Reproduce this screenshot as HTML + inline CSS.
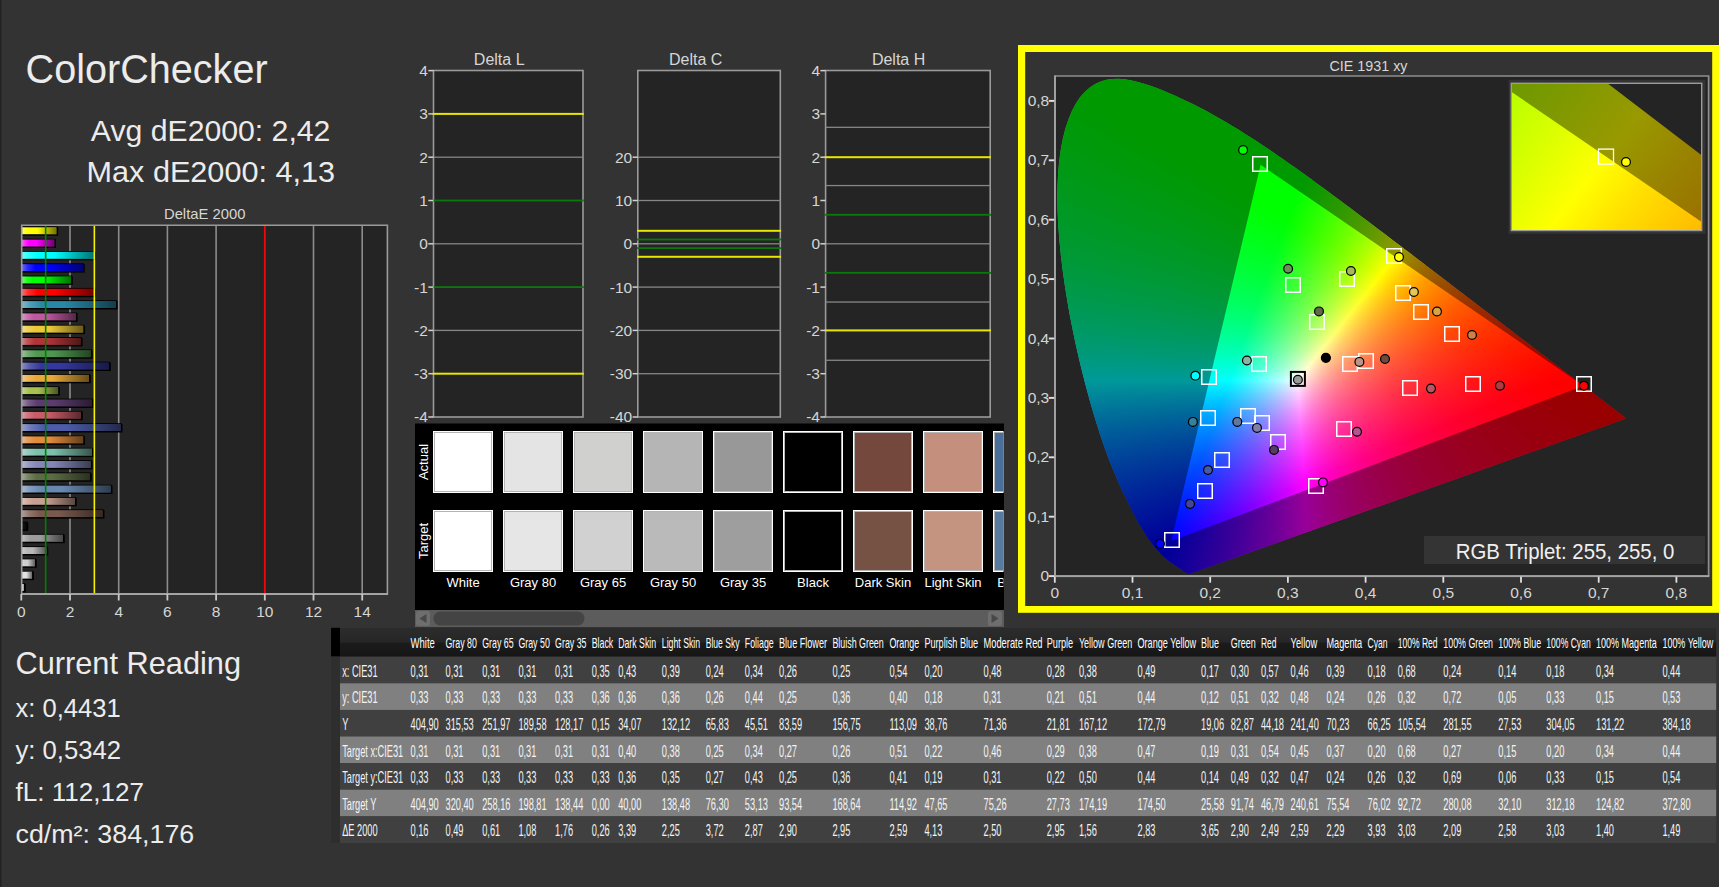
<!DOCTYPE html><html lang="en"><head><meta charset="utf-8"><title>ColorChecker</title>
<style>html,body{margin:0;padding:0;background:#333333;overflow:hidden}body{width:1719px;height:887px;position:relative;font-family:"Liberation Sans",sans-serif}
svg{position:absolute;left:0;top:0;display:block;font-family:"Liberation Sans",sans-serif}
svg text{white-space:pre}</style></head><body>
<svg id="page" width="1719" height="887" viewBox="0 0 1719 887">
<rect width="1719" height="887" fill="#333333"/><rect width="1.5" height="887" fill="#222"/>
<g id="headings">
<text x="25.6" y="83" font-size="40.5" fill="#ececec" textLength="242" lengthAdjust="spacingAndGlyphs">ColorChecker</text>
<text x="90.8" y="141.2" font-size="29" fill="#ececec" textLength="239.6" lengthAdjust="spacingAndGlyphs">Avg dE2000: 2,42</text>
<text x="86.6" y="182.4" font-size="29" fill="#ececec" textLength="248.4" lengthAdjust="spacingAndGlyphs">Max dE2000: 4,13</text>
<text x="15.5" y="674" font-size="30.5" fill="#ececec" textLength="225.5" lengthAdjust="spacingAndGlyphs">Current Reading</text>
<text x="15.5" y="717.1" font-size="26" fill="#ececec" textLength="105.2" lengthAdjust="spacingAndGlyphs">x: 0,4431</text>
<text x="15.5" y="758.6" font-size="26" fill="#ececec" textLength="105.6" lengthAdjust="spacingAndGlyphs">y: 0,5342</text>
<text x="15.5" y="800.6" font-size="26" fill="#ececec" textLength="128.5" lengthAdjust="spacingAndGlyphs">fL: 112,127</text>
<text x="15.5" y="842.7" font-size="26" fill="#ececec" textLength="178.7" lengthAdjust="spacingAndGlyphs">cd/m²: 384,176</text>
</g>
<g id="deltaE">
<text x="204.7" y="218.5" font-size="15" fill="#d6d6d6" text-anchor="middle" textLength="81.5" lengthAdjust="spacingAndGlyphs">DeltaE 2000</text>
<rect x="21" y="225" width="367" height="369" fill="#242424"/>
<rect x="69.2" y="225" width="1.6" height="369" fill="#8c8c8c"/>
<rect x="117.9" y="225" width="1.6" height="369" fill="#8c8c8c"/>
<rect x="166.6" y="225" width="1.6" height="369" fill="#8c8c8c"/>
<rect x="215.3" y="225" width="1.6" height="369" fill="#8c8c8c"/>
<rect x="312.7" y="225" width="1.6" height="369" fill="#8c8c8c"/>
<rect x="361.4" y="225" width="1.6" height="369" fill="#8c8c8c"/>
<defs><linearGradient id="bs" x1="0" x2="1" y1="0" y2="0"><stop offset="0" stop-color="#fff" stop-opacity=".42"/><stop offset=".09" stop-color="#fff" stop-opacity=".18"/><stop offset=".22" stop-color="#fff" stop-opacity="0"/><stop offset=".45" stop-color="#000" stop-opacity="0"/><stop offset="1" stop-color="#000" stop-opacity=".55"/></linearGradient></defs>
<rect x="21.5" y="227.2" width="36.68" height="8.5" fill="#000"/>
<rect x="21.5" y="226.4" width="35.88" height="8.5" fill="#000"/>
<rect x="21.8" y="227.3" width="34.58" height="6.9" fill="#ffff00"/>
<rect x="21.8" y="227.3" width="34.58" height="6.9" fill="url(#bs)"/>
<rect x="21.5" y="239.5" width="34.49" height="8.5" fill="#000"/>
<rect x="21.5" y="238.7" width="33.69" height="8.5" fill="#000"/>
<rect x="21.8" y="239.6" width="32.39" height="6.9" fill="#ff00ff"/>
<rect x="21.8" y="239.6" width="32.39" height="6.9" fill="url(#bs)"/>
<rect x="21.5" y="251.8" width="74.18" height="8.5" fill="#000"/>
<rect x="21.5" y="251" width="73.38" height="8.5" fill="#000"/>
<rect x="21.8" y="251.9" width="72.08" height="6.9" fill="#00ffff"/>
<rect x="21.8" y="251.9" width="72.08" height="6.9" fill="url(#bs)"/>
<rect x="21.5" y="264.1" width="63.22" height="8.5" fill="#000"/>
<rect x="21.5" y="263.3" width="62.42" height="8.5" fill="#000"/>
<rect x="21.8" y="264.2" width="61.12" height="6.9" fill="#0000ff"/>
<rect x="21.8" y="264.2" width="61.12" height="6.9" fill="url(#bs)"/>
<rect x="21.5" y="276.4" width="51.29" height="8.5" fill="#000"/>
<rect x="21.5" y="275.6" width="50.49" height="8.5" fill="#000"/>
<rect x="21.8" y="276.5" width="49.19" height="6.9" fill="#00ff00"/>
<rect x="21.8" y="276.5" width="49.19" height="6.9" fill="url(#bs)"/>
<rect x="21.5" y="288.7" width="74.18" height="8.5" fill="#000"/>
<rect x="21.5" y="287.9" width="73.38" height="8.5" fill="#000"/>
<rect x="21.8" y="288.8" width="72.08" height="6.9" fill="#ff0000"/>
<rect x="21.8" y="288.8" width="72.08" height="6.9" fill="url(#bs)"/>
<rect x="21.5" y="301" width="96.1" height="8.5" fill="#000"/>
<rect x="21.5" y="300.2" width="95.3" height="8.5" fill="#000"/>
<rect x="21.8" y="301.1" width="94" height="6.9" fill="#2888a8"/>
<rect x="21.8" y="301.1" width="94" height="6.9" fill="url(#bs)"/>
<rect x="21.5" y="313.3" width="56.16" height="8.5" fill="#000"/>
<rect x="21.5" y="312.5" width="55.36" height="8.5" fill="#000"/>
<rect x="21.8" y="313.4" width="54.06" height="6.9" fill="#c058a0"/>
<rect x="21.8" y="313.4" width="54.06" height="6.9" fill="url(#bs)"/>
<rect x="21.5" y="325.6" width="63.47" height="8.5" fill="#000"/>
<rect x="21.5" y="324.8" width="62.67" height="8.5" fill="#000"/>
<rect x="21.8" y="325.7" width="61.37" height="6.9" fill="#ecc838"/>
<rect x="21.8" y="325.7" width="61.37" height="6.9" fill="url(#bs)"/>
<rect x="21.5" y="337.9" width="61.03" height="8.5" fill="#000"/>
<rect x="21.5" y="337.1" width="60.23" height="8.5" fill="#000"/>
<rect x="21.8" y="338" width="58.93" height="6.9" fill="#b03438"/>
<rect x="21.8" y="338" width="58.93" height="6.9" fill="url(#bs)"/>
<rect x="21.5" y="350.2" width="71.02" height="8.5" fill="#000"/>
<rect x="21.5" y="349.4" width="70.21" height="8.5" fill="#000"/>
<rect x="21.8" y="350.3" width="68.91" height="6.9" fill="#509850"/>
<rect x="21.8" y="350.3" width="68.91" height="6.9" fill="url(#bs)"/>
<rect x="21.5" y="362.5" width="89.28" height="8.5" fill="#000"/>
<rect x="21.5" y="361.7" width="88.48" height="8.5" fill="#000"/>
<rect x="21.8" y="362.6" width="87.18" height="6.9" fill="#34389c"/>
<rect x="21.8" y="362.6" width="87.18" height="6.9" fill="url(#bs)"/>
<rect x="21.5" y="374.8" width="69.31" height="8.5" fill="#000"/>
<rect x="21.5" y="374" width="68.51" height="8.5" fill="#000"/>
<rect x="21.8" y="374.9" width="67.21" height="6.9" fill="#e8a838"/>
<rect x="21.8" y="374.9" width="67.21" height="6.9" fill="url(#bs)"/>
<rect x="21.5" y="387.1" width="38.39" height="8.5" fill="#000"/>
<rect x="21.5" y="386.3" width="37.59" height="8.5" fill="#000"/>
<rect x="21.8" y="387.2" width="36.29" height="6.9" fill="#a8c050"/>
<rect x="21.8" y="387.2" width="36.29" height="6.9" fill="url(#bs)"/>
<rect x="21.5" y="399.4" width="72.23" height="8.5" fill="#000"/>
<rect x="21.5" y="398.6" width="71.43" height="8.5" fill="#000"/>
<rect x="21.8" y="399.5" width="70.13" height="6.9" fill="#5c3c70"/>
<rect x="21.8" y="399.5" width="70.13" height="6.9" fill="url(#bs)"/>
<rect x="21.5" y="411.7" width="61.27" height="8.5" fill="#000"/>
<rect x="21.5" y="410.9" width="60.48" height="8.5" fill="#000"/>
<rect x="21.8" y="411.8" width="59.17" height="6.9" fill="#c85c68"/>
<rect x="21.8" y="411.8" width="59.17" height="6.9" fill="url(#bs)"/>
<rect x="21.5" y="424" width="100.97" height="8.5" fill="#000"/>
<rect x="21.5" y="423.2" width="100.17" height="8.5" fill="#000"/>
<rect x="21.8" y="424.1" width="98.87" height="6.9" fill="#4c5ca8"/>
<rect x="21.8" y="424.1" width="98.87" height="6.9" fill="url(#bs)"/>
<rect x="21.5" y="436.3" width="63.47" height="8.5" fill="#000"/>
<rect x="21.5" y="435.5" width="62.67" height="8.5" fill="#000"/>
<rect x="21.8" y="436.4" width="61.37" height="6.9" fill="#e08c3c"/>
<rect x="21.8" y="436.4" width="61.37" height="6.9" fill="url(#bs)"/>
<rect x="21.5" y="448.6" width="72.23" height="8.5" fill="#000"/>
<rect x="21.5" y="447.8" width="71.43" height="8.5" fill="#000"/>
<rect x="21.8" y="448.7" width="70.13" height="6.9" fill="#7cc0ac"/>
<rect x="21.8" y="448.7" width="70.13" height="6.9" fill="url(#bs)"/>
<rect x="21.5" y="460.9" width="71.02" height="8.5" fill="#000"/>
<rect x="21.5" y="460.1" width="70.21" height="8.5" fill="#000"/>
<rect x="21.8" y="461" width="68.91" height="6.9" fill="#8486b8"/>
<rect x="21.8" y="461" width="68.91" height="6.9" fill="url(#bs)"/>
<rect x="21.5" y="473.2" width="70.28" height="8.5" fill="#000"/>
<rect x="21.5" y="472.4" width="69.48" height="8.5" fill="#000"/>
<rect x="21.8" y="473.3" width="68.18" height="6.9" fill="#5c6c44"/>
<rect x="21.8" y="473.3" width="68.18" height="6.9" fill="url(#bs)"/>
<rect x="21.5" y="485.5" width="90.98" height="8.5" fill="#000"/>
<rect x="21.5" y="484.7" width="90.18" height="8.5" fill="#000"/>
<rect x="21.8" y="485.6" width="88.88" height="6.9" fill="#6888b0"/>
<rect x="21.8" y="485.6" width="88.88" height="6.9" fill="url(#bs)"/>
<rect x="21.5" y="497.8" width="55.19" height="8.5" fill="#000"/>
<rect x="21.5" y="497" width="54.39" height="8.5" fill="#000"/>
<rect x="21.8" y="497.9" width="53.09" height="6.9" fill="#c8a090"/>
<rect x="21.8" y="497.9" width="53.09" height="6.9" fill="url(#bs)"/>
<rect x="21.5" y="510.1" width="82.95" height="8.5" fill="#000"/>
<rect x="21.5" y="509.3" width="82.15" height="8.5" fill="#000"/>
<rect x="21.8" y="510.2" width="80.85" height="6.9" fill="#7a5a4e"/>
<rect x="21.8" y="510.2" width="80.85" height="6.9" fill="url(#bs)"/>
<rect x="21.5" y="522.4" width="6.73" height="8.5" fill="#000"/>
<rect x="21.5" y="521.6" width="5.93" height="8.5" fill="#000"/>
<rect x="21.8" y="522.5" width="4.63" height="6.9" fill="#101010"/>
<rect x="21.8" y="522.5" width="4.63" height="6.9" fill="url(#bs)"/>
<rect x="21.5" y="534.7" width="43.26" height="8.5" fill="#000"/>
<rect x="21.5" y="533.9" width="42.46" height="8.5" fill="#000"/>
<rect x="21.8" y="534.8" width="41.16" height="6.9" fill="#9c9c9c"/>
<rect x="21.8" y="534.8" width="41.16" height="6.9" fill="url(#bs)"/>
<rect x="21.5" y="547" width="26.7" height="8.5" fill="#000"/>
<rect x="21.5" y="546.2" width="25.9" height="8.5" fill="#000"/>
<rect x="21.8" y="547.1" width="24.6" height="6.9" fill="#b8b8b8"/>
<rect x="21.8" y="547.1" width="24.6" height="6.9" fill="url(#bs)"/>
<rect x="21.5" y="559.3" width="15.25" height="8.5" fill="#000"/>
<rect x="21.5" y="558.5" width="14.45" height="8.5" fill="#000"/>
<rect x="21.8" y="559.4" width="13.15" height="6.9" fill="#d0d0d0"/>
<rect x="21.8" y="559.4" width="13.15" height="6.9" fill="url(#bs)"/>
<rect x="21.5" y="571.6" width="12.33" height="8.5" fill="#000"/>
<rect x="21.5" y="570.8" width="11.53" height="8.5" fill="#000"/>
<rect x="21.8" y="571.7" width="10.23" height="6.9" fill="#e2e2e2"/>
<rect x="21.8" y="571.7" width="10.23" height="6.9" fill="url(#bs)"/>
<rect x="21.5" y="583.9" width="4.3" height="8.5" fill="#000"/>
<rect x="21.5" y="583.1" width="3.5" height="8.5" fill="#000"/>
<rect x="21.8" y="584" width="2.2" height="6.9" fill="#f4f4f4"/>
<rect x="21.8" y="584" width="2.2" height="6.9" fill="url(#bs)"/>
<rect x="44.85" y="225" width="1.6" height="369" fill="#008000"/>
<rect x="93.55" y="225" width="1.6" height="369" fill="#f4f400"/>
<rect x="263.9" y="225" width="1.8" height="369" fill="#f00808"/>
<path d="M21.7 594 V225.2 H387.4 V594 Z" fill="none" stroke="#9a9a9a" stroke-width="1.6"/>
<rect x="21" y="593.1" width="367" height="1.8" fill="#a8a8a8"/>
<rect x="20.4" y="594" width="1.8" height="6.5" fill="#c8c8c8"/>
<text x="21.3" y="617" font-size="15.5" fill="#d6d6d6" text-anchor="middle">0</text>
<rect x="69.1" y="594" width="1.8" height="6.5" fill="#c8c8c8"/>
<text x="70" y="617" font-size="15.5" fill="#d6d6d6" text-anchor="middle">2</text>
<rect x="117.8" y="594" width="1.8" height="6.5" fill="#c8c8c8"/>
<text x="118.7" y="617" font-size="15.5" fill="#d6d6d6" text-anchor="middle">4</text>
<rect x="166.5" y="594" width="1.8" height="6.5" fill="#c8c8c8"/>
<text x="167.4" y="617" font-size="15.5" fill="#d6d6d6" text-anchor="middle">6</text>
<rect x="215.2" y="594" width="1.8" height="6.5" fill="#c8c8c8"/>
<text x="216.1" y="617" font-size="15.5" fill="#d6d6d6" text-anchor="middle">8</text>
<rect x="263.9" y="594" width="1.8" height="6.5" fill="#c8c8c8"/>
<text x="264.8" y="617" font-size="15.5" fill="#d6d6d6" text-anchor="middle">10</text>
<rect x="312.6" y="594" width="1.8" height="6.5" fill="#c8c8c8"/>
<text x="313.5" y="617" font-size="15.5" fill="#d6d6d6" text-anchor="middle">12</text>
<rect x="361.3" y="594" width="1.8" height="6.5" fill="#c8c8c8"/>
<text x="362.2" y="617" font-size="15.5" fill="#d6d6d6" text-anchor="middle">14</text>
</g>
<g id="deltaL">
<text x="499.2" y="65.4" font-size="16" fill="#d6d6d6" text-anchor="middle">Delta L</text>
<rect x="433.5" y="70.5" width="149.5" height="346.5" fill="#242424"/>
<rect x="433.5" y="70.5" width="149.5" height="346.5" fill="none" stroke="#9a9a9a" stroke-width="1.6"/>
<rect x="433.5" y="156.55" width="149.5" height="1.3" fill="#868686"/>
<rect x="433.5" y="243.15" width="149.5" height="1.3" fill="#868686"/>
<rect x="433.5" y="329.75" width="149.5" height="1.3" fill="#868686"/>
<rect x="432.7" y="112.9" width="151.1" height="2" fill="#e6e600"/>
<rect x="432.7" y="372.7" width="151.1" height="2" fill="#e6e600"/>
<rect x="432.7" y="199.6" width="151.1" height="1.8" fill="#0b780b"/>
<rect x="432.7" y="286.2" width="151.1" height="1.8" fill="#0b780b"/>
<rect x="428.3" y="69.85" width="5.2" height="1.5" fill="#d0d0d0"/>
<text x="427.9" y="76" font-size="15.5" fill="#d6d6d6" text-anchor="end">4</text>
<rect x="428.3" y="113.15" width="5.2" height="1.5" fill="#d0d0d0"/>
<text x="427.9" y="119.3" font-size="15.5" fill="#d6d6d6" text-anchor="end">3</text>
<rect x="428.3" y="156.45" width="5.2" height="1.5" fill="#d0d0d0"/>
<text x="427.9" y="162.6" font-size="15.5" fill="#d6d6d6" text-anchor="end">2</text>
<rect x="428.3" y="199.75" width="5.2" height="1.5" fill="#d0d0d0"/>
<text x="427.9" y="205.9" font-size="15.5" fill="#d6d6d6" text-anchor="end">1</text>
<rect x="428.3" y="243.05" width="5.2" height="1.5" fill="#d0d0d0"/>
<text x="427.9" y="249.2" font-size="15.5" fill="#d6d6d6" text-anchor="end">0</text>
<rect x="428.3" y="286.35" width="5.2" height="1.5" fill="#d0d0d0"/>
<text x="427.9" y="292.5" font-size="15.5" fill="#d6d6d6" text-anchor="end">-1</text>
<rect x="428.3" y="329.65" width="5.2" height="1.5" fill="#d0d0d0"/>
<text x="427.9" y="335.8" font-size="15.5" fill="#d6d6d6" text-anchor="end">-2</text>
<rect x="428.3" y="372.95" width="5.2" height="1.5" fill="#d0d0d0"/>
<text x="427.9" y="379.1" font-size="15.5" fill="#d6d6d6" text-anchor="end">-3</text>
<rect x="428.3" y="416.25" width="5.2" height="1.5" fill="#d0d0d0"/>
<text x="427.9" y="422.4" font-size="15.5" fill="#d6d6d6" text-anchor="end">-4</text>
</g>
<g id="deltaC">
<text x="695.7" y="65.4" font-size="16" fill="#d6d6d6" text-anchor="middle">Delta C</text>
<rect x="637.8" y="70.5" width="142.5" height="346.5" fill="#242424"/>
<rect x="637.8" y="70.5" width="142.5" height="346.5" fill="none" stroke="#9a9a9a" stroke-width="1.6"/>
<rect x="637.8" y="156.55" width="142.5" height="1.3" fill="#868686"/>
<rect x="637.8" y="199.85" width="142.5" height="1.3" fill="#868686"/>
<rect x="637.8" y="243.15" width="142.5" height="1.3" fill="#868686"/>
<rect x="637.8" y="286.45" width="142.5" height="1.3" fill="#868686"/>
<rect x="637.8" y="329.75" width="142.5" height="1.3" fill="#868686"/>
<rect x="637.8" y="373.05" width="142.5" height="1.3" fill="#868686"/>
<rect x="637" y="229.81" width="144.1" height="2" fill="#e6e600"/>
<rect x="637" y="255.79" width="144.1" height="2" fill="#e6e600"/>
<rect x="637" y="238.57" width="144.1" height="1.8" fill="#0b780b"/>
<rect x="637" y="247.23" width="144.1" height="1.8" fill="#0b780b"/>
<rect x="632.6" y="156.45" width="5.2" height="1.5" fill="#d0d0d0"/>
<text x="632.2" y="162.6" font-size="15.5" fill="#d6d6d6" text-anchor="end">20</text>
<rect x="632.6" y="199.75" width="5.2" height="1.5" fill="#d0d0d0"/>
<text x="632.2" y="205.9" font-size="15.5" fill="#d6d6d6" text-anchor="end">10</text>
<rect x="632.6" y="243.05" width="5.2" height="1.5" fill="#d0d0d0"/>
<text x="632.2" y="249.2" font-size="15.5" fill="#d6d6d6" text-anchor="end">0</text>
<rect x="632.6" y="286.35" width="5.2" height="1.5" fill="#d0d0d0"/>
<text x="632.2" y="292.5" font-size="15.5" fill="#d6d6d6" text-anchor="end">-10</text>
<rect x="632.6" y="329.65" width="5.2" height="1.5" fill="#d0d0d0"/>
<text x="632.2" y="335.8" font-size="15.5" fill="#d6d6d6" text-anchor="end">-20</text>
<rect x="632.6" y="372.95" width="5.2" height="1.5" fill="#d0d0d0"/>
<text x="632.2" y="379.1" font-size="15.5" fill="#d6d6d6" text-anchor="end">-30</text>
<rect x="632.6" y="416.25" width="5.2" height="1.5" fill="#d0d0d0"/>
<text x="632.2" y="422.4" font-size="15.5" fill="#d6d6d6" text-anchor="end">-40</text>
</g>
<g id="deltaH">
<text x="898.6" y="65.4" font-size="16" fill="#d6d6d6" text-anchor="middle">Delta H</text>
<rect x="825.6" y="70.5" width="164.6" height="346.5" fill="#242424"/>
<rect x="825.6" y="70.5" width="164.6" height="346.5" fill="none" stroke="#9a9a9a" stroke-width="1.6"/>
<rect x="825.6" y="126.67" width="164.6" height="1.3" fill="#868686"/>
<rect x="825.6" y="184.91" width="164.6" height="1.3" fill="#868686"/>
<rect x="825.6" y="243.15" width="164.6" height="1.3" fill="#868686"/>
<rect x="825.6" y="301.39" width="164.6" height="1.3" fill="#868686"/>
<rect x="825.6" y="359.63" width="164.6" height="1.3" fill="#868686"/>
<rect x="824.8" y="156.2" width="166.2" height="2" fill="#e6e600"/>
<rect x="824.8" y="329.4" width="166.2" height="2" fill="#e6e600"/>
<rect x="824.8" y="213.89" width="166.2" height="1.8" fill="#0b780b"/>
<rect x="824.8" y="271.91" width="166.2" height="1.8" fill="#0b780b"/>
<rect x="820.4" y="69.85" width="5.2" height="1.5" fill="#d0d0d0"/>
<text x="820" y="76" font-size="15.5" fill="#d6d6d6" text-anchor="end">4</text>
<rect x="820.4" y="113.15" width="5.2" height="1.5" fill="#d0d0d0"/>
<text x="820" y="119.3" font-size="15.5" fill="#d6d6d6" text-anchor="end">3</text>
<rect x="820.4" y="156.45" width="5.2" height="1.5" fill="#d0d0d0"/>
<text x="820" y="162.6" font-size="15.5" fill="#d6d6d6" text-anchor="end">2</text>
<rect x="820.4" y="199.75" width="5.2" height="1.5" fill="#d0d0d0"/>
<text x="820" y="205.9" font-size="15.5" fill="#d6d6d6" text-anchor="end">1</text>
<rect x="820.4" y="243.05" width="5.2" height="1.5" fill="#d0d0d0"/>
<text x="820" y="249.2" font-size="15.5" fill="#d6d6d6" text-anchor="end">0</text>
<rect x="820.4" y="286.35" width="5.2" height="1.5" fill="#d0d0d0"/>
<text x="820" y="292.5" font-size="15.5" fill="#d6d6d6" text-anchor="end">-1</text>
<rect x="820.4" y="329.65" width="5.2" height="1.5" fill="#d0d0d0"/>
<text x="820" y="335.8" font-size="15.5" fill="#d6d6d6" text-anchor="end">-2</text>
<rect x="820.4" y="372.95" width="5.2" height="1.5" fill="#d0d0d0"/>
<text x="820" y="379.1" font-size="15.5" fill="#d6d6d6" text-anchor="end">-3</text>
<rect x="820.4" y="416.25" width="5.2" height="1.5" fill="#d0d0d0"/>
<text x="820" y="422.4" font-size="15.5" fill="#d6d6d6" text-anchor="end">-4</text>
</g>
<g id="swatches">
<rect x="415" y="423.5" width="589" height="203.5" fill="#000"/>
<clipPath id="swc"><rect x="415" y="423.5" width="588.5" height="186"/></clipPath><g clip-path="url(#swc)">
<rect x="433" y="431" width="60" height="62" fill="#fff"/><rect x="434" y="432" width="58" height="60" fill="#b4b4b4"/><rect x="435" y="433" width="56" height="58" fill="#ffffff"/>
<rect x="433" y="510" width="60" height="62" fill="#fff"/><rect x="434" y="511" width="58" height="60" fill="#b4b4b4"/><rect x="435" y="512" width="56" height="58" fill="#ffffff"/>
<text x="463" y="587" font-size="13" fill="#fff" text-anchor="middle">White</text>
<rect x="503" y="431" width="60" height="62" fill="#fff"/><rect x="504" y="432" width="58" height="60" fill="#b4b4b4"/><rect x="505" y="433" width="56" height="58" fill="#e4e4e4"/>
<rect x="503" y="510" width="60" height="62" fill="#fff"/><rect x="504" y="511" width="58" height="60" fill="#b4b4b4"/><rect x="505" y="512" width="56" height="58" fill="#e6e6e6"/>
<text x="533" y="587" font-size="13" fill="#fff" text-anchor="middle">Gray 80</text>
<rect x="573" y="431" width="60" height="62" fill="#fff"/><rect x="574" y="432" width="58" height="60" fill="#b4b4b4"/><rect x="575" y="433" width="56" height="58" fill="#d0d0ce"/>
<rect x="573" y="510" width="60" height="62" fill="#fff"/><rect x="574" y="511" width="58" height="60" fill="#b4b4b4"/><rect x="575" y="512" width="56" height="58" fill="#d1d1d1"/>
<text x="603" y="587" font-size="13" fill="#fff" text-anchor="middle">Gray 65</text>
<rect x="643" y="431" width="60" height="62" fill="#fff"/><rect x="644" y="432" width="58" height="60" fill="#b4b4b4"/><rect x="645" y="433" width="56" height="58" fill="#b5b5b5"/>
<rect x="643" y="510" width="60" height="62" fill="#fff"/><rect x="644" y="511" width="58" height="60" fill="#b4b4b4"/><rect x="645" y="512" width="56" height="58" fill="#bababa"/>
<text x="673" y="587" font-size="13" fill="#fff" text-anchor="middle">Gray 50</text>
<rect x="713" y="431" width="60" height="62" fill="#fff"/><rect x="714" y="432" width="58" height="60" fill="#b4b4b4"/><rect x="715" y="433" width="56" height="58" fill="#989898"/>
<rect x="713" y="510" width="60" height="62" fill="#fff"/><rect x="714" y="511" width="58" height="60" fill="#b4b4b4"/><rect x="715" y="512" width="56" height="58" fill="#9e9e9e"/>
<text x="743" y="587" font-size="13" fill="#fff" text-anchor="middle">Gray 35</text>
<rect x="783" y="431" width="60" height="62" fill="#fff"/><rect x="784" y="432" width="58" height="60" fill="#b4b4b4"/><rect x="785" y="433" width="56" height="58" fill="#000000"/>
<rect x="783" y="510" width="60" height="62" fill="#fff"/><rect x="784" y="511" width="58" height="60" fill="#b4b4b4"/><rect x="785" y="512" width="56" height="58" fill="#000000"/>
<text x="813" y="587" font-size="13" fill="#fff" text-anchor="middle">Black</text>
<rect x="853" y="431" width="60" height="62" fill="#fff"/><rect x="854" y="432" width="58" height="60" fill="#b4b4b4"/><rect x="855" y="433" width="56" height="58" fill="#74483c"/>
<rect x="853" y="510" width="60" height="62" fill="#fff"/><rect x="854" y="511" width="58" height="60" fill="#b4b4b4"/><rect x="855" y="512" width="56" height="58" fill="#765244"/>
<text x="883" y="587" font-size="13" fill="#fff" text-anchor="middle">Dark Skin</text>
<rect x="923" y="431" width="60" height="62" fill="#fff"/><rect x="924" y="432" width="58" height="60" fill="#b4b4b4"/><rect x="925" y="433" width="56" height="58" fill="#c48f7c"/>
<rect x="923" y="510" width="60" height="62" fill="#fff"/><rect x="924" y="511" width="58" height="60" fill="#b4b4b4"/><rect x="925" y="512" width="56" height="58" fill="#c49481"/>
<text x="953" y="587" font-size="13" fill="#fff" text-anchor="middle">Light Skin</text>
<rect x="993" y="431" width="60" height="62" fill="#fff"/><rect x="994" y="432" width="58" height="60" fill="#b4b4b4"/><rect x="995" y="433" width="56" height="58" fill="#4a6f9c"/>
<rect x="993" y="510" width="60" height="62" fill="#fff"/><rect x="994" y="511" width="58" height="60" fill="#b4b4b4"/><rect x="995" y="512" width="56" height="58" fill="#587aa0"/>
<text x="1023" y="587" font-size="13" fill="#fff" text-anchor="middle">Blue Sky</text>
</g>
<text transform="translate(428.3,462) rotate(-90)" font-size="13" fill="#fff" text-anchor="middle">Actual</text>
<text transform="translate(428.3,541) rotate(-90)" font-size="13" fill="#fff" text-anchor="middle">Target</text>
<rect x="415" y="610" width="589" height="17" fill="#5c5c5c"/>
<rect x="433.5" y="611.5" width="151" height="14" rx="7" fill="#444"/>
<rect x="416" y="611" width="14" height="15" rx="2.5" fill="#6e6e6e"/><path d="M426.5 614 L426.5 623 L419.5 618.5Z" fill="#484848"/>
<rect x="988" y="611" width="14" height="15" rx="2.5" fill="#6e6e6e"/><path d="M991.5 614 L991.5 623 L998.5 618.5Z" fill="#484848"/>
</g>
<g id="table">
<defs><linearGradient id="th" x1="0" x2="0" y1="0" y2="1"><stop offset="0" stop-color="#2c2c2c"/><stop offset=".5" stop-color="#262626"/><stop offset=".52" stop-color="#1b1b1b"/><stop offset="1" stop-color="#161616"/></linearGradient></defs>
<rect x="331" y="627.8" width="1385.2" height="28.9" fill="url(#th)"/>
<rect x="331" y="627.8" width="9" height="28.9" fill="#000"/>
<rect x="331" y="656.7" width="1385.2" height="26.7" fill="#404040"/>
<rect x="331" y="683.3" width="1385.2" height="26.7" fill="#808080"/>
<rect x="331" y="709.9" width="1385.2" height="26.7" fill="#404040"/>
<rect x="331" y="736.5" width="1385.2" height="26.7" fill="#808080"/>
<rect x="331" y="763.1" width="1385.2" height="26.7" fill="#404040"/>
<rect x="331" y="789.7" width="1385.2" height="26.7" fill="#808080"/>
<rect x="331" y="816.3" width="1385.2" height="26.7" fill="#404040"/>
<rect x="331" y="656.7" width="9" height="186.3" fill="#2e2e2e"/>
<text x="410.5" y="647.8" font-size="14.3" fill="#fff" textLength="24.4" lengthAdjust="spacingAndGlyphs">White</text>
<text x="445.5" y="647.8" font-size="14.3" fill="#fff" textLength="31.4" lengthAdjust="spacingAndGlyphs">Gray 80</text>
<text x="482.2" y="647.8" font-size="14.3" fill="#fff" textLength="31.4" lengthAdjust="spacingAndGlyphs">Gray 65</text>
<text x="518.4" y="647.8" font-size="14.3" fill="#fff" textLength="31.4" lengthAdjust="spacingAndGlyphs">Gray 50</text>
<text x="555.1" y="647.8" font-size="14.3" fill="#fff" textLength="31.4" lengthAdjust="spacingAndGlyphs">Gray 35</text>
<text x="591.7" y="647.8" font-size="14.3" fill="#fff" textLength="21.6" lengthAdjust="spacingAndGlyphs">Black</text>
<text x="618.2" y="647.8" font-size="14.3" fill="#fff" textLength="37.9" lengthAdjust="spacingAndGlyphs">Dark Skin</text>
<text x="661.8" y="647.8" font-size="14.3" fill="#fff" textLength="38.3" lengthAdjust="spacingAndGlyphs">Light Skin</text>
<text x="705.7" y="647.8" font-size="14.3" fill="#fff" textLength="33.8" lengthAdjust="spacingAndGlyphs">Blue Sky</text>
<text x="744.8" y="647.8" font-size="14.3" fill="#fff" textLength="28.9" lengthAdjust="spacingAndGlyphs">Foliage</text>
<text x="779" y="647.8" font-size="14.3" fill="#fff" textLength="48" lengthAdjust="spacingAndGlyphs">Blue Flower</text>
<text x="832.4" y="647.8" font-size="14.3" fill="#fff" textLength="51.3" lengthAdjust="spacingAndGlyphs">Bluish Green</text>
<text x="889.4" y="647.8" font-size="14.3" fill="#fff" textLength="29.7" lengthAdjust="spacingAndGlyphs">Orange</text>
<text x="924.4" y="647.8" font-size="14.3" fill="#fff" textLength="53.8" lengthAdjust="spacingAndGlyphs">Purplish Blue</text>
<text x="983.5" y="647.8" font-size="14.3" fill="#fff" textLength="59" lengthAdjust="spacingAndGlyphs">Moderate Red</text>
<text x="1046.7" y="647.8" font-size="14.3" fill="#fff" textLength="26.5" lengthAdjust="spacingAndGlyphs">Purple</text>
<text x="1078.9" y="647.8" font-size="14.3" fill="#fff" textLength="53.3" lengthAdjust="spacingAndGlyphs">Yellow Green</text>
<text x="1137.5" y="647.8" font-size="14.3" fill="#fff" textLength="58.6" lengthAdjust="spacingAndGlyphs">Orange Yellow</text>
<text x="1201" y="647.8" font-size="14.3" fill="#fff" textLength="17.9" lengthAdjust="spacingAndGlyphs">Blue</text>
<text x="1230.8" y="647.8" font-size="14.3" fill="#fff" textLength="24.8" lengthAdjust="spacingAndGlyphs">Green</text>
<text x="1260.9" y="647.8" font-size="14.3" fill="#fff" textLength="15.5" lengthAdjust="spacingAndGlyphs">Red</text>
<text x="1290.6" y="647.8" font-size="14.3" fill="#fff" textLength="26.5" lengthAdjust="spacingAndGlyphs">Yellow</text>
<text x="1326.4" y="647.8" font-size="14.3" fill="#fff" textLength="35.8" lengthAdjust="spacingAndGlyphs">Magenta</text>
<text x="1367.6" y="647.8" font-size="14.3" fill="#fff" textLength="20" lengthAdjust="spacingAndGlyphs">Cyan</text>
<text x="1397.7" y="647.8" font-size="14.3" fill="#fff" textLength="39.9" lengthAdjust="spacingAndGlyphs">100% Red</text>
<text x="1443.3" y="647.8" font-size="14.3" fill="#fff" textLength="49.7" lengthAdjust="spacingAndGlyphs">100% Green</text>
<text x="1498.3" y="647.8" font-size="14.3" fill="#fff" textLength="42.8" lengthAdjust="spacingAndGlyphs">100% Blue</text>
<text x="1546.3" y="647.8" font-size="14.3" fill="#fff" textLength="44.4" lengthAdjust="spacingAndGlyphs">100% Cyan</text>
<text x="1596" y="647.8" font-size="14.3" fill="#fff" textLength="60.7" lengthAdjust="spacingAndGlyphs">100% Magenta</text>
<text x="1662.4" y="647.8" font-size="14.3" fill="#fff" textLength="50.9" lengthAdjust="spacingAndGlyphs">100% Yellow</text>
<text transform="translate(342.2,676.7) scale(.56,1)" font-size="16.5" fill="#f4f4f4">x: CIE31</text>
<text transform="translate(410.5,676.7) scale(.56,1)" font-size="16.5" fill="#f4f4f4">0,31</text>
<text transform="translate(445.5,676.7) scale(.56,1)" font-size="16.5" fill="#f4f4f4">0,31</text>
<text transform="translate(482.2,676.7) scale(.56,1)" font-size="16.5" fill="#f4f4f4">0,31</text>
<text transform="translate(518.4,676.7) scale(.56,1)" font-size="16.5" fill="#f4f4f4">0,31</text>
<text transform="translate(555.1,676.7) scale(.56,1)" font-size="16.5" fill="#f4f4f4">0,31</text>
<text transform="translate(591.7,676.7) scale(.56,1)" font-size="16.5" fill="#f4f4f4">0,35</text>
<text transform="translate(618.2,676.7) scale(.56,1)" font-size="16.5" fill="#f4f4f4">0,43</text>
<text transform="translate(661.8,676.7) scale(.56,1)" font-size="16.5" fill="#f4f4f4">0,39</text>
<text transform="translate(705.7,676.7) scale(.56,1)" font-size="16.5" fill="#f4f4f4">0,24</text>
<text transform="translate(744.8,676.7) scale(.56,1)" font-size="16.5" fill="#f4f4f4">0,34</text>
<text transform="translate(779,676.7) scale(.56,1)" font-size="16.5" fill="#f4f4f4">0,26</text>
<text transform="translate(832.4,676.7) scale(.56,1)" font-size="16.5" fill="#f4f4f4">0,25</text>
<text transform="translate(889.4,676.7) scale(.56,1)" font-size="16.5" fill="#f4f4f4">0,54</text>
<text transform="translate(924.4,676.7) scale(.56,1)" font-size="16.5" fill="#f4f4f4">0,20</text>
<text transform="translate(983.5,676.7) scale(.56,1)" font-size="16.5" fill="#f4f4f4">0,48</text>
<text transform="translate(1046.7,676.7) scale(.56,1)" font-size="16.5" fill="#f4f4f4">0,28</text>
<text transform="translate(1078.9,676.7) scale(.56,1)" font-size="16.5" fill="#f4f4f4">0,38</text>
<text transform="translate(1137.5,676.7) scale(.56,1)" font-size="16.5" fill="#f4f4f4">0,49</text>
<text transform="translate(1201,676.7) scale(.56,1)" font-size="16.5" fill="#f4f4f4">0,17</text>
<text transform="translate(1230.8,676.7) scale(.56,1)" font-size="16.5" fill="#f4f4f4">0,30</text>
<text transform="translate(1260.9,676.7) scale(.56,1)" font-size="16.5" fill="#f4f4f4">0,57</text>
<text transform="translate(1290.6,676.7) scale(.56,1)" font-size="16.5" fill="#f4f4f4">0,46</text>
<text transform="translate(1326.4,676.7) scale(.56,1)" font-size="16.5" fill="#f4f4f4">0,39</text>
<text transform="translate(1367.6,676.7) scale(.56,1)" font-size="16.5" fill="#f4f4f4">0,18</text>
<text transform="translate(1397.7,676.7) scale(.56,1)" font-size="16.5" fill="#f4f4f4">0,68</text>
<text transform="translate(1443.3,676.7) scale(.56,1)" font-size="16.5" fill="#f4f4f4">0,24</text>
<text transform="translate(1498.3,676.7) scale(.56,1)" font-size="16.5" fill="#f4f4f4">0,14</text>
<text transform="translate(1546.3,676.7) scale(.56,1)" font-size="16.5" fill="#f4f4f4">0,18</text>
<text transform="translate(1596,676.7) scale(.56,1)" font-size="16.5" fill="#f4f4f4">0,34</text>
<text transform="translate(1662.4,676.7) scale(.56,1)" font-size="16.5" fill="#f4f4f4">0,44</text>
<text transform="translate(342.2,703.3) scale(.56,1)" font-size="16.5" fill="#f4f4f4">y: CIE31</text>
<text transform="translate(410.5,703.3) scale(.56,1)" font-size="16.5" fill="#f4f4f4">0,33</text>
<text transform="translate(445.5,703.3) scale(.56,1)" font-size="16.5" fill="#f4f4f4">0,33</text>
<text transform="translate(482.2,703.3) scale(.56,1)" font-size="16.5" fill="#f4f4f4">0,33</text>
<text transform="translate(518.4,703.3) scale(.56,1)" font-size="16.5" fill="#f4f4f4">0,33</text>
<text transform="translate(555.1,703.3) scale(.56,1)" font-size="16.5" fill="#f4f4f4">0,33</text>
<text transform="translate(591.7,703.3) scale(.56,1)" font-size="16.5" fill="#f4f4f4">0,36</text>
<text transform="translate(618.2,703.3) scale(.56,1)" font-size="16.5" fill="#f4f4f4">0,36</text>
<text transform="translate(661.8,703.3) scale(.56,1)" font-size="16.5" fill="#f4f4f4">0,36</text>
<text transform="translate(705.7,703.3) scale(.56,1)" font-size="16.5" fill="#f4f4f4">0,26</text>
<text transform="translate(744.8,703.3) scale(.56,1)" font-size="16.5" fill="#f4f4f4">0,44</text>
<text transform="translate(779,703.3) scale(.56,1)" font-size="16.5" fill="#f4f4f4">0,25</text>
<text transform="translate(832.4,703.3) scale(.56,1)" font-size="16.5" fill="#f4f4f4">0,36</text>
<text transform="translate(889.4,703.3) scale(.56,1)" font-size="16.5" fill="#f4f4f4">0,40</text>
<text transform="translate(924.4,703.3) scale(.56,1)" font-size="16.5" fill="#f4f4f4">0,18</text>
<text transform="translate(983.5,703.3) scale(.56,1)" font-size="16.5" fill="#f4f4f4">0,31</text>
<text transform="translate(1046.7,703.3) scale(.56,1)" font-size="16.5" fill="#f4f4f4">0,21</text>
<text transform="translate(1078.9,703.3) scale(.56,1)" font-size="16.5" fill="#f4f4f4">0,51</text>
<text transform="translate(1137.5,703.3) scale(.56,1)" font-size="16.5" fill="#f4f4f4">0,44</text>
<text transform="translate(1201,703.3) scale(.56,1)" font-size="16.5" fill="#f4f4f4">0,12</text>
<text transform="translate(1230.8,703.3) scale(.56,1)" font-size="16.5" fill="#f4f4f4">0,51</text>
<text transform="translate(1260.9,703.3) scale(.56,1)" font-size="16.5" fill="#f4f4f4">0,32</text>
<text transform="translate(1290.6,703.3) scale(.56,1)" font-size="16.5" fill="#f4f4f4">0,48</text>
<text transform="translate(1326.4,703.3) scale(.56,1)" font-size="16.5" fill="#f4f4f4">0,24</text>
<text transform="translate(1367.6,703.3) scale(.56,1)" font-size="16.5" fill="#f4f4f4">0,26</text>
<text transform="translate(1397.7,703.3) scale(.56,1)" font-size="16.5" fill="#f4f4f4">0,32</text>
<text transform="translate(1443.3,703.3) scale(.56,1)" font-size="16.5" fill="#f4f4f4">0,72</text>
<text transform="translate(1498.3,703.3) scale(.56,1)" font-size="16.5" fill="#f4f4f4">0,05</text>
<text transform="translate(1546.3,703.3) scale(.56,1)" font-size="16.5" fill="#f4f4f4">0,33</text>
<text transform="translate(1596,703.3) scale(.56,1)" font-size="16.5" fill="#f4f4f4">0,15</text>
<text transform="translate(1662.4,703.3) scale(.56,1)" font-size="16.5" fill="#f4f4f4">0,53</text>
<text transform="translate(342.2,729.9) scale(.56,1)" font-size="16.5" fill="#f4f4f4">Y</text>
<text transform="translate(410.5,729.9) scale(.56,1)" font-size="16.5" fill="#f4f4f4">404,90</text>
<text transform="translate(445.5,729.9) scale(.56,1)" font-size="16.5" fill="#f4f4f4">315,53</text>
<text transform="translate(482.2,729.9) scale(.56,1)" font-size="16.5" fill="#f4f4f4">251,97</text>
<text transform="translate(518.4,729.9) scale(.56,1)" font-size="16.5" fill="#f4f4f4">189,58</text>
<text transform="translate(555.1,729.9) scale(.56,1)" font-size="16.5" fill="#f4f4f4">128,17</text>
<text transform="translate(591.7,729.9) scale(.56,1)" font-size="16.5" fill="#f4f4f4">0,15</text>
<text transform="translate(618.2,729.9) scale(.56,1)" font-size="16.5" fill="#f4f4f4">34,07</text>
<text transform="translate(661.8,729.9) scale(.56,1)" font-size="16.5" fill="#f4f4f4">132,12</text>
<text transform="translate(705.7,729.9) scale(.56,1)" font-size="16.5" fill="#f4f4f4">65,83</text>
<text transform="translate(744.8,729.9) scale(.56,1)" font-size="16.5" fill="#f4f4f4">45,51</text>
<text transform="translate(779,729.9) scale(.56,1)" font-size="16.5" fill="#f4f4f4">83,59</text>
<text transform="translate(832.4,729.9) scale(.56,1)" font-size="16.5" fill="#f4f4f4">156,75</text>
<text transform="translate(889.4,729.9) scale(.56,1)" font-size="16.5" fill="#f4f4f4">113,09</text>
<text transform="translate(924.4,729.9) scale(.56,1)" font-size="16.5" fill="#f4f4f4">38,76</text>
<text transform="translate(983.5,729.9) scale(.56,1)" font-size="16.5" fill="#f4f4f4">71,36</text>
<text transform="translate(1046.7,729.9) scale(.56,1)" font-size="16.5" fill="#f4f4f4">21,81</text>
<text transform="translate(1078.9,729.9) scale(.56,1)" font-size="16.5" fill="#f4f4f4">167,12</text>
<text transform="translate(1137.5,729.9) scale(.56,1)" font-size="16.5" fill="#f4f4f4">172,79</text>
<text transform="translate(1201,729.9) scale(.56,1)" font-size="16.5" fill="#f4f4f4">19,06</text>
<text transform="translate(1230.8,729.9) scale(.56,1)" font-size="16.5" fill="#f4f4f4">82,87</text>
<text transform="translate(1260.9,729.9) scale(.56,1)" font-size="16.5" fill="#f4f4f4">44,18</text>
<text transform="translate(1290.6,729.9) scale(.56,1)" font-size="16.5" fill="#f4f4f4">241,40</text>
<text transform="translate(1326.4,729.9) scale(.56,1)" font-size="16.5" fill="#f4f4f4">70,23</text>
<text transform="translate(1367.6,729.9) scale(.56,1)" font-size="16.5" fill="#f4f4f4">66,25</text>
<text transform="translate(1397.7,729.9) scale(.56,1)" font-size="16.5" fill="#f4f4f4">105,54</text>
<text transform="translate(1443.3,729.9) scale(.56,1)" font-size="16.5" fill="#f4f4f4">281,55</text>
<text transform="translate(1498.3,729.9) scale(.56,1)" font-size="16.5" fill="#f4f4f4">27,53</text>
<text transform="translate(1546.3,729.9) scale(.56,1)" font-size="16.5" fill="#f4f4f4">304,05</text>
<text transform="translate(1596,729.9) scale(.56,1)" font-size="16.5" fill="#f4f4f4">131,22</text>
<text transform="translate(1662.4,729.9) scale(.56,1)" font-size="16.5" fill="#f4f4f4">384,18</text>
<text transform="translate(342.2,756.5) scale(.56,1)" font-size="16.5" fill="#f4f4f4">Target x:CIE31</text>
<text transform="translate(410.5,756.5) scale(.56,1)" font-size="16.5" fill="#f4f4f4">0,31</text>
<text transform="translate(445.5,756.5) scale(.56,1)" font-size="16.5" fill="#f4f4f4">0,31</text>
<text transform="translate(482.2,756.5) scale(.56,1)" font-size="16.5" fill="#f4f4f4">0,31</text>
<text transform="translate(518.4,756.5) scale(.56,1)" font-size="16.5" fill="#f4f4f4">0,31</text>
<text transform="translate(555.1,756.5) scale(.56,1)" font-size="16.5" fill="#f4f4f4">0,31</text>
<text transform="translate(591.7,756.5) scale(.56,1)" font-size="16.5" fill="#f4f4f4">0,31</text>
<text transform="translate(618.2,756.5) scale(.56,1)" font-size="16.5" fill="#f4f4f4">0,40</text>
<text transform="translate(661.8,756.5) scale(.56,1)" font-size="16.5" fill="#f4f4f4">0,38</text>
<text transform="translate(705.7,756.5) scale(.56,1)" font-size="16.5" fill="#f4f4f4">0,25</text>
<text transform="translate(744.8,756.5) scale(.56,1)" font-size="16.5" fill="#f4f4f4">0,34</text>
<text transform="translate(779,756.5) scale(.56,1)" font-size="16.5" fill="#f4f4f4">0,27</text>
<text transform="translate(832.4,756.5) scale(.56,1)" font-size="16.5" fill="#f4f4f4">0,26</text>
<text transform="translate(889.4,756.5) scale(.56,1)" font-size="16.5" fill="#f4f4f4">0,51</text>
<text transform="translate(924.4,756.5) scale(.56,1)" font-size="16.5" fill="#f4f4f4">0,22</text>
<text transform="translate(983.5,756.5) scale(.56,1)" font-size="16.5" fill="#f4f4f4">0,46</text>
<text transform="translate(1046.7,756.5) scale(.56,1)" font-size="16.5" fill="#f4f4f4">0,29</text>
<text transform="translate(1078.9,756.5) scale(.56,1)" font-size="16.5" fill="#f4f4f4">0,38</text>
<text transform="translate(1137.5,756.5) scale(.56,1)" font-size="16.5" fill="#f4f4f4">0,47</text>
<text transform="translate(1201,756.5) scale(.56,1)" font-size="16.5" fill="#f4f4f4">0,19</text>
<text transform="translate(1230.8,756.5) scale(.56,1)" font-size="16.5" fill="#f4f4f4">0,31</text>
<text transform="translate(1260.9,756.5) scale(.56,1)" font-size="16.5" fill="#f4f4f4">0,54</text>
<text transform="translate(1290.6,756.5) scale(.56,1)" font-size="16.5" fill="#f4f4f4">0,45</text>
<text transform="translate(1326.4,756.5) scale(.56,1)" font-size="16.5" fill="#f4f4f4">0,37</text>
<text transform="translate(1367.6,756.5) scale(.56,1)" font-size="16.5" fill="#f4f4f4">0,20</text>
<text transform="translate(1397.7,756.5) scale(.56,1)" font-size="16.5" fill="#f4f4f4">0,68</text>
<text transform="translate(1443.3,756.5) scale(.56,1)" font-size="16.5" fill="#f4f4f4">0,27</text>
<text transform="translate(1498.3,756.5) scale(.56,1)" font-size="16.5" fill="#f4f4f4">0,15</text>
<text transform="translate(1546.3,756.5) scale(.56,1)" font-size="16.5" fill="#f4f4f4">0,20</text>
<text transform="translate(1596,756.5) scale(.56,1)" font-size="16.5" fill="#f4f4f4">0,34</text>
<text transform="translate(1662.4,756.5) scale(.56,1)" font-size="16.5" fill="#f4f4f4">0,44</text>
<text transform="translate(342.2,783.1) scale(.56,1)" font-size="16.5" fill="#f4f4f4">Target y:CIE31</text>
<text transform="translate(410.5,783.1) scale(.56,1)" font-size="16.5" fill="#f4f4f4">0,33</text>
<text transform="translate(445.5,783.1) scale(.56,1)" font-size="16.5" fill="#f4f4f4">0,33</text>
<text transform="translate(482.2,783.1) scale(.56,1)" font-size="16.5" fill="#f4f4f4">0,33</text>
<text transform="translate(518.4,783.1) scale(.56,1)" font-size="16.5" fill="#f4f4f4">0,33</text>
<text transform="translate(555.1,783.1) scale(.56,1)" font-size="16.5" fill="#f4f4f4">0,33</text>
<text transform="translate(591.7,783.1) scale(.56,1)" font-size="16.5" fill="#f4f4f4">0,33</text>
<text transform="translate(618.2,783.1) scale(.56,1)" font-size="16.5" fill="#f4f4f4">0,36</text>
<text transform="translate(661.8,783.1) scale(.56,1)" font-size="16.5" fill="#f4f4f4">0,35</text>
<text transform="translate(705.7,783.1) scale(.56,1)" font-size="16.5" fill="#f4f4f4">0,27</text>
<text transform="translate(744.8,783.1) scale(.56,1)" font-size="16.5" fill="#f4f4f4">0,43</text>
<text transform="translate(779,783.1) scale(.56,1)" font-size="16.5" fill="#f4f4f4">0,25</text>
<text transform="translate(832.4,783.1) scale(.56,1)" font-size="16.5" fill="#f4f4f4">0,36</text>
<text transform="translate(889.4,783.1) scale(.56,1)" font-size="16.5" fill="#f4f4f4">0,41</text>
<text transform="translate(924.4,783.1) scale(.56,1)" font-size="16.5" fill="#f4f4f4">0,19</text>
<text transform="translate(983.5,783.1) scale(.56,1)" font-size="16.5" fill="#f4f4f4">0,31</text>
<text transform="translate(1046.7,783.1) scale(.56,1)" font-size="16.5" fill="#f4f4f4">0,22</text>
<text transform="translate(1078.9,783.1) scale(.56,1)" font-size="16.5" fill="#f4f4f4">0,50</text>
<text transform="translate(1137.5,783.1) scale(.56,1)" font-size="16.5" fill="#f4f4f4">0,44</text>
<text transform="translate(1201,783.1) scale(.56,1)" font-size="16.5" fill="#f4f4f4">0,14</text>
<text transform="translate(1230.8,783.1) scale(.56,1)" font-size="16.5" fill="#f4f4f4">0,49</text>
<text transform="translate(1260.9,783.1) scale(.56,1)" font-size="16.5" fill="#f4f4f4">0,32</text>
<text transform="translate(1290.6,783.1) scale(.56,1)" font-size="16.5" fill="#f4f4f4">0,47</text>
<text transform="translate(1326.4,783.1) scale(.56,1)" font-size="16.5" fill="#f4f4f4">0,24</text>
<text transform="translate(1367.6,783.1) scale(.56,1)" font-size="16.5" fill="#f4f4f4">0,26</text>
<text transform="translate(1397.7,783.1) scale(.56,1)" font-size="16.5" fill="#f4f4f4">0,32</text>
<text transform="translate(1443.3,783.1) scale(.56,1)" font-size="16.5" fill="#f4f4f4">0,69</text>
<text transform="translate(1498.3,783.1) scale(.56,1)" font-size="16.5" fill="#f4f4f4">0,06</text>
<text transform="translate(1546.3,783.1) scale(.56,1)" font-size="16.5" fill="#f4f4f4">0,33</text>
<text transform="translate(1596,783.1) scale(.56,1)" font-size="16.5" fill="#f4f4f4">0,15</text>
<text transform="translate(1662.4,783.1) scale(.56,1)" font-size="16.5" fill="#f4f4f4">0,54</text>
<text transform="translate(342.2,809.7) scale(.56,1)" font-size="16.5" fill="#f4f4f4">Target Y</text>
<text transform="translate(410.5,809.7) scale(.56,1)" font-size="16.5" fill="#f4f4f4">404,90</text>
<text transform="translate(445.5,809.7) scale(.56,1)" font-size="16.5" fill="#f4f4f4">320,40</text>
<text transform="translate(482.2,809.7) scale(.56,1)" font-size="16.5" fill="#f4f4f4">258,16</text>
<text transform="translate(518.4,809.7) scale(.56,1)" font-size="16.5" fill="#f4f4f4">198,81</text>
<text transform="translate(555.1,809.7) scale(.56,1)" font-size="16.5" fill="#f4f4f4">138,44</text>
<text transform="translate(591.7,809.7) scale(.56,1)" font-size="16.5" fill="#f4f4f4">0,00</text>
<text transform="translate(618.2,809.7) scale(.56,1)" font-size="16.5" fill="#f4f4f4">40,00</text>
<text transform="translate(661.8,809.7) scale(.56,1)" font-size="16.5" fill="#f4f4f4">138,48</text>
<text transform="translate(705.7,809.7) scale(.56,1)" font-size="16.5" fill="#f4f4f4">76,30</text>
<text transform="translate(744.8,809.7) scale(.56,1)" font-size="16.5" fill="#f4f4f4">53,13</text>
<text transform="translate(779,809.7) scale(.56,1)" font-size="16.5" fill="#f4f4f4">93,54</text>
<text transform="translate(832.4,809.7) scale(.56,1)" font-size="16.5" fill="#f4f4f4">168,64</text>
<text transform="translate(889.4,809.7) scale(.56,1)" font-size="16.5" fill="#f4f4f4">114,92</text>
<text transform="translate(924.4,809.7) scale(.56,1)" font-size="16.5" fill="#f4f4f4">47,65</text>
<text transform="translate(983.5,809.7) scale(.56,1)" font-size="16.5" fill="#f4f4f4">75,26</text>
<text transform="translate(1046.7,809.7) scale(.56,1)" font-size="16.5" fill="#f4f4f4">27,73</text>
<text transform="translate(1078.9,809.7) scale(.56,1)" font-size="16.5" fill="#f4f4f4">174,19</text>
<text transform="translate(1137.5,809.7) scale(.56,1)" font-size="16.5" fill="#f4f4f4">174,50</text>
<text transform="translate(1201,809.7) scale(.56,1)" font-size="16.5" fill="#f4f4f4">25,58</text>
<text transform="translate(1230.8,809.7) scale(.56,1)" font-size="16.5" fill="#f4f4f4">91,74</text>
<text transform="translate(1260.9,809.7) scale(.56,1)" font-size="16.5" fill="#f4f4f4">46,79</text>
<text transform="translate(1290.6,809.7) scale(.56,1)" font-size="16.5" fill="#f4f4f4">240,61</text>
<text transform="translate(1326.4,809.7) scale(.56,1)" font-size="16.5" fill="#f4f4f4">75,54</text>
<text transform="translate(1367.6,809.7) scale(.56,1)" font-size="16.5" fill="#f4f4f4">76,02</text>
<text transform="translate(1397.7,809.7) scale(.56,1)" font-size="16.5" fill="#f4f4f4">92,72</text>
<text transform="translate(1443.3,809.7) scale(.56,1)" font-size="16.5" fill="#f4f4f4">280,08</text>
<text transform="translate(1498.3,809.7) scale(.56,1)" font-size="16.5" fill="#f4f4f4">32,10</text>
<text transform="translate(1546.3,809.7) scale(.56,1)" font-size="16.5" fill="#f4f4f4">312,18</text>
<text transform="translate(1596,809.7) scale(.56,1)" font-size="16.5" fill="#f4f4f4">124,82</text>
<text transform="translate(1662.4,809.7) scale(.56,1)" font-size="16.5" fill="#f4f4f4">372,80</text>
<text transform="translate(342.2,836.3) scale(.56,1)" font-size="16.5" fill="#f4f4f4">ΔE 2000</text>
<text transform="translate(410.5,836.3) scale(.56,1)" font-size="16.5" fill="#f4f4f4">0,16</text>
<text transform="translate(445.5,836.3) scale(.56,1)" font-size="16.5" fill="#f4f4f4">0,49</text>
<text transform="translate(482.2,836.3) scale(.56,1)" font-size="16.5" fill="#f4f4f4">0,61</text>
<text transform="translate(518.4,836.3) scale(.56,1)" font-size="16.5" fill="#f4f4f4">1,08</text>
<text transform="translate(555.1,836.3) scale(.56,1)" font-size="16.5" fill="#f4f4f4">1,76</text>
<text transform="translate(591.7,836.3) scale(.56,1)" font-size="16.5" fill="#f4f4f4">0,26</text>
<text transform="translate(618.2,836.3) scale(.56,1)" font-size="16.5" fill="#f4f4f4">3,39</text>
<text transform="translate(661.8,836.3) scale(.56,1)" font-size="16.5" fill="#f4f4f4">2,25</text>
<text transform="translate(705.7,836.3) scale(.56,1)" font-size="16.5" fill="#f4f4f4">3,72</text>
<text transform="translate(744.8,836.3) scale(.56,1)" font-size="16.5" fill="#f4f4f4">2,87</text>
<text transform="translate(779,836.3) scale(.56,1)" font-size="16.5" fill="#f4f4f4">2,90</text>
<text transform="translate(832.4,836.3) scale(.56,1)" font-size="16.5" fill="#f4f4f4">2,95</text>
<text transform="translate(889.4,836.3) scale(.56,1)" font-size="16.5" fill="#f4f4f4">2,59</text>
<text transform="translate(924.4,836.3) scale(.56,1)" font-size="16.5" fill="#f4f4f4">4,13</text>
<text transform="translate(983.5,836.3) scale(.56,1)" font-size="16.5" fill="#f4f4f4">2,50</text>
<text transform="translate(1046.7,836.3) scale(.56,1)" font-size="16.5" fill="#f4f4f4">2,95</text>
<text transform="translate(1078.9,836.3) scale(.56,1)" font-size="16.5" fill="#f4f4f4">1,56</text>
<text transform="translate(1137.5,836.3) scale(.56,1)" font-size="16.5" fill="#f4f4f4">2,83</text>
<text transform="translate(1201,836.3) scale(.56,1)" font-size="16.5" fill="#f4f4f4">3,65</text>
<text transform="translate(1230.8,836.3) scale(.56,1)" font-size="16.5" fill="#f4f4f4">2,90</text>
<text transform="translate(1260.9,836.3) scale(.56,1)" font-size="16.5" fill="#f4f4f4">2,49</text>
<text transform="translate(1290.6,836.3) scale(.56,1)" font-size="16.5" fill="#f4f4f4">2,59</text>
<text transform="translate(1326.4,836.3) scale(.56,1)" font-size="16.5" fill="#f4f4f4">2,29</text>
<text transform="translate(1367.6,836.3) scale(.56,1)" font-size="16.5" fill="#f4f4f4">3,93</text>
<text transform="translate(1397.7,836.3) scale(.56,1)" font-size="16.5" fill="#f4f4f4">3,03</text>
<text transform="translate(1443.3,836.3) scale(.56,1)" font-size="16.5" fill="#f4f4f4">2,09</text>
<text transform="translate(1498.3,836.3) scale(.56,1)" font-size="16.5" fill="#f4f4f4">2,58</text>
<text transform="translate(1546.3,836.3) scale(.56,1)" font-size="16.5" fill="#f4f4f4">3,03</text>
<text transform="translate(1596,836.3) scale(.56,1)" font-size="16.5" fill="#f4f4f4">1,40</text>
<text transform="translate(1662.4,836.3) scale(.56,1)" font-size="16.5" fill="#f4f4f4">1,49</text>
</g>
<g id="cie">
<rect x="1018" y="45" width="701" height="567.8" fill="#ffff00"/>
<rect x="1025.2" y="52" width="687" height="554" fill="#333333"/>
<text x="1368.5" y="70.9" font-size="15.3" fill="#d6d6d6" text-anchor="middle" textLength="78" lengthAdjust="spacingAndGlyphs">CIE 1931 xy</text>
<rect x="1055" y="75.6" width="653.6" height="500.5" fill="#242424"/>
<defs><linearGradient id="gB" gradientUnits="userSpaceOnUse" x1="1055" y1="0" x2="1710" y2="0"/><linearGradient id="g0" href="#gB"><stop offset=".0748" stop-color="#00ff00"/><stop offset=".116" stop-color="#00ff00"/></linearGradient><linearGradient id="g1" href="#gB"><stop offset=".0656" stop-color="#00ff00"/><stop offset=".1298" stop-color="#00ff00"/></linearGradient><linearGradient id="g2" href="#gB"><stop offset=".0595" stop-color="#00ff00"/><stop offset=".1389" stop-color="#00ff00"/></linearGradient><linearGradient id="g3" href="#gB"><stop offset=".055" stop-color="#00ff00"/><stop offset=".1496" stop-color="#00ff00"/></linearGradient><linearGradient id="g4" href="#gB"><stop offset=".0504" stop-color="#00ff00"/><stop offset=".1573" stop-color="#00ff00"/></linearGradient><linearGradient id="g5" href="#gB"><stop offset=".0458" stop-color="#00ff00"/><stop offset=".1649" stop-color="#00ff00"/></linearGradient><linearGradient id="g6" href="#gB"><stop offset=".0427" stop-color="#00ff00"/><stop offset=".1725" stop-color="#00ff00"/></linearGradient><linearGradient id="g7" href="#gB"><stop offset=".0397" stop-color="#00ff00"/><stop offset=".1802" stop-color="#00ff00"/></linearGradient><linearGradient id="g8" href="#gB"><stop offset=".0382" stop-color="#00ff01"/><stop offset=".1863" stop-color="#00ff00"/></linearGradient><linearGradient id="g9" href="#gB"><stop offset=".0351" stop-color="#00ff02"/><stop offset=".0519" stop-color="#00ff00"/><stop offset=".1939" stop-color="#00ff00"/></linearGradient><linearGradient id="g10" href="#gB"><stop offset=".0336" stop-color="#00ff03"/><stop offset=".0565" stop-color="#00ff00"/><stop offset=".2" stop-color="#00ff00"/></linearGradient><linearGradient id="g11" href="#gB"><stop offset=".0305" stop-color="#00ff04"/><stop offset=".0611" stop-color="#00ff00"/><stop offset=".2061" stop-color="#00ff00"/></linearGradient><linearGradient id="g12" href="#gB"><stop offset=".029" stop-color="#00ff05"/><stop offset=".0672" stop-color="#00ff00"/><stop offset=".2122" stop-color="#00ff00"/></linearGradient><linearGradient id="g13" href="#gB"><stop offset=".0275" stop-color="#00ff06"/><stop offset=".0718" stop-color="#00ff00"/><stop offset=".2183" stop-color="#00ff00"/></linearGradient><linearGradient id="g14" href="#gB"><stop offset=".026" stop-color="#00ff07"/><stop offset=".0763" stop-color="#00ff00"/><stop offset=".2244" stop-color="#00ff00"/></linearGradient><linearGradient id="g15" href="#gB"><stop offset=".0244" stop-color="#00ff08"/><stop offset=".0809" stop-color="#00ff00"/><stop offset=".2305" stop-color="#00ff00"/></linearGradient><linearGradient id="g16" href="#gB"><stop offset=".0229" stop-color="#00ff09"/><stop offset=".087" stop-color="#00ff00"/><stop offset=".2366" stop-color="#00ff00"/></linearGradient><linearGradient id="g17" href="#gB"><stop offset=".0214" stop-color="#00ff0a"/><stop offset=".0916" stop-color="#00ff00"/><stop offset=".2412" stop-color="#00ff00"/></linearGradient><linearGradient id="g18" href="#gB"><stop offset=".0198" stop-color="#00ff0b"/><stop offset=".0962" stop-color="#00ff00"/><stop offset=".2473" stop-color="#00ff00"/></linearGradient><linearGradient id="g19" href="#gB"><stop offset=".0198" stop-color="#00ff0c"/><stop offset=".1008" stop-color="#00ff00"/><stop offset=".2519" stop-color="#00ff00"/></linearGradient><linearGradient id="g20" href="#gB"><stop offset=".0183" stop-color="#00ff0d"/><stop offset=".1069" stop-color="#00ff00"/><stop offset=".258" stop-color="#00ff00"/></linearGradient><linearGradient id="g21" href="#gB"><stop offset=".0168" stop-color="#00ff0e"/><stop offset=".1115" stop-color="#00ff00"/><stop offset=".2626" stop-color="#00ff00"/></linearGradient><linearGradient id="g22" href="#gB"><stop offset=".0153" stop-color="#00ff0f"/><stop offset=".116" stop-color="#00ff00"/><stop offset=".2687" stop-color="#00ff00"/></linearGradient><linearGradient id="g23" href="#gB"><stop offset=".0153" stop-color="#00ff10"/><stop offset=".1221" stop-color="#00ff00"/><stop offset=".2733" stop-color="#00ff00"/></linearGradient><linearGradient id="g24" href="#gB"><stop offset=".0137" stop-color="#00ff11"/><stop offset=".1267" stop-color="#00ff00"/><stop offset=".2779" stop-color="#00ff00"/></linearGradient><linearGradient id="g25" href="#gB"><stop offset=".0137" stop-color="#00ff12"/><stop offset=".1313" stop-color="#00ff00"/><stop offset=".284" stop-color="#00ff00"/></linearGradient><linearGradient id="g26" href="#gB"><stop offset=".0122" stop-color="#00ff13"/><stop offset=".1359" stop-color="#00ff00"/><stop offset=".2885" stop-color="#00ff00"/></linearGradient><linearGradient id="g27" href="#gB"><stop offset=".0107" stop-color="#00ff14"/><stop offset=".142" stop-color="#00ff00"/><stop offset=".2931" stop-color="#00ff00"/></linearGradient><linearGradient id="g28" href="#gB"><stop offset=".0107" stop-color="#00ff15"/><stop offset=".1466" stop-color="#00ff00"/><stop offset=".2977" stop-color="#00ff00"/></linearGradient><linearGradient id="g29" href="#gB"><stop offset=".0092" stop-color="#00ff16"/><stop offset=".1511" stop-color="#00ff00"/><stop offset=".3023" stop-color="#00ff00"/></linearGradient><linearGradient id="g30" href="#gB"><stop offset=".0092" stop-color="#00ff17"/><stop offset=".1557" stop-color="#00ff00"/><stop offset=".3069" stop-color="#00ff00"/></linearGradient><linearGradient id="g31" href="#gB"><stop offset=".0092" stop-color="#00ff18"/><stop offset=".1618" stop-color="#00ff00"/><stop offset=".3115" stop-color="#00ff00"/></linearGradient><linearGradient id="g32" href="#gB"><stop offset=".0076" stop-color="#00ff19"/><stop offset=".1664" stop-color="#00ff00"/><stop offset=".316" stop-color="#00ff00"/></linearGradient><linearGradient id="g33" href="#gB"><stop offset=".0076" stop-color="#00ff1a"/><stop offset=".171" stop-color="#00ff00"/><stop offset=".3206" stop-color="#00ff00"/></linearGradient><linearGradient id="g34" href="#gB"><stop offset=".0076" stop-color="#00ff1b"/><stop offset=".1771" stop-color="#00ff00"/><stop offset=".3252" stop-color="#00ff00"/></linearGradient><linearGradient id="g35" href="#gB"><stop offset=".0061" stop-color="#00ff1c"/><stop offset=".1817" stop-color="#00ff00"/><stop offset=".3298" stop-color="#00ff00"/></linearGradient><linearGradient id="g36" href="#gB"><stop offset=".0061" stop-color="#00ff1d"/><stop offset=".1863" stop-color="#00ff00"/><stop offset=".3344" stop-color="#00ff00"/></linearGradient><linearGradient id="g37" href="#gB"><stop offset=".0061" stop-color="#00ff1e"/><stop offset=".1908" stop-color="#00ff00"/><stop offset=".3389" stop-color="#00ff00"/></linearGradient><linearGradient id="g38" href="#gB"><stop offset=".0046" stop-color="#00ff1f"/><stop offset=".1969" stop-color="#00ff00"/><stop offset=".3435" stop-color="#00ff00"/></linearGradient><linearGradient id="g39" href="#gB"><stop offset=".0046" stop-color="#00ff20"/><stop offset=".2015" stop-color="#00ff00"/><stop offset=".3481" stop-color="#00ff00"/></linearGradient><linearGradient id="g40" href="#gB"><stop offset=".0046" stop-color="#00ff21"/><stop offset=".2061" stop-color="#00ff00"/><stop offset=".3527" stop-color="#00ff00"/></linearGradient><linearGradient id="g41" href="#gB"><stop offset=".0046" stop-color="#00ff22"/><stop offset=".2107" stop-color="#00ff00"/><stop offset=".3573" stop-color="#00ff00"/></linearGradient><linearGradient id="g42" href="#gB"><stop offset=".0031" stop-color="#00ff23"/><stop offset=".2168" stop-color="#00ff00"/><stop offset=".3603" stop-color="#00ff00"/></linearGradient><linearGradient id="g43" href="#gB"><stop offset=".0031" stop-color="#00ff24"/><stop offset=".2214" stop-color="#00ff00"/><stop offset=".3649" stop-color="#00ff00"/></linearGradient><linearGradient id="g44" href="#gB"><stop offset=".0031" stop-color="#00ff25"/><stop offset=".226" stop-color="#00ff00"/><stop offset=".3695" stop-color="#00ff00"/></linearGradient><linearGradient id="g45" href="#gB"><stop offset=".0031" stop-color="#00ff26"/><stop offset=".2321" stop-color="#00ff00"/><stop offset=".374" stop-color="#00ff00"/></linearGradient><linearGradient id="g46" href="#gB"><stop offset=".0031" stop-color="#00ff27"/><stop offset=".2366" stop-color="#00ff00"/><stop offset=".3786" stop-color="#00ff00"/></linearGradient><linearGradient id="g47" href="#gB"><stop offset=".0031" stop-color="#00ff28"/><stop offset=".2412" stop-color="#00ff00"/><stop offset=".3817" stop-color="#01ff00"/></linearGradient><linearGradient id="g48" href="#gB"><stop offset=".0015" stop-color="#00ff29"/><stop offset=".2458" stop-color="#00ff00"/><stop offset=".3786" stop-color="#00ff00"/><stop offset=".3863" stop-color="#06ff00"/></linearGradient><linearGradient id="g49" href="#gB"><stop offset=".0015" stop-color="#00ff2a"/><stop offset=".2519" stop-color="#00ff00"/><stop offset=".3786" stop-color="#00ff00"/><stop offset=".3908" stop-color="#0bff00"/></linearGradient><linearGradient id="g50" href="#gB"><stop offset=".0015" stop-color="#00ff2b"/><stop offset=".1344" stop-color="#00ff17"/><stop offset=".2565" stop-color="#00ff00"/><stop offset=".3771" stop-color="#00ff00"/><stop offset=".3954" stop-color="#10ff00"/></linearGradient><linearGradient id="g51" href="#gB"><stop offset=".0015" stop-color="#00ff2d"/><stop offset=".1374" stop-color="#00ff17"/><stop offset=".2611" stop-color="#00ff00"/><stop offset=".3756" stop-color="#00ff00"/><stop offset=".4" stop-color="#15ff00"/></linearGradient><linearGradient id="g52" href="#gB"><stop offset=".0015" stop-color="#00ff2e"/><stop offset=".1389" stop-color="#00ff18"/><stop offset=".2672" stop-color="#00ff00"/><stop offset=".374" stop-color="#00ff00"/><stop offset=".4031" stop-color="#19ff00"/></linearGradient><linearGradient id="g53" href="#gB"><stop offset=".0015" stop-color="#00ff2f"/><stop offset=".1435" stop-color="#00ff19"/><stop offset=".2718" stop-color="#00ff00"/><stop offset=".374" stop-color="#00ff00"/><stop offset=".4076" stop-color="#1eff00"/></linearGradient><linearGradient id="g54" href="#gB"><stop offset=".0015" stop-color="#00ff30"/><stop offset=".1466" stop-color="#00ff19"/><stop offset=".2763" stop-color="#00ff00"/><stop offset=".3725" stop-color="#00ff00"/><stop offset=".4122" stop-color="#23ff00"/></linearGradient><linearGradient id="g55" href="#gB"><stop offset=".0015" stop-color="#00ff31"/><stop offset=".1481" stop-color="#00ff1a"/><stop offset=".2809" stop-color="#00ff00"/><stop offset=".371" stop-color="#00ff00"/><stop offset=".4153" stop-color="#28ff00"/></linearGradient><linearGradient id="g56" href="#gB"><stop offset=".0015" stop-color="#00ff32"/><stop offset=".1511" stop-color="#00ff1b"/><stop offset=".287" stop-color="#00ff00"/><stop offset=".3695" stop-color="#00ff00"/><stop offset=".4198" stop-color="#2dff00"/></linearGradient><linearGradient id="g57" href="#gB"><stop offset=".0015" stop-color="#00ff33"/><stop offset=".1542" stop-color="#00ff1b"/><stop offset=".2916" stop-color="#00ff00"/><stop offset=".3695" stop-color="#00ff00"/><stop offset=".4244" stop-color="#33ff00"/></linearGradient><linearGradient id="g58" href="#gB"><stop offset=".0015" stop-color="#00ff34"/><stop offset=".1573" stop-color="#00ff1c"/><stop offset=".2962" stop-color="#00ff00"/><stop offset=".3679" stop-color="#00ff00"/><stop offset=".429" stop-color="#39ff00"/></linearGradient><linearGradient id="g59" href="#gB"><stop offset=".0015" stop-color="#00ff35"/><stop offset=".1603" stop-color="#00ff1c"/><stop offset=".3008" stop-color="#00ff00"/><stop offset=".3664" stop-color="#00ff00"/><stop offset=".4321" stop-color="#3eff00"/></linearGradient><linearGradient id="g60" href="#gB"><stop offset=".0015" stop-color="#00ff37"/><stop offset=".1634" stop-color="#00ff1d"/><stop offset=".3069" stop-color="#00ff00"/><stop offset=".3664" stop-color="#00ff00"/><stop offset=".4366" stop-color="#44ff00"/></linearGradient><linearGradient id="g61" href="#gB"><stop offset=".0015" stop-color="#00ff38"/><stop offset=".1664" stop-color="#00ff1e"/><stop offset=".3115" stop-color="#00ff00"/><stop offset=".3649" stop-color="#00ff00"/><stop offset=".4412" stop-color="#4aff00"/></linearGradient><linearGradient id="g62" href="#gB"><stop offset=".0015" stop-color="#00ff39"/><stop offset=".1695" stop-color="#00ff1e"/><stop offset=".316" stop-color="#00ff00"/><stop offset=".3634" stop-color="#00ff00"/><stop offset=".4" stop-color="#22ff00"/><stop offset=".4443" stop-color="#4fff00"/></linearGradient><linearGradient id="g63" href="#gB"><stop offset=".0015" stop-color="#00ff3a"/><stop offset=".171" stop-color="#00ff1f"/><stop offset=".3221" stop-color="#00ff00"/><stop offset=".3634" stop-color="#00ff00"/><stop offset=".4489" stop-color="#56ff00"/></linearGradient><linearGradient id="g64" href="#gB"><stop offset=".0015" stop-color="#00ff3b"/><stop offset=".1756" stop-color="#00ff20"/><stop offset=".3267" stop-color="#00ff00"/><stop offset=".3618" stop-color="#00ff00"/><stop offset=".4076" stop-color="#2cff00"/><stop offset=".4534" stop-color="#5dff00"/></linearGradient><linearGradient id="g65" href="#gB"><stop offset=".0015" stop-color="#00ff3d"/><stop offset=".1771" stop-color="#00ff21"/><stop offset=".3313" stop-color="#00ff00"/><stop offset=".3603" stop-color="#00ff00"/><stop offset=".4076" stop-color="#2eff00"/><stop offset=".4565" stop-color="#62ff00"/></linearGradient><linearGradient id="g66" href="#gB"><stop offset=".0015" stop-color="#00ff3e"/><stop offset=".1802" stop-color="#00ff21"/><stop offset=".3359" stop-color="#00ff00"/><stop offset=".3588" stop-color="#00ff00"/><stop offset=".4076" stop-color="#2fff00"/><stop offset=".4611" stop-color="#69ff00"/></linearGradient><linearGradient id="g67" href="#gB"><stop offset=".0015" stop-color="#00ff3f"/><stop offset=".1542" stop-color="#00ff27"/><stop offset=".342" stop-color="#00ff00"/><stop offset=".3588" stop-color="#00ff00"/><stop offset=".4137" stop-color="#37ff00"/><stop offset=".4656" stop-color="#71ff00"/></linearGradient><linearGradient id="g68" href="#gB"><stop offset=".0015" stop-color="#00ff40"/><stop offset=".1695" stop-color="#00ff26"/><stop offset=".3466" stop-color="#00ff00"/><stop offset=".3573" stop-color="#00ff00"/><stop offset=".4137" stop-color="#38ff00"/><stop offset=".4687" stop-color="#76ff00"/></linearGradient><linearGradient id="g69" href="#gB"><stop offset=".0015" stop-color="#00ff42"/><stop offset=".1832" stop-color="#00ff25"/><stop offset=".3557" stop-color="#00ff00"/><stop offset=".4137" stop-color="#3aff00"/><stop offset=".4733" stop-color="#7eff00"/></linearGradient><linearGradient id="g70" href="#gB"><stop offset=".0015" stop-color="#00ff43"/><stop offset=".1924" stop-color="#00ff24"/><stop offset=".3557" stop-color="#00ff00"/><stop offset=".4183" stop-color="#41ff00"/><stop offset=".4779" stop-color="#86ff00"/></linearGradient><linearGradient id="g71" href="#gB"><stop offset=".0015" stop-color="#00ff44"/><stop offset=".1908" stop-color="#00ff26"/><stop offset=".3542" stop-color="#00ff02"/><stop offset=".4198" stop-color="#44ff00"/><stop offset=".4809" stop-color="#8cff00"/></linearGradient><linearGradient id="g72" href="#gB"><stop offset=".0031" stop-color="#00ff45"/><stop offset=".1908" stop-color="#00ff27"/><stop offset=".3527" stop-color="#00ff04"/><stop offset=".3679" stop-color="#0fff00"/><stop offset=".4198" stop-color="#46ff00"/><stop offset=".4855" stop-color="#95ff00"/></linearGradient><linearGradient id="g73" href="#gB"><stop offset=".0031" stop-color="#00ff47"/><stop offset=".1908" stop-color="#00ff29"/><stop offset=".3511" stop-color="#00ff05"/><stop offset=".3725" stop-color="#14ff00"/><stop offset=".4214" stop-color="#49ff00"/><stop offset=".4901" stop-color="#9dff00"/></linearGradient><linearGradient id="g74" href="#gB"><stop offset=".0031" stop-color="#00ff48"/><stop offset=".1908" stop-color="#00ff2a"/><stop offset=".3511" stop-color="#00ff07"/><stop offset=".3771" stop-color="#1aff00"/><stop offset=".4244" stop-color="#4eff00"/><stop offset=".4931" stop-color="#a4ff00"/></linearGradient><linearGradient id="g75" href="#gB"><stop offset=".0031" stop-color="#00ff4a"/><stop offset=".1893" stop-color="#00ff2c"/><stop offset=".3496" stop-color="#00ff09"/><stop offset=".3817" stop-color="#21ff00"/><stop offset=".426" stop-color="#52ff00"/><stop offset=".4977" stop-color="#adff00"/></linearGradient><linearGradient id="g76" href="#gB"><stop offset=".0031" stop-color="#00ff4b"/><stop offset=".1893" stop-color="#00ff2d"/><stop offset=".3481" stop-color="#00ff0a"/><stop offset=".3863" stop-color="#27ff00"/><stop offset=".4275" stop-color="#56ff00"/><stop offset=".4656" stop-color="#85ff00"/><stop offset=".5023" stop-color="#b6ff00"/></linearGradient><linearGradient id="g77" href="#gB"><stop offset=".0031" stop-color="#00ff4c"/><stop offset=".1893" stop-color="#00ff2f"/><stop offset=".3481" stop-color="#01ff0c"/><stop offset=".3924" stop-color="#2fff00"/><stop offset=".4305" stop-color="#5bff00"/><stop offset=".4687" stop-color="#8bff00"/><stop offset=".5053" stop-color="#beff00"/></linearGradient><linearGradient id="g78" href="#gB"><stop offset=".0031" stop-color="#00ff4e"/><stop offset=".1878" stop-color="#00ff30"/><stop offset=".3466" stop-color="#00ff0e"/><stop offset=".3969" stop-color="#36ff00"/><stop offset=".4321" stop-color="#5fff00"/><stop offset=".4718" stop-color="#92ff00"/><stop offset=".5099" stop-color="#c8ff00"/></linearGradient><linearGradient id="g79" href="#gB"><stop offset=".0046" stop-color="#00ff4f"/><stop offset=".1878" stop-color="#00ff32"/><stop offset=".345" stop-color="#00ff0f"/><stop offset=".4015" stop-color="#3dff00"/><stop offset=".4336" stop-color="#63ff00"/><stop offset=".4748" stop-color="#99ff00"/><stop offset=".5145" stop-color="#d2ff00"/></linearGradient><linearGradient id="g80" href="#gB"><stop offset=".0046" stop-color="#00ff50"/><stop offset=".1878" stop-color="#00ff33"/><stop offset=".3435" stop-color="#00ff11"/><stop offset=".4061" stop-color="#44ff00"/><stop offset=".4336" stop-color="#65ff00"/><stop offset=".4763" stop-color="#9dff00"/><stop offset=".5176" stop-color="#daff00"/></linearGradient><linearGradient id="g81" href="#gB"><stop offset=".0046" stop-color="#00ff52"/><stop offset=".1878" stop-color="#00ff35"/><stop offset=".3435" stop-color="#00ff13"/><stop offset=".4122" stop-color="#4dff00"/><stop offset=".4382" stop-color="#6dff00"/><stop offset=".4809" stop-color="#a7ff00"/><stop offset=".5221" stop-color="#e5ff00"/></linearGradient><linearGradient id="g82" href="#gB"><stop offset=".0046" stop-color="#00ff53"/><stop offset=".1863" stop-color="#00ff37"/><stop offset=".342" stop-color="#00ff15"/><stop offset=".4168" stop-color="#54ff00"/><stop offset=".4382" stop-color="#6fff00"/><stop offset=".4824" stop-color="#acff00"/><stop offset=".5252" stop-color="#edff00"/></linearGradient><linearGradient id="g83" href="#gB"><stop offset=".0046" stop-color="#00ff55"/><stop offset=".1863" stop-color="#00ff38"/><stop offset=".3405" stop-color="#00ff17"/><stop offset=".3802" stop-color="#2bff0c"/><stop offset=".4214" stop-color="#5cff00"/><stop offset=".4397" stop-color="#74ff00"/><stop offset=".4855" stop-color="#b3ff00"/><stop offset=".5298" stop-color="#f9ff00"/></linearGradient><linearGradient id="g84" href="#gB"><stop offset=".0046" stop-color="#00ff56"/><stop offset=".1863" stop-color="#00ff3a"/><stop offset=".3405" stop-color="#01ff18"/><stop offset=".3847" stop-color="#32ff0c"/><stop offset=".4275" stop-color="#66ff00"/><stop offset=".4809" stop-color="#b0ff00"/><stop offset=".5298" stop-color="#fdff00"/><stop offset=".5344" stop-color="#fffa00"/></linearGradient><linearGradient id="g85" href="#gB"><stop offset=".0061" stop-color="#00ff58"/><stop offset=".1863" stop-color="#00ff3b"/><stop offset=".3389" stop-color="#00ff1a"/><stop offset=".3863" stop-color="#35ff0e"/><stop offset=".4321" stop-color="#6eff00"/><stop offset=".4824" stop-color="#b5ff00"/><stop offset=".5282" stop-color="#feff00"/><stop offset=".5374" stop-color="#fff100"/></linearGradient><linearGradient id="g86" href="#gB"><stop offset=".0061" stop-color="#00ff59"/><stop offset=".1847" stop-color="#00ff3d"/><stop offset=".3374" stop-color="#00ff1c"/><stop offset=".3878" stop-color="#39ff0f"/><stop offset=".4366" stop-color="#77ff00"/><stop offset=".4824" stop-color="#b8ff00"/><stop offset=".5252" stop-color="#fdff00"/><stop offset=".542" stop-color="#ffe600"/></linearGradient><linearGradient id="g87" href="#gB"><stop offset=".0061" stop-color="#00ff5b"/><stop offset=".1847" stop-color="#00ff3f"/><stop offset=".3359" stop-color="#00ff1e"/><stop offset=".3832" stop-color="#35ff12"/><stop offset=".4336" stop-color="#75ff03"/><stop offset=".4427" stop-color="#81ff00"/><stop offset=".4794" stop-color="#b7ff00"/><stop offset=".5237" stop-color="#ffff00"/><stop offset=".5466" stop-color="#ffdc00"/></linearGradient><linearGradient id="g88" href="#gB"><stop offset=".0061" stop-color="#00ff5d"/><stop offset=".1847" stop-color="#00ff41"/><stop offset=".3359" stop-color="#00ff20"/><stop offset=".3863" stop-color="#3aff13"/><stop offset=".4336" stop-color="#77ff04"/><stop offset=".4473" stop-color="#8aff00"/><stop offset=".4779" stop-color="#b8ff00"/><stop offset=".5206" stop-color="#fdff00"/><stop offset=".5496" stop-color="#ffd400"/></linearGradient><linearGradient id="g89" href="#gB"><stop offset=".0061" stop-color="#00ff5e"/><stop offset=".1832" stop-color="#00ff43"/><stop offset=".3344" stop-color="#00ff22"/><stop offset=".3847" stop-color="#3aff15"/><stop offset=".4321" stop-color="#78ff07"/><stop offset=".4519" stop-color="#94ff00"/><stop offset=".4855" stop-color="#c7ff00"/><stop offset=".5191" stop-color="#ffff00"/><stop offset=".5359" stop-color="#ffe400"/><stop offset=".5542" stop-color="#ffcb00"/></linearGradient><linearGradient id="g90" href="#gB"><stop offset=".0076" stop-color="#00ff60"/><stop offset=".1832" stop-color="#00ff44"/><stop offset=".3328" stop-color="#00ff24"/><stop offset=".3802" stop-color="#36ff18"/><stop offset=".429" stop-color="#76ff09"/><stop offset=".4565" stop-color="#9dff00"/><stop offset=".487" stop-color="#cdff00"/><stop offset=".516" stop-color="#feff00"/><stop offset=".5374" stop-color="#ffde00"/><stop offset=".5573" stop-color="#ffc400"/></linearGradient><linearGradient id="g91" href="#gB"><stop offset=".0076" stop-color="#00ff61"/><stop offset=".1817" stop-color="#00ff46"/><stop offset=".3313" stop-color="#00ff27"/><stop offset=".3771" stop-color="#34ff1a"/><stop offset=".426" stop-color="#74ff0c"/><stop offset=".4626" stop-color="#aaff00"/><stop offset=".5145" stop-color="#ffff00"/><stop offset=".5374" stop-color="#ffda00"/><stop offset=".5618" stop-color="#ffbc00"/></linearGradient><linearGradient id="g92" href="#gB"><stop offset=".0076" stop-color="#00ff63"/><stop offset=".1832" stop-color="#00ff48"/><stop offset=".3313" stop-color="#00ff28"/><stop offset=".3802" stop-color="#3aff1b"/><stop offset=".4275" stop-color="#79ff0d"/><stop offset=".4672" stop-color="#b4ff00"/><stop offset=".5115" stop-color="#feff00"/><stop offset=".5374" stop-color="#ffd700"/><stop offset=".5664" stop-color="#ffb400"/></linearGradient><linearGradient id="g93" href="#gB"><stop offset=".0076" stop-color="#00ff65"/><stop offset=".1817" stop-color="#00ff4a"/><stop offset=".3298" stop-color="#00ff2b"/><stop offset=".3786" stop-color="#3aff1e"/><stop offset=".4244" stop-color="#77ff10"/><stop offset=".4718" stop-color="#bfff00"/><stop offset=".5099" stop-color="#fffe00"/><stop offset=".5374" stop-color="#ffd300"/><stop offset=".5695" stop-color="#ffae00"/></linearGradient><linearGradient id="g94" href="#gB"><stop offset=".0092" stop-color="#00ff66"/><stop offset=".1817" stop-color="#00ff4c"/><stop offset=".3282" stop-color="#00ff2d"/><stop offset=".374" stop-color="#36ff21"/><stop offset=".4214" stop-color="#75ff13"/><stop offset=".4763" stop-color="#caff00"/><stop offset=".5069" stop-color="#ffff00"/><stop offset=".5374" stop-color="#ffd000"/><stop offset=".574" stop-color="#ffa700"/></linearGradient><linearGradient id="g95" href="#gB"><stop offset=".0092" stop-color="#00ff68"/><stop offset=".1817" stop-color="#00ff4e"/><stop offset=".3282" stop-color="#01ff2f"/><stop offset=".3756" stop-color="#3aff22"/><stop offset=".4214" stop-color="#78ff15"/><stop offset=".4519" stop-color="#a6ff0b"/><stop offset=".4824" stop-color="#d8ff00"/><stop offset=".5038" stop-color="#feff00"/><stop offset=".5389" stop-color="#ffca00"/><stop offset=".5771" stop-color="#ffa100"/></linearGradient><linearGradient id="g96" href="#gB"><stop offset=".0092" stop-color="#00ff6a"/><stop offset=".1802" stop-color="#00ff50"/><stop offset=".3267" stop-color="#00ff31"/><stop offset=".374" stop-color="#3aff25"/><stop offset=".4198" stop-color="#78ff17"/><stop offset=".455" stop-color="#aeff0c"/><stop offset=".487" stop-color="#e4ff00"/><stop offset=".5023" stop-color="#ffff00"/><stop offset=".5191" stop-color="#ffe300"/><stop offset=".5389" stop-color="#ffc700"/><stop offset=".5588" stop-color="#ffb000"/><stop offset=".5817" stop-color="#ff9a00"/></linearGradient><linearGradient id="g97" href="#gB"><stop offset=".0092" stop-color="#00ff6b"/><stop offset=".1802" stop-color="#00ff52"/><stop offset=".3252" stop-color="#00ff33"/><stop offset=".371" stop-color="#37ff28"/><stop offset=".4168" stop-color="#76ff1a"/><stop offset=".4595" stop-color="#b9ff0c"/><stop offset=".4916" stop-color="#f0ff00"/><stop offset=".4992" stop-color="#feff00"/><stop offset=".5191" stop-color="#ffdf00"/><stop offset=".5389" stop-color="#ffc400"/><stop offset=".5618" stop-color="#ffaa00"/><stop offset=".5863" stop-color="#ff9400"/></linearGradient><linearGradient id="g98" href="#gB"><stop offset=".0107" stop-color="#00ff6d"/><stop offset=".1802" stop-color="#00ff54"/><stop offset=".3237" stop-color="#00ff36"/><stop offset=".3679" stop-color="#35ff2a"/><stop offset=".4137" stop-color="#74ff1d"/><stop offset=".455" stop-color="#b4ff10"/><stop offset=".4977" stop-color="#fffe00"/><stop offset=".5176" stop-color="#ffdd00"/><stop offset=".5389" stop-color="#ffc000"/><stop offset=".5634" stop-color="#ffa600"/><stop offset=".5893" stop-color="#ff8f00"/></linearGradient><linearGradient id="g99" href="#gB"><stop offset=".0107" stop-color="#00ff6f"/><stop offset=".1802" stop-color="#00ff56"/><stop offset=".3237" stop-color="#00ff38"/><stop offset=".3695" stop-color="#39ff2c"/><stop offset=".4137" stop-color="#77ff1f"/><stop offset=".455" stop-color="#b8ff12"/><stop offset=".4947" stop-color="#feff03"/><stop offset=".516" stop-color="#ffdc00"/><stop offset=".5389" stop-color="#ffbd00"/><stop offset=".5649" stop-color="#ffa100"/><stop offset=".5939" stop-color="#ff8900"/></linearGradient><linearGradient id="g100" href="#gB"><stop offset=".0107" stop-color="#00ff71"/><stop offset=".1786" stop-color="#00ff58"/><stop offset=".3221" stop-color="#00ff3a"/><stop offset=".3679" stop-color="#39ff2f"/><stop offset=".4107" stop-color="#75ff22"/><stop offset=".4504" stop-color="#b4ff15"/><stop offset=".4931" stop-color="#fffe06"/><stop offset=".5145" stop-color="#ffda00"/><stop offset=".5389" stop-color="#ffba00"/><stop offset=".5664" stop-color="#ff9d00"/><stop offset=".5985" stop-color="#ff8300"/></linearGradient><linearGradient id="g101" href="#gB"><stop offset=".0122" stop-color="#00ff72"/><stop offset=".1786" stop-color="#00ff5a"/><stop offset=".3206" stop-color="#00ff3d"/><stop offset=".3649" stop-color="#37ff31"/><stop offset=".4092" stop-color="#76ff25"/><stop offset=".4504" stop-color="#b7ff17"/><stop offset=".4901" stop-color="#ffff09"/><stop offset=".5115" stop-color="#ffdb00"/><stop offset=".5389" stop-color="#ffb700"/><stop offset=".5679" stop-color="#ff9900"/><stop offset=".6015" stop-color="#ff7e00"/></linearGradient><linearGradient id="g102" href="#gB"><stop offset=".0122" stop-color="#00ff74"/><stop offset=".1786" stop-color="#00ff5c"/><stop offset=".3191" stop-color="#00ff3f"/><stop offset=".3603" stop-color="#33ff35"/><stop offset=".4061" stop-color="#74ff28"/><stop offset=".4458" stop-color="#b3ff1b"/><stop offset=".4885" stop-color="#fffe0c"/><stop offset=".5176" stop-color="#ffce00"/><stop offset=".5389" stop-color="#ffb300"/><stop offset=".571" stop-color="#ff9400"/><stop offset=".6061" stop-color="#ff7900"/></linearGradient><linearGradient id="g103" href="#gB"><stop offset=".0122" stop-color="#00ff76"/><stop offset=".1786" stop-color="#00ff5e"/><stop offset=".3191" stop-color="#00ff42"/><stop offset=".3649" stop-color="#3bff36"/><stop offset=".4076" stop-color="#79ff2a"/><stop offset=".4473" stop-color="#b9ff1d"/><stop offset=".4855" stop-color="#ffff0f"/><stop offset=".5099" stop-color="#ffd504"/><stop offset=".5221" stop-color="#ffc400"/><stop offset=".5389" stop-color="#ffb000"/><stop offset=".571" stop-color="#ff9100"/><stop offset=".6092" stop-color="#ff7500"/></linearGradient><linearGradient id="g104" href="#gB"><stop offset=".0122" stop-color="#00ff78"/><stop offset=".1771" stop-color="#00ff60"/><stop offset=".3176" stop-color="#00ff44"/><stop offset=".3618" stop-color="#39ff39"/><stop offset=".4046" stop-color="#77ff2d"/><stop offset=".4443" stop-color="#b8ff20"/><stop offset=".4824" stop-color="#feff12"/><stop offset=".5099" stop-color="#ffd206"/><stop offset=".5267" stop-color="#ffbb00"/><stop offset=".5389" stop-color="#ffad00"/><stop offset=".574" stop-color="#ff8c00"/><stop offset=".6137" stop-color="#ff7000"/></linearGradient><linearGradient id="g105" href="#gB"><stop offset=".0137" stop-color="#00ff7a"/><stop offset=".1771" stop-color="#00ff63"/><stop offset=".316" stop-color="#00ff47"/><stop offset=".3573" stop-color="#34ff3d"/><stop offset=".4015" stop-color="#75ff30"/><stop offset=".4412" stop-color="#b6ff24"/><stop offset=".4809" stop-color="#fffe15"/><stop offset=".5084" stop-color="#ffd008"/><stop offset=".5389" stop-color="#ffaa00"/><stop offset=".5756" stop-color="#ff8800"/><stop offset=".6183" stop-color="#ff6b00"/></linearGradient><linearGradient id="g106" href="#gB"><stop offset=".0137" stop-color="#00ff7c"/><stop offset=".1771" stop-color="#00ff65"/><stop offset=".316" stop-color="#01ff49"/><stop offset=".3603" stop-color="#3bff3e"/><stop offset=".4015" stop-color="#78ff32"/><stop offset=".4412" stop-color="#baff26"/><stop offset=".4779" stop-color="#feff19"/><stop offset=".5069" stop-color="#ffce0b"/><stop offset=".5389" stop-color="#ffa700"/><stop offset=".5771" stop-color="#ff8400"/><stop offset=".6214" stop-color="#ff6700"/></linearGradient><linearGradient id="g107" href="#gB"><stop offset=".0137" stop-color="#00ff7e"/><stop offset=".1771" stop-color="#00ff67"/><stop offset=".3145" stop-color="#00ff4c"/><stop offset=".3573" stop-color="#38ff41"/><stop offset=".3985" stop-color="#76ff36"/><stop offset=".4366" stop-color="#b5ff2a"/><stop offset=".4763" stop-color="#fffe1c"/><stop offset=".4901" stop-color="#ffe514"/><stop offset=".5053" stop-color="#ffcd0d"/><stop offset=".5389" stop-color="#ffa401"/><stop offset=".5786" stop-color="#ff8100"/><stop offset=".626" stop-color="#ff6300"/></linearGradient><linearGradient id="g108" href="#gB"><stop offset=".0153" stop-color="#00ff80"/><stop offset=".1771" stop-color="#00ff69"/><stop offset=".313" stop-color="#00ff4f"/><stop offset=".3542" stop-color="#36ff45"/><stop offset=".3969" stop-color="#76ff39"/><stop offset=".4366" stop-color="#b9ff2c"/><stop offset=".4733" stop-color="#ffff1f"/><stop offset=".5023" stop-color="#ffcd10"/><stop offset=".5374" stop-color="#ffa203"/><stop offset=".5481" stop-color="#ff9800"/><stop offset=".5786" stop-color="#ff7e00"/><stop offset=".629" stop-color="#ff5f00"/></linearGradient><linearGradient id="g109" href="#gB"><stop offset=".0153" stop-color="#00ff82"/><stop offset=".1756" stop-color="#00ff6c"/><stop offset=".3115" stop-color="#00ff51"/><stop offset=".3496" stop-color="#32ff48"/><stop offset=".3924" stop-color="#72ff3d"/><stop offset=".429" stop-color="#afff31"/><stop offset=".4718" stop-color="#fffd22"/><stop offset=".487" stop-color="#ffe119"/><stop offset=".5023" stop-color="#ffca12"/><stop offset=".5389" stop-color="#ff9e04"/><stop offset=".5527" stop-color="#ff9100"/><stop offset=".5817" stop-color="#ff7a00"/><stop offset=".6336" stop-color="#ff5b00"/></linearGradient><linearGradient id="g110" href="#gB"><stop offset=".0153" stop-color="#00ff84"/><stop offset=".1756" stop-color="#00ff6e"/><stop offset=".3115" stop-color="#00ff54"/><stop offset=".3542" stop-color="#3aff4a"/><stop offset=".3939" stop-color="#77ff3f"/><stop offset=".4321" stop-color="#b8ff33"/><stop offset=".4687" stop-color="#ffff26"/><stop offset=".484" stop-color="#ffe21d"/><stop offset=".4992" stop-color="#ffca15"/><stop offset=".5176" stop-color="#ffb20d"/><stop offset=".5374" stop-color="#ff9c06"/><stop offset=".5573" stop-color="#ff8a00"/><stop offset=".5832" stop-color="#ff7600"/><stop offset=".6382" stop-color="#ff5700"/></linearGradient><linearGradient id="g111" href="#gB"><stop offset=".0168" stop-color="#00ff86"/><stop offset=".1756" stop-color="#00ff70"/><stop offset=".3099" stop-color="#00ff57"/><stop offset=".3527" stop-color="#3aff4d"/><stop offset=".3924" stop-color="#77ff42"/><stop offset=".4305" stop-color="#b9ff36"/><stop offset=".4656" stop-color="#feff2a"/><stop offset=".4824" stop-color="#ffe020"/><stop offset=".4992" stop-color="#ffc617"/><stop offset=".5176" stop-color="#ffaf0f"/><stop offset=".5374" stop-color="#ff9907"/><stop offset=".5618" stop-color="#ff8400"/><stop offset=".5847" stop-color="#ff7300"/><stop offset=".6412" stop-color="#ff5400"/></linearGradient><linearGradient id="g112" href="#gB"><stop offset=".0168" stop-color="#00ff88"/><stop offset=".1756" stop-color="#00ff73"/><stop offset=".3084" stop-color="#00ff5a"/><stop offset=".3481" stop-color="#36ff50"/><stop offset=".3893" stop-color="#75ff45"/><stop offset=".4275" stop-color="#b8ff3a"/><stop offset=".4626" stop-color="#fdff2e"/><stop offset=".4641" stop-color="#fffe2d"/><stop offset=".4794" stop-color="#ffe123"/><stop offset=".4977" stop-color="#ffc519"/><stop offset=".516" stop-color="#ffad11"/><stop offset=".5374" stop-color="#ff9709"/><stop offset=".5664" stop-color="#ff7e00"/><stop offset=".5863" stop-color="#ff7000"/><stop offset=".6458" stop-color="#ff5000"/></linearGradient><linearGradient id="g113" href="#gB"><stop offset=".0168" stop-color="#00ff8b"/><stop offset=".1756" stop-color="#00ff75"/><stop offset=".3084" stop-color="#01ff5c"/><stop offset=".3496" stop-color="#3aff53"/><stop offset=".3893" stop-color="#78ff48"/><stop offset=".426" stop-color="#b9ff3d"/><stop offset=".4611" stop-color="#feff31"/><stop offset=".4779" stop-color="#ffdf26"/><stop offset=".4962" stop-color="#ffc31c"/><stop offset=".516" stop-color="#ffaa12"/><stop offset=".5374" stop-color="#ff940a"/><stop offset=".5725" stop-color="#ff7700"/><stop offset=".6092" stop-color="#ff6000"/><stop offset=".6504" stop-color="#ff4c00"/></linearGradient><linearGradient id="g114" href="#gB"><stop offset=".0183" stop-color="#00ff8d"/><stop offset=".174" stop-color="#00ff78"/><stop offset=".3069" stop-color="#00ff5f"/><stop offset=".3481" stop-color="#3aff56"/><stop offset=".3863" stop-color="#76ff4c"/><stop offset=".4229" stop-color="#b7ff41"/><stop offset=".458" stop-color="#fdff35"/><stop offset=".4779" stop-color="#ffdb28"/><stop offset=".4947" stop-color="#ffc11e"/><stop offset=".5145" stop-color="#ffa815"/><stop offset=".5374" stop-color="#ff910c"/><stop offset=".5771" stop-color="#ff7100"/><stop offset=".6122" stop-color="#ff5c00"/><stop offset=".6534" stop-color="#ff4900"/></linearGradient><linearGradient id="g115" href="#gB"><stop offset=".0183" stop-color="#00ff8f"/><stop offset=".174" stop-color="#00ff7b"/><stop offset=".3053" stop-color="#00ff63"/><stop offset=".345" stop-color="#38ff59"/><stop offset=".3847" stop-color="#76ff4f"/><stop offset=".4214" stop-color="#b8ff44"/><stop offset=".4565" stop-color="#ffff39"/><stop offset=".4733" stop-color="#ffdf2c"/><stop offset=".4916" stop-color="#ffc221"/><stop offset=".513" stop-color="#ffa717"/><stop offset=".5359" stop-color="#ff8f0e"/><stop offset=".5817" stop-color="#ff6c00"/><stop offset=".6168" stop-color="#ff5800"/><stop offset=".658" stop-color="#ff4600"/></linearGradient><linearGradient id="g116" href="#gB"><stop offset=".0183" stop-color="#00ff91"/><stop offset=".1725" stop-color="#00ff7d"/><stop offset=".3038" stop-color="#00ff66"/><stop offset=".342" stop-color="#35ff5d"/><stop offset=".3817" stop-color="#74ff53"/><stop offset=".4183" stop-color="#b6ff48"/><stop offset=".4534" stop-color="#feff3d"/><stop offset=".4733" stop-color="#ffda2e"/><stop offset=".4916" stop-color="#ffbe23"/><stop offset=".513" stop-color="#ffa418"/><stop offset=".5359" stop-color="#ff8d0f"/><stop offset=".5878" stop-color="#ff6600"/><stop offset=".6229" stop-color="#ff5300"/><stop offset=".6611" stop-color="#ff4300"/></linearGradient><linearGradient id="g117" href="#gB"><stop offset=".0198" stop-color="#00ff93"/><stop offset=".174" stop-color="#00ff80"/><stop offset=".3038" stop-color="#01ff69"/><stop offset=".3435" stop-color="#3aff60"/><stop offset=".3817" stop-color="#77ff56"/><stop offset=".4168" stop-color="#b7ff4c"/><stop offset=".4504" stop-color="#fcff41"/><stop offset=".4519" stop-color="#ffff40"/><stop offset=".4702" stop-color="#ffdb32"/><stop offset=".4901" stop-color="#ffbc25"/><stop offset=".5115" stop-color="#ffa21a"/><stop offset=".5359" stop-color="#ff8a11"/><stop offset=".5618" stop-color="#ff7508"/><stop offset=".5924" stop-color="#ff6100"/><stop offset=".6656" stop-color="#ff4000"/></linearGradient><linearGradient id="g118" href="#gB"><stop offset=".0198" stop-color="#00ff96"/><stop offset=".1725" stop-color="#00ff83"/><stop offset=".3023" stop-color="#00ff6c"/><stop offset=".342" stop-color="#3aff63"/><stop offset=".3802" stop-color="#78ff59"/><stop offset=".4153" stop-color="#b8ff50"/><stop offset=".4489" stop-color="#feff45"/><stop offset=".4687" stop-color="#ffd935"/><stop offset=".487" stop-color="#ffbd29"/><stop offset=".5099" stop-color="#ffa01d"/><stop offset=".5344" stop-color="#ff8812"/><stop offset=".5634" stop-color="#ff7109"/><stop offset=".5969" stop-color="#ff5d00"/><stop offset=".6702" stop-color="#ff3c00"/></linearGradient><linearGradient id="g119" href="#gB"><stop offset=".0198" stop-color="#00ff98"/><stop offset=".1725" stop-color="#00ff85"/><stop offset=".3008" stop-color="#00ff6f"/><stop offset=".3389" stop-color="#37ff67"/><stop offset=".3771" stop-color="#76ff5d"/><stop offset=".4122" stop-color="#b7ff54"/><stop offset=".4458" stop-color="#fdff49"/><stop offset=".4473" stop-color="#fffe48"/><stop offset=".4672" stop-color="#ffd738"/><stop offset=".487" stop-color="#ffb92a"/><stop offset=".5099" stop-color="#ff9d1e"/><stop offset=".5344" stop-color="#ff8514"/><stop offset=".5664" stop-color="#ff6d09"/><stop offset=".6015" stop-color="#ff5800"/><stop offset=".6733" stop-color="#ff3a00"/></linearGradient><linearGradient id="g120" href="#gB"><stop offset=".0214" stop-color="#00ff9b"/><stop offset=".1725" stop-color="#00ff88"/><stop offset=".2992" stop-color="#00ff72"/><stop offset=".3344" stop-color="#32ff6b"/><stop offset=".374" stop-color="#73ff61"/><stop offset=".4107" stop-color="#b8ff57"/><stop offset=".4443" stop-color="#ffff4d"/><stop offset=".4641" stop-color="#ffd83c"/><stop offset=".484" stop-color="#ffb92e"/><stop offset=".5084" stop-color="#ff9c20"/><stop offset=".5344" stop-color="#ff8315"/><stop offset=".5679" stop-color="#ff6a0a"/><stop offset=".6076" stop-color="#ff5300"/><stop offset=".6779" stop-color="#ff3700"/></linearGradient><linearGradient id="g121" href="#gB"><stop offset=".0214" stop-color="#00ff9d"/><stop offset=".1725" stop-color="#00ff8b"/><stop offset=".2992" stop-color="#00ff76"/><stop offset=".3374" stop-color="#39ff6d"/><stop offset=".374" stop-color="#77ff65"/><stop offset=".4092" stop-color="#b9ff5b"/><stop offset=".4412" stop-color="#fdff51"/><stop offset=".4626" stop-color="#ffd63e"/><stop offset=".484" stop-color="#ffb62f"/><stop offset=".5084" stop-color="#ff9822"/><stop offset=".5344" stop-color="#ff8017"/><stop offset=".571" stop-color="#ff650a"/><stop offset=".6122" stop-color="#ff4f00"/><stop offset=".6824" stop-color="#ff3400"/></linearGradient><linearGradient id="g122" href="#gB"><stop offset=".0229" stop-color="#00ff9f"/><stop offset=".1725" stop-color="#00ff8e"/><stop offset=".2977" stop-color="#00ff79"/><stop offset=".3359" stop-color="#39ff71"/><stop offset=".3725" stop-color="#77ff68"/><stop offset=".4076" stop-color="#baff5f"/><stop offset=".4397" stop-color="#ffff55"/><stop offset=".4595" stop-color="#ffd743"/><stop offset=".4809" stop-color="#ffb633"/><stop offset=".5053" stop-color="#ff9825"/><stop offset=".5328" stop-color="#ff7f19"/><stop offset=".571" stop-color="#ff630c"/><stop offset=".6168" stop-color="#ff4b00"/><stop offset=".6855" stop-color="#ff3200"/></linearGradient><linearGradient id="g123" href="#gB"><stop offset=".0229" stop-color="#00ffa2"/><stop offset=".171" stop-color="#00ff91"/><stop offset=".2962" stop-color="#00ff7d"/><stop offset=".3313" stop-color="#34ff75"/><stop offset=".3695" stop-color="#75ff6d"/><stop offset=".4046" stop-color="#b8ff64"/><stop offset=".4366" stop-color="#feff5a"/><stop offset=".458" stop-color="#ffd546"/><stop offset=".4794" stop-color="#ffb435"/><stop offset=".5038" stop-color="#ff9727"/><stop offset=".5328" stop-color="#ff7c1a"/><stop offset=".574" stop-color="#ff5f0c"/><stop offset=".6214" stop-color="#ff4700"/><stop offset=".6901" stop-color="#ff2f00"/></linearGradient><linearGradient id="g124" href="#gB"><stop offset=".0229" stop-color="#00ffa5"/><stop offset=".171" stop-color="#00ff94"/><stop offset=".2962" stop-color="#01ff80"/><stop offset=".3344" stop-color="#3bff78"/><stop offset=".3695" stop-color="#78ff70"/><stop offset=".4031" stop-color="#b9ff68"/><stop offset=".4336" stop-color="#fcff5f"/><stop offset=".4351" stop-color="#fffe5e"/><stop offset=".4565" stop-color="#ffd348"/><stop offset=".4779" stop-color="#ffb338"/><stop offset=".5023" stop-color="#ff9529"/><stop offset=".5313" stop-color="#ff7a1c"/><stop offset=".5756" stop-color="#ff5c0d"/><stop offset=".6275" stop-color="#ff4300"/><stop offset=".6931" stop-color="#ff2d00"/></linearGradient><linearGradient id="g125" href="#gB"><stop offset=".0244" stop-color="#00ffa7"/><stop offset=".171" stop-color="#00ff97"/><stop offset=".2947" stop-color="#00ff84"/><stop offset=".3328" stop-color="#3bff7c"/><stop offset=".3679" stop-color="#78ff74"/><stop offset=".4015" stop-color="#bbff6c"/><stop offset=".4321" stop-color="#feff63"/><stop offset=".4534" stop-color="#ffd44d"/><stop offset=".4748" stop-color="#ffb33c"/><stop offset=".5008" stop-color="#ff942c"/><stop offset=".5298" stop-color="#ff791e"/><stop offset=".5756" stop-color="#ff5a0e"/><stop offset=".6321" stop-color="#ff3f00"/><stop offset=".6977" stop-color="#ff2a00"/></linearGradient><linearGradient id="g126" href="#gB"><stop offset=".0244" stop-color="#00ffaa"/><stop offset=".171" stop-color="#00ff9a"/><stop offset=".2931" stop-color="#00ff87"/><stop offset=".3282" stop-color="#36ff81"/><stop offset=".3649" stop-color="#76ff79"/><stop offset=".3985" stop-color="#b9ff70"/><stop offset=".429" stop-color="#fdff68"/><stop offset=".4305" stop-color="#fffe67"/><stop offset=".4519" stop-color="#ffd250"/><stop offset=".4733" stop-color="#ffb13e"/><stop offset=".4992" stop-color="#ff922e"/><stop offset=".5298" stop-color="#ff761f"/><stop offset=".5786" stop-color="#ff560e"/><stop offset=".6366" stop-color="#ff3c00"/><stop offset=".7023" stop-color="#ff2700"/></linearGradient><linearGradient id="g127" href="#gB"><stop offset=".026" stop-color="#00ffad"/><stop offset=".171" stop-color="#00ff9d"/><stop offset=".2916" stop-color="#00ff8b"/><stop offset=".3252" stop-color="#33ff85"/><stop offset=".3618" stop-color="#74ff7d"/><stop offset=".3954" stop-color="#b7ff75"/><stop offset=".4275" stop-color="#ffff6c"/><stop offset=".4489" stop-color="#ffd354"/><stop offset=".4718" stop-color="#ffaf41"/><stop offset=".4977" stop-color="#ff9030"/><stop offset=".5282" stop-color="#ff7521"/><stop offset=".5786" stop-color="#ff540f"/><stop offset=".6412" stop-color="#ff3900"/><stop offset=".7053" stop-color="#ff2500"/></linearGradient><linearGradient id="g128" href="#gB"><stop offset=".026" stop-color="#00ffaf"/><stop offset=".171" stop-color="#00ffa0"/><stop offset=".2916" stop-color="#01ff8f"/><stop offset=".3282" stop-color="#3bff88"/><stop offset=".3618" stop-color="#77ff81"/><stop offset=".3939" stop-color="#b8ff79"/><stop offset=".4244" stop-color="#fdff71"/><stop offset=".4473" stop-color="#ffd157"/><stop offset=".4702" stop-color="#ffae44"/><stop offset=".4977" stop-color="#ff8d31"/><stop offset=".5282" stop-color="#ff7222"/><stop offset=".5817" stop-color="#ff510f"/><stop offset=".6473" stop-color="#ff3500"/><stop offset=".7099" stop-color="#ff2300"/></linearGradient><linearGradient id="g129" href="#gB"><stop offset=".026" stop-color="#00ffb2"/><stop offset=".1695" stop-color="#00ffa4"/><stop offset=".2901" stop-color="#00ff93"/><stop offset=".3267" stop-color="#3bff8c"/><stop offset=".3603" stop-color="#78ff85"/><stop offset=".3924" stop-color="#b9ff7e"/><stop offset=".4229" stop-color="#ffff76"/><stop offset=".4427" stop-color="#ffd55e"/><stop offset=".4672" stop-color="#ffae47"/><stop offset=".4947" stop-color="#ff8d35"/><stop offset=".5267" stop-color="#ff7124"/><stop offset=".5802" stop-color="#ff4f11"/><stop offset=".6473" stop-color="#ff3301"/><stop offset=".713" stop-color="#ff2100"/></linearGradient><linearGradient id="g130" href="#gB"><stop offset=".0275" stop-color="#00ffb5"/><stop offset=".1695" stop-color="#00ffa7"/><stop offset=".2885" stop-color="#00ff97"/><stop offset=".3221" stop-color="#35ff91"/><stop offset=".3573" stop-color="#75ff8a"/><stop offset=".3893" stop-color="#b7ff83"/><stop offset=".4198" stop-color="#feff7b"/><stop offset=".4427" stop-color="#ffd05f"/><stop offset=".4656" stop-color="#ffac4a"/><stop offset=".4947" stop-color="#ff8a36"/><stop offset=".5267" stop-color="#ff6e26"/><stop offset=".5802" stop-color="#ff4d12"/><stop offset=".6473" stop-color="#ff3202"/><stop offset=".7176" stop-color="#ff1e00"/></linearGradient><linearGradient id="g131" href="#gB"><stop offset=".0275" stop-color="#00ffb8"/><stop offset=".1679" stop-color="#00ffab"/><stop offset=".287" stop-color="#00ff9b"/><stop offset=".3176" stop-color="#30ff96"/><stop offset=".3542" stop-color="#73ff8f"/><stop offset=".3863" stop-color="#b5ff88"/><stop offset=".4168" stop-color="#fcff81"/><stop offset=".4183" stop-color="#fffe80"/><stop offset=".4412" stop-color="#ffce62"/><stop offset=".4656" stop-color="#ffa84c"/><stop offset=".4947" stop-color="#ff8737"/><stop offset=".5267" stop-color="#ff6c27"/><stop offset=".5802" stop-color="#ff4b13"/><stop offset=".6473" stop-color="#ff3003"/><stop offset=".6626" stop-color="#ff2c00"/><stop offset=".7221" stop-color="#ff1c00"/></linearGradient><linearGradient id="g132" href="#gB"><stop offset=".029" stop-color="#00ffbb"/><stop offset=".1695" stop-color="#00ffae"/><stop offset=".287" stop-color="#00ff9f"/><stop offset=".3221" stop-color="#3aff99"/><stop offset=".3542" stop-color="#76ff93"/><stop offset=".3863" stop-color="#b9ff8c"/><stop offset=".4153" stop-color="#feff86"/><stop offset=".4382" stop-color="#ffcf67"/><stop offset=".4626" stop-color="#ffa850"/><stop offset=".4916" stop-color="#ff873b"/><stop offset=".5252" stop-color="#ff6a29"/><stop offset=".5649" stop-color="#ff5119"/><stop offset=".6107" stop-color="#ff3c0c"/><stop offset=".6672" stop-color="#ff2900"/><stop offset=".7252" stop-color="#ff1a00"/></linearGradient><linearGradient id="g133" href="#gB"><stop offset=".029" stop-color="#00ffbe"/><stop offset=".1679" stop-color="#00ffb2"/><stop offset=".2855" stop-color="#00ffa3"/><stop offset=".3191" stop-color="#38ff9e"/><stop offset=".3527" stop-color="#77ff98"/><stop offset=".3832" stop-color="#b7ff92"/><stop offset=".4122" stop-color="#fdff8b"/><stop offset=".4137" stop-color="#fffe8a"/><stop offset=".4244" stop-color="#ffe57a"/><stop offset=".4366" stop-color="#ffcd6b"/><stop offset=".4611" stop-color="#ffa752"/><stop offset=".4901" stop-color="#ff853d"/><stop offset=".5237" stop-color="#ff692b"/><stop offset=".5634" stop-color="#ff501b"/><stop offset=".6107" stop-color="#ff3a0d"/><stop offset=".6718" stop-color="#ff2600"/><stop offset=".7298" stop-color="#ff1800"/></linearGradient><linearGradient id="g134" href="#gB"><stop offset=".0305" stop-color="#00ffc1"/><stop offset=".1679" stop-color="#00ffb5"/><stop offset=".284" stop-color="#00ffa7"/><stop offset=".316" stop-color="#35ffa3"/><stop offset=".3496" stop-color="#74ff9d"/><stop offset=".3817" stop-color="#b9ff97"/><stop offset=".4107" stop-color="#ffff90"/><stop offset=".4321" stop-color="#ffd072"/><stop offset=".458" stop-color="#ffa756"/><stop offset=".487" stop-color="#ff8540"/><stop offset=".5221" stop-color="#ff672d"/><stop offset=".5634" stop-color="#ff4e1c"/><stop offset=".6107" stop-color="#ff380e"/><stop offset=".6779" stop-color="#ff2300"/><stop offset=".7328" stop-color="#ff1600"/></linearGradient><linearGradient id="g135" href="#gB"><stop offset=".0305" stop-color="#00ffc4"/><stop offset=".1679" stop-color="#00ffb9"/><stop offset=".284" stop-color="#01ffac"/><stop offset=".3176" stop-color="#3affa7"/><stop offset=".3496" stop-color="#78ffa1"/><stop offset=".3802" stop-color="#baff9c"/><stop offset=".4076" stop-color="#fdff96"/><stop offset=".4321" stop-color="#ffcb73"/><stop offset=".4565" stop-color="#ffa559"/><stop offset=".487" stop-color="#ff8242"/><stop offset=".5221" stop-color="#ff652e"/><stop offset=".5634" stop-color="#ff4c1d"/><stop offset=".6122" stop-color="#ff360f"/><stop offset=".6824" stop-color="#ff2000"/><stop offset=".7374" stop-color="#ff1400"/></linearGradient><linearGradient id="g136" href="#gB"><stop offset=".0305" stop-color="#00ffc7"/><stop offset=".1679" stop-color="#00ffbd"/><stop offset=".2824" stop-color="#00ffb0"/><stop offset=".316" stop-color="#3affab"/><stop offset=".3481" stop-color="#78ffa6"/><stop offset=".3771" stop-color="#b8ffa1"/><stop offset=".4061" stop-color="#ffff9b"/><stop offset=".4275" stop-color="#ffcf7a"/><stop offset=".4534" stop-color="#ffa55d"/><stop offset=".484" stop-color="#ff8245"/><stop offset=".5206" stop-color="#ff6330"/><stop offset=".5634" stop-color="#ff4a1e"/><stop offset=".6137" stop-color="#ff340f"/><stop offset=".687" stop-color="#ff1e00"/><stop offset=".742" stop-color="#ff1200"/></linearGradient><linearGradient id="g137" href="#gB"><stop offset=".0321" stop-color="#00ffca"/><stop offset=".2809" stop-color="#00ffb5"/><stop offset=".313" stop-color="#37ffb0"/><stop offset=".345" stop-color="#76ffac"/><stop offset=".3756" stop-color="#b9ffa7"/><stop offset=".4031" stop-color="#feffa1"/><stop offset=".426" stop-color="#ffcd7e"/><stop offset=".4519" stop-color="#ffa360"/><stop offset=".4824" stop-color="#ff8047"/><stop offset=".5191" stop-color="#ff6232"/><stop offset=".5618" stop-color="#ff4820"/><stop offset=".6137" stop-color="#ff3210"/><stop offset=".6916" stop-color="#ff1c00"/><stop offset=".745" stop-color="#ff1000"/></linearGradient><linearGradient id="g138" href="#gB"><stop offset=".0321" stop-color="#00ffce"/><stop offset=".2794" stop-color="#00ffb9"/><stop offset=".3084" stop-color="#31ffb6"/><stop offset=".342" stop-color="#73ffb1"/><stop offset=".371" stop-color="#b3ffad"/><stop offset=".4015" stop-color="#fffea6"/><stop offset=".4122" stop-color="#ffe493"/><stop offset=".4244" stop-color="#ffcb81"/><stop offset=".4504" stop-color="#ffa163"/><stop offset=".4824" stop-color="#ff7d49"/><stop offset=".5191" stop-color="#ff5f33"/><stop offset=".5634" stop-color="#ff4520"/><stop offset=".6153" stop-color="#ff3011"/><stop offset=".6977" stop-color="#ff1900"/><stop offset=".7496" stop-color="#ff0f00"/></linearGradient><linearGradient id="g139" href="#gB"><stop offset=".0336" stop-color="#00ffd1"/><stop offset=".2794" stop-color="#01ffbe"/><stop offset=".3115" stop-color="#3affba"/><stop offset=".3405" stop-color="#74ffb6"/><stop offset=".371" stop-color="#b8ffb2"/><stop offset=".3985" stop-color="#feffad"/><stop offset=".4" stop-color="#fffcab"/><stop offset=".4107" stop-color="#ffe297"/><stop offset=".4229" stop-color="#ffc985"/><stop offset=".4489" stop-color="#ff9f66"/><stop offset=".4809" stop-color="#ff7b4b"/><stop offset=".5191" stop-color="#ff5d34"/><stop offset=".5725" stop-color="#ff3f1e"/><stop offset=".6397" stop-color="#ff270c"/><stop offset=".7023" stop-color="#ff1700"/><stop offset=".7542" stop-color="#ff0d00"/></linearGradient><linearGradient id="g140" href="#gB"><stop offset=".0336" stop-color="#00ffd5"/><stop offset=".2779" stop-color="#00ffc3"/><stop offset=".3084" stop-color="#37ffc0"/><stop offset=".3389" stop-color="#74ffbc"/><stop offset=".3664" stop-color="#b2ffb8"/><stop offset=".3969" stop-color="#fffdb2"/><stop offset=".4076" stop-color="#ffe39e"/><stop offset=".4198" stop-color="#ffc98a"/><stop offset=".4458" stop-color="#ffa06a"/><stop offset=".4779" stop-color="#ff7b4e"/><stop offset=".516" stop-color="#ff5c37"/><stop offset=".5618" stop-color="#ff4223"/><stop offset=".6153" stop-color="#ff2d13"/><stop offset=".7069" stop-color="#ff1400"/><stop offset=".7573" stop-color="#ff0b00"/></linearGradient><linearGradient id="g141" href="#gB"><stop offset=".0351" stop-color="#00ffd8"/><stop offset=".2763" stop-color="#00ffc8"/><stop offset=".3053" stop-color="#34ffc5"/><stop offset=".3374" stop-color="#75ffc1"/><stop offset=".3664" stop-color="#b7ffbe"/><stop offset=".3939" stop-color="#ffffba"/><stop offset=".4046" stop-color="#ffe4a5"/><stop offset=".4168" stop-color="#ffca90"/><stop offset=".4443" stop-color="#ff9e6d"/><stop offset=".4763" stop-color="#ff7951"/><stop offset=".5145" stop-color="#ff5b39"/><stop offset=".5695" stop-color="#ff3d21"/><stop offset=".6366" stop-color="#ff240e"/><stop offset=".7115" stop-color="#ff1200"/><stop offset=".7618" stop-color="#ff0900"/></linearGradient><linearGradient id="g142" href="#gB"><stop offset=".0351" stop-color="#00ffdc"/><stop offset=".2763" stop-color="#01ffcd"/><stop offset=".3069" stop-color="#39ffca"/><stop offset=".3359" stop-color="#75ffc7"/><stop offset=".3618" stop-color="#b1ffc4"/><stop offset=".3908" stop-color="#fdffc0"/><stop offset=".3924" stop-color="#fffdbe"/><stop offset=".4031" stop-color="#ffe2a9"/><stop offset=".4153" stop-color="#ffc894"/><stop offset=".4427" stop-color="#ff9c70"/><stop offset=".4748" stop-color="#ff7753"/><stop offset=".5145" stop-color="#ff583a"/><stop offset=".5695" stop-color="#ff3b22"/><stop offset=".6366" stop-color="#ff230f"/><stop offset=".7176" stop-color="#ff1000"/><stop offset=".7649" stop-color="#ff0800"/></linearGradient><linearGradient id="g143" href="#gB"><stop offset=".0366" stop-color="#00ffdf"/><stop offset=".2748" stop-color="#00ffd2"/><stop offset=".3053" stop-color="#39ffd0"/><stop offset=".3344" stop-color="#76ffcd"/><stop offset=".3618" stop-color="#b6ffca"/><stop offset=".3893" stop-color="#fffec6"/><stop offset=".4" stop-color="#ffe3b0"/><stop offset=".4122" stop-color="#ffc99a"/><stop offset=".426" stop-color="#ffb086"/><stop offset=".4397" stop-color="#ff9c75"/><stop offset=".4733" stop-color="#ff7656"/><stop offset=".513" stop-color="#ff573c"/><stop offset=".5679" stop-color="#ff3a24"/><stop offset=".6366" stop-color="#ff2210"/><stop offset=".7221" stop-color="#ff0e00"/><stop offset=".7695" stop-color="#ff0600"/></linearGradient><linearGradient id="g144" href="#gB"><stop offset=".0366" stop-color="#00ffe3"/><stop offset=".2733" stop-color="#00ffd8"/><stop offset=".3023" stop-color="#36ffd5"/><stop offset=".3313" stop-color="#73ffd3"/><stop offset=".3557" stop-color="#acffd1"/><stop offset=".3863" stop-color="#feffce"/><stop offset=".3878" stop-color="#fffccb"/><stop offset=".3985" stop-color="#ffe1b4"/><stop offset=".4107" stop-color="#ffc69e"/><stop offset=".4244" stop-color="#ffae89"/><stop offset=".4397" stop-color="#ff9876"/><stop offset=".4733" stop-color="#ff7357"/><stop offset=".513" stop-color="#ff543d"/><stop offset=".5679" stop-color="#ff3825"/><stop offset=".6366" stop-color="#ff2011"/><stop offset=".7267" stop-color="#ff0c00"/><stop offset=".774" stop-color="#ff0400"/></linearGradient><linearGradient id="g145" href="#gB"><stop offset=".0382" stop-color="#00ffe7"/><stop offset=".2718" stop-color="#00ffdd"/><stop offset=".2992" stop-color="#33ffdb"/><stop offset=".3298" stop-color="#73ffd9"/><stop offset=".3557" stop-color="#b2ffd7"/><stop offset=".3847" stop-color="#fffed3"/><stop offset=".3954" stop-color="#ffe2bb"/><stop offset=".4076" stop-color="#ffc7a4"/><stop offset=".4214" stop-color="#ffae8f"/><stop offset=".4351" stop-color="#ff9a7d"/><stop offset=".4687" stop-color="#ff745c"/><stop offset=".5099" stop-color="#ff5440"/><stop offset=".5664" stop-color="#ff3627"/><stop offset=".6351" stop-color="#ff1f12"/><stop offset=".7313" stop-color="#ff0a00"/><stop offset=".7771" stop-color="#ff0300"/></linearGradient><linearGradient id="g146" href="#gB"><stop offset=".0382" stop-color="#00ffeb"/><stop offset=".2718" stop-color="#01ffe3"/><stop offset=".3008" stop-color="#39ffe1"/><stop offset=".3267" stop-color="#71ffdf"/><stop offset=".3557" stop-color="#b7ffde"/><stop offset=".3817" stop-color="#feffdc"/><stop offset=".3832" stop-color="#fffbd8"/><stop offset=".3939" stop-color="#ffdfbf"/><stop offset=".4061" stop-color="#ffc5a8"/><stop offset=".4198" stop-color="#ffac92"/><stop offset=".4351" stop-color="#ff967e"/><stop offset=".4687" stop-color="#ff715d"/><stop offset=".5099" stop-color="#ff5141"/><stop offset=".5664" stop-color="#ff3428"/><stop offset=".6351" stop-color="#ff1e13"/><stop offset=".7374" stop-color="#ff0800"/><stop offset=".7817" stop-color="#ff0100"/></linearGradient><linearGradient id="g147" href="#gB"><stop offset=".0397" stop-color="#00ffef"/><stop offset=".2702" stop-color="#00ffe8"/><stop offset=".2992" stop-color="#38ffe7"/><stop offset=".3267" stop-color="#75ffe6"/><stop offset=".3511" stop-color="#b0ffe4"/><stop offset=".3802" stop-color="#fffde1"/><stop offset=".3908" stop-color="#ffe1c7"/><stop offset=".4031" stop-color="#ffc6ae"/><stop offset=".4168" stop-color="#ffad98"/><stop offset=".4321" stop-color="#ff9683"/><stop offset=".4672" stop-color="#ff6f5f"/><stop offset=".5084" stop-color="#ff5043"/><stop offset=".5649" stop-color="#ff3329"/><stop offset=".6351" stop-color="#ff1c14"/><stop offset=".742" stop-color="#ff0600"/><stop offset=".7863" stop-color="#ff0000"/></linearGradient><linearGradient id="g148" href="#gB"><stop offset=".0397" stop-color="#00fff3"/><stop offset=".2687" stop-color="#00ffee"/><stop offset=".2962" stop-color="#35ffed"/><stop offset=".3252" stop-color="#75ffec"/><stop offset=".3527" stop-color="#baffeb"/><stop offset=".3771" stop-color="#ffffea"/><stop offset=".3878" stop-color="#ffe2cf"/><stop offset=".4" stop-color="#ffc6b5"/><stop offset=".4137" stop-color="#ffad9e"/><stop offset=".429" stop-color="#ff9688"/><stop offset=".4641" stop-color="#ff6e63"/><stop offset=".5069" stop-color="#ff4e45"/><stop offset=".5634" stop-color="#ff322b"/><stop offset=".6351" stop-color="#ff1b15"/><stop offset=".7466" stop-color="#ff0400"/><stop offset=".7893" stop-color="#ff0000"/></linearGradient><linearGradient id="g149" href="#gB"><stop offset=".0412" stop-color="#00fff7"/><stop offset=".2672" stop-color="#00fff4"/><stop offset=".2916" stop-color="#2ffff4"/><stop offset=".3206" stop-color="#6ffff3"/><stop offset=".345" stop-color="#abfff3"/><stop offset=".374" stop-color="#fdfff2"/><stop offset=".3756" stop-color="#fffcef"/><stop offset=".3878" stop-color="#ffdcd0"/><stop offset=".4" stop-color="#ffc1b6"/><stop offset=".4137" stop-color="#ffa89f"/><stop offset=".429" stop-color="#ff9289"/><stop offset=".4641" stop-color="#ff6b64"/><stop offset=".5069" stop-color="#ff4c46"/><stop offset=".5649" stop-color="#ff2f2b"/><stop offset=".6351" stop-color="#ff1916"/><stop offset=".7511" stop-color="#ff0300"/><stop offset=".7939" stop-color="#ff0000"/></linearGradient><linearGradient id="g150" href="#gB"><stop offset=".0412" stop-color="#00fffb"/><stop offset=".2672" stop-color="#01fffa"/><stop offset=".2962" stop-color="#3bfffa"/><stop offset=".3221" stop-color="#76fffa"/><stop offset=".3466" stop-color="#b5fffa"/><stop offset=".3725" stop-color="#fffef9"/><stop offset=".3847" stop-color="#ffddd8"/><stop offset=".3969" stop-color="#ffc2bd"/><stop offset=".4107" stop-color="#ffa8a5"/><stop offset=".426" stop-color="#ff928e"/><stop offset=".4611" stop-color="#ff6b68"/><stop offset=".5053" stop-color="#ff4a48"/><stop offset=".5618" stop-color="#ff2f2d"/><stop offset=".6336" stop-color="#ff1817"/><stop offset=".7542" stop-color="#ff0100"/><stop offset=".7969" stop-color="#ff0000"/></linearGradient><linearGradient id="g151" href="#gB"><stop offset=".0427" stop-color="#00ffff"/><stop offset=".2656" stop-color="#00fdff"/><stop offset=".2931" stop-color="#37fdff"/><stop offset=".3206" stop-color="#76fdff"/><stop offset=".345" stop-color="#b5fdff"/><stop offset=".371" stop-color="#fffcfe"/><stop offset=".3832" stop-color="#ffdadd"/><stop offset=".3954" stop-color="#ffbfc1"/><stop offset=".4092" stop-color="#ffa6a8"/><stop offset=".4244" stop-color="#ff9092"/><stop offset=".4412" stop-color="#ff7b7d"/><stop offset=".4611" stop-color="#ff6869"/><stop offset=".5053" stop-color="#ff4849"/><stop offset=".5649" stop-color="#ff2c2d"/><stop offset=".6382" stop-color="#ff1617"/><stop offset=".7542" stop-color="#ff0001"/><stop offset=".8015" stop-color="#ff0000"/></linearGradient><linearGradient id="g152" href="#gB"><stop offset=".0427" stop-color="#00faff"/><stop offset=".2641" stop-color="#00f7ff"/><stop offset=".2901" stop-color="#33f7ff"/><stop offset=".3191" stop-color="#73f6ff"/><stop offset=".345" stop-color="#b5f5ff"/><stop offset=".371" stop-color="#fff4ff"/><stop offset=".3832" stop-color="#ffd4dd"/><stop offset=".3954" stop-color="#ffbac2"/><stop offset=".4092" stop-color="#ffa2a9"/><stop offset=".4244" stop-color="#ff8c93"/><stop offset=".4412" stop-color="#ff787e"/><stop offset=".4611" stop-color="#ff656b"/><stop offset=".5069" stop-color="#ff4549"/><stop offset=".5679" stop-color="#ff292d"/><stop offset=".6458" stop-color="#ff1216"/><stop offset=".7466" stop-color="#ff0003"/><stop offset=".8061" stop-color="#ff0000"/></linearGradient><linearGradient id="g153" href="#gB"><stop offset=".0443" stop-color="#00f6ff"/><stop offset=".2641" stop-color="#01f1ff"/><stop offset=".2931" stop-color="#3bf0ff"/><stop offset=".3206" stop-color="#78efff"/><stop offset=".3466" stop-color="#b9eeff"/><stop offset=".371" stop-color="#ffedff"/><stop offset=".3832" stop-color="#ffcede"/><stop offset=".3954" stop-color="#ffb4c3"/><stop offset=".4092" stop-color="#ff9daa"/><stop offset=".426" stop-color="#ff8692"/><stop offset=".4427" stop-color="#ff737e"/><stop offset=".4626" stop-color="#ff606a"/><stop offset=".5084" stop-color="#ff414a"/><stop offset=".5725" stop-color="#ff252c"/><stop offset=".6519" stop-color="#ff1015"/><stop offset=".7405" stop-color="#ff0005"/><stop offset=".7725" stop-color="#ff0000"/><stop offset=".8092" stop-color="#ff0000"/></linearGradient><linearGradient id="g154" href="#gB"><stop offset=".0443" stop-color="#00f2ff"/><stop offset=".2626" stop-color="#00ebff"/><stop offset=".2916" stop-color="#39eaff"/><stop offset=".3176" stop-color="#72e9ff"/><stop offset=".345" stop-color="#b6e7ff"/><stop offset=".371" stop-color="#fee5ff"/><stop offset=".3725" stop-color="#ffe2fb"/><stop offset=".3847" stop-color="#ffc5db"/><stop offset=".3969" stop-color="#ffacc1"/><stop offset=".4107" stop-color="#ff96a9"/><stop offset=".4275" stop-color="#ff8091"/><stop offset=".4458" stop-color="#ff6c7c"/><stop offset=".4656" stop-color="#ff5b69"/><stop offset=".5115" stop-color="#ff3d49"/><stop offset=".5786" stop-color="#ff222b"/><stop offset=".6626" stop-color="#ff0c14"/><stop offset=".7328" stop-color="#ff0006"/><stop offset=".7771" stop-color="#ff0000"/><stop offset=".8137" stop-color="#ff0000"/></linearGradient><linearGradient id="g155" href="#gB"><stop offset=".0458" stop-color="#00eeff"/><stop offset=".2611" stop-color="#00e6ff"/><stop offset=".2885" stop-color="#34e4ff"/><stop offset=".3176" stop-color="#73e2ff"/><stop offset=".3405" stop-color="#aae1ff"/><stop offset=".371" stop-color="#fedeff"/><stop offset=".3725" stop-color="#ffdbfc"/><stop offset=".3847" stop-color="#ffbfdc"/><stop offset=".3969" stop-color="#ffa7c2"/><stop offset=".4107" stop-color="#ff92aa"/><stop offset=".4275" stop-color="#ff7c92"/><stop offset=".4458" stop-color="#ff697d"/><stop offset=".4656" stop-color="#ff586a"/><stop offset=".5115" stop-color="#ff3b4a"/><stop offset=".5802" stop-color="#ff202b"/><stop offset=".6687" stop-color="#ff0a13"/><stop offset=".7267" stop-color="#ff0008"/><stop offset=".7817" stop-color="#ff0000"/><stop offset=".8168" stop-color="#ff0000"/></linearGradient><linearGradient id="g156" href="#gB"><stop offset=".0458" stop-color="#00eaff"/><stop offset=".2595" stop-color="#00e0ff"/><stop offset=".2855" stop-color="#30deff"/><stop offset=".316" stop-color="#71dcff"/><stop offset=".342" stop-color="#afdaff"/><stop offset=".371" stop-color="#fdd7ff"/><stop offset=".3725" stop-color="#ffd5fc"/><stop offset=".3847" stop-color="#ffb9dd"/><stop offset=".3985" stop-color="#ffa0c0"/><stop offset=".4137" stop-color="#ff89a6"/><stop offset=".429" stop-color="#ff7691"/><stop offset=".4473" stop-color="#ff647c"/><stop offset=".4672" stop-color="#ff546a"/><stop offset=".513" stop-color="#ff384a"/><stop offset=".5847" stop-color="#ff1c2b"/><stop offset=".6763" stop-color="#ff0712"/><stop offset=".7191" stop-color="#ff000a"/><stop offset=".7878" stop-color="#ff0000"/><stop offset=".8214" stop-color="#ff0000"/></linearGradient><linearGradient id="g157" href="#gB"><stop offset=".0473" stop-color="#00e5ff"/><stop offset=".2595" stop-color="#01daff"/><stop offset=".2901" stop-color="#3bd8ff"/><stop offset=".3176" stop-color="#75d6ff"/><stop offset=".342" stop-color="#afd3ff"/><stop offset=".3725" stop-color="#ffcefd"/><stop offset=".3847" stop-color="#ffb3de"/><stop offset=".3985" stop-color="#ff9bc1"/><stop offset=".4137" stop-color="#ff85a7"/><stop offset=".429" stop-color="#ff7392"/><stop offset=".4672" stop-color="#ff516b"/><stop offset=".5145" stop-color="#ff354a"/><stop offset=".5496" stop-color="#ff2639"/><stop offset=".5893" stop-color="#ff1a2a"/><stop offset=".687" stop-color="#ff0411"/><stop offset=".7115" stop-color="#ff000c"/><stop offset=".7924" stop-color="#ff0000"/><stop offset=".826" stop-color="#ff0000"/></linearGradient><linearGradient id="g158" href="#gB"><stop offset=".0473" stop-color="#00e1ff"/><stop offset=".258" stop-color="#00d5ff"/><stop offset=".2885" stop-color="#39d2ff"/><stop offset=".3176" stop-color="#76cfff"/><stop offset=".3435" stop-color="#b3cdff"/><stop offset=".3725" stop-color="#ffc8fe"/><stop offset=".3847" stop-color="#ffaedf"/><stop offset=".3985" stop-color="#ff96c2"/><stop offset=".4137" stop-color="#ff81a8"/><stop offset=".4305" stop-color="#ff6d91"/><stop offset=".4687" stop-color="#ff4d6b"/><stop offset=".516" stop-color="#ff324b"/><stop offset=".5527" stop-color="#ff2339"/><stop offset=".5939" stop-color="#ff1729"/><stop offset=".6962" stop-color="#ff0110"/><stop offset=".7969" stop-color="#ff0000"/><stop offset=".829" stop-color="#ff0000"/></linearGradient><linearGradient id="g159" href="#gB"><stop offset=".0489" stop-color="#00ddff"/><stop offset=".2565" stop-color="#00d0ff"/><stop offset=".2855" stop-color="#35cdff"/><stop offset=".316" stop-color="#74caff"/><stop offset=".3435" stop-color="#b4c6ff"/><stop offset=".3725" stop-color="#ffc2fe"/><stop offset=".3847" stop-color="#ffa9df"/><stop offset=".3985" stop-color="#ff91c3"/><stop offset=".4137" stop-color="#ff7da9"/><stop offset=".4305" stop-color="#ff6a92"/><stop offset=".4489" stop-color="#ff597e"/><stop offset=".4702" stop-color="#ff496a"/><stop offset=".5176" stop-color="#ff304b"/><stop offset=".5542" stop-color="#ff2139"/><stop offset=".5954" stop-color="#ff152a"/><stop offset=".6962" stop-color="#ff0011"/><stop offset=".8015" stop-color="#ff0000"/><stop offset=".8336" stop-color="#ff0000"/></linearGradient><linearGradient id="g160" href="#gB"><stop offset=".0504" stop-color="#00d9ff"/><stop offset=".2565" stop-color="#01caff"/><stop offset=".2885" stop-color="#3cc7ff"/><stop offset=".3176" stop-color="#78c4ff"/><stop offset=".345" stop-color="#b8c0ff"/><stop offset=".3725" stop-color="#ffbcff"/><stop offset=".3847" stop-color="#ffa3e0"/><stop offset=".3985" stop-color="#ff8dc4"/><stop offset=".4137" stop-color="#ff79aa"/><stop offset=".4305" stop-color="#ff6693"/><stop offset=".4489" stop-color="#ff567f"/><stop offset=".4702" stop-color="#ff476b"/><stop offset=".5191" stop-color="#ff2d4b"/><stop offset=".5939" stop-color="#ff142b"/><stop offset=".6901" stop-color="#ff0012"/><stop offset=".8046" stop-color="#ff0000"/><stop offset=".8382" stop-color="#ff0000"/></linearGradient><linearGradient id="g161" href="#gB"><stop offset=".0504" stop-color="#00d6ff"/><stop offset=".255" stop-color="#00c5ff"/><stop offset=".287" stop-color="#3ac2ff"/><stop offset=".3176" stop-color="#79beff"/><stop offset=".3466" stop-color="#bcbaff"/><stop offset=".3725" stop-color="#ffb5ff"/><stop offset=".3847" stop-color="#ff9ee1"/><stop offset=".3985" stop-color="#ff88c5"/><stop offset=".4137" stop-color="#ff75ab"/><stop offset=".4305" stop-color="#ff6394"/><stop offset=".4489" stop-color="#ff5380"/><stop offset=".4702" stop-color="#ff446d"/><stop offset=".5191" stop-color="#ff2b4c"/><stop offset=".5908" stop-color="#ff132d"/><stop offset=".6824" stop-color="#ff0015"/><stop offset=".7939" stop-color="#ff0002"/><stop offset=".8412" stop-color="#ff0000"/></linearGradient><linearGradient id="g162" href="#gB"><stop offset=".0519" stop-color="#00d2ff"/><stop offset=".2534" stop-color="#00c1ff"/><stop offset=".2824" stop-color="#33bdff"/><stop offset=".313" stop-color="#70b9ff"/><stop offset=".3435" stop-color="#b5b4ff"/><stop offset=".3725" stop-color="#feafff"/><stop offset=".374" stop-color="#ffadfc"/><stop offset=".3878" stop-color="#ff94db"/><stop offset=".4015" stop-color="#ff80c0"/><stop offset=".4168" stop-color="#ff6da8"/><stop offset=".4336" stop-color="#ff5d92"/><stop offset=".4733" stop-color="#ff3f6b"/><stop offset=".5221" stop-color="#ff274b"/><stop offset=".5893" stop-color="#ff122e"/><stop offset=".6748" stop-color="#ff0017"/><stop offset=".7863" stop-color="#ff0004"/><stop offset=".8458" stop-color="#ff0000"/></linearGradient><linearGradient id="g163" href="#gB"><stop offset=".0519" stop-color="#00ceff"/><stop offset=".2519" stop-color="#00bcff"/><stop offset=".2809" stop-color="#32b8ff"/><stop offset=".313" stop-color="#71b3ff"/><stop offset=".3389" stop-color="#aaafff"/><stop offset=".3725" stop-color="#fea9ff"/><stop offset=".374" stop-color="#ffa7fc"/><stop offset=".3878" stop-color="#ff8fdc"/><stop offset=".4015" stop-color="#ff7bc1"/><stop offset=".4168" stop-color="#ff6aa9"/><stop offset=".4336" stop-color="#ff5993"/><stop offset=".4534" stop-color="#ff4a7d"/><stop offset=".4748" stop-color="#ff3c6b"/><stop offset=".5237" stop-color="#ff254b"/><stop offset=".5878" stop-color="#ff1130"/><stop offset=".6687" stop-color="#ff0019"/><stop offset=".7802" stop-color="#ff0006"/><stop offset=".8229" stop-color="#ff0000"/><stop offset=".8489" stop-color="#ff0000"/></linearGradient><linearGradient id="g164" href="#gB"><stop offset=".0534" stop-color="#00caff"/><stop offset=".2519" stop-color="#01b7ff"/><stop offset=".284" stop-color="#39b3ff"/><stop offset=".3145" stop-color="#75aeff"/><stop offset=".3405" stop-color="#aea9ff"/><stop offset=".3725" stop-color="#fda3ff"/><stop offset=".374" stop-color="#ffa1fd"/><stop offset=".3878" stop-color="#ff8adc"/><stop offset=".4015" stop-color="#ff77c2"/><stop offset=".4168" stop-color="#ff66aa"/><stop offset=".4351" stop-color="#ff5592"/><stop offset=".4763" stop-color="#ff396b"/><stop offset=".5252" stop-color="#ff224b"/><stop offset=".5863" stop-color="#ff0f31"/><stop offset=".6611" stop-color="#ff001c"/><stop offset=".774" stop-color="#ff0007"/><stop offset=".8275" stop-color="#ff0000"/><stop offset=".8534" stop-color="#ff0000"/></linearGradient><linearGradient id="g165" href="#gB"><stop offset=".0534" stop-color="#00c6ff"/><stop offset=".2504" stop-color="#00b2ff"/><stop offset=".284" stop-color="#3aaeff"/><stop offset=".3145" stop-color="#76a9ff"/><stop offset=".342" stop-color="#b2a4ff"/><stop offset=".374" stop-color="#ff9cfd"/><stop offset=".3878" stop-color="#ff85dd"/><stop offset=".4015" stop-color="#ff73c3"/><stop offset=".4168" stop-color="#ff62ab"/><stop offset=".4351" stop-color="#ff5293"/><stop offset=".4763" stop-color="#ff366c"/><stop offset=".5267" stop-color="#ff204c"/><stop offset=".5847" stop-color="#ff0e33"/><stop offset=".6534" stop-color="#ff001e"/><stop offset=".7679" stop-color="#ff0009"/><stop offset=".8321" stop-color="#ff0000"/><stop offset=".858" stop-color="#ff0000"/></linearGradient><linearGradient id="g166" href="#gB"><stop offset=".055" stop-color="#00c3ff"/><stop offset=".2489" stop-color="#00aeff"/><stop offset=".2809" stop-color="#36a9ff"/><stop offset=".313" stop-color="#74a4ff"/><stop offset=".342" stop-color="#b29eff"/><stop offset=".374" stop-color="#ff97fe"/><stop offset=".3878" stop-color="#ff81de"/><stop offset=".4015" stop-color="#ff6fc4"/><stop offset=".4168" stop-color="#ff5fac"/><stop offset=".4351" stop-color="#ff4e94"/><stop offset=".4763" stop-color="#ff346d"/><stop offset=".5267" stop-color="#ff1e4d"/><stop offset=".5817" stop-color="#ff0d35"/><stop offset=".6473" stop-color="#ff0021"/><stop offset=".7618" stop-color="#ff000a"/><stop offset=".8366" stop-color="#ff0000"/><stop offset=".8611" stop-color="#ff0000"/></linearGradient><linearGradient id="g167" href="#gB"><stop offset=".0565" stop-color="#00bfff"/><stop offset=".2489" stop-color="#01a9ff"/><stop offset=".2824" stop-color="#3aa4ff"/><stop offset=".3145" stop-color="#789eff"/><stop offset=".3435" stop-color="#b699ff"/><stop offset=".374" stop-color="#ff91fe"/><stop offset=".3878" stop-color="#ff7cde"/><stop offset=".4015" stop-color="#ff6bc4"/><stop offset=".4183" stop-color="#ff5aaa"/><stop offset=".4366" stop-color="#ff4a93"/><stop offset=".4779" stop-color="#ff306c"/><stop offset=".5282" stop-color="#ff1b4d"/><stop offset=".5786" stop-color="#ff0d37"/><stop offset=".6397" stop-color="#ff0023"/><stop offset=".7573" stop-color="#ff000b"/><stop offset=".8427" stop-color="#ff0000"/><stop offset=".8656" stop-color="#ff0000"/></linearGradient><linearGradient id="g168" href="#gB"><stop offset=".0565" stop-color="#00bbff"/><stop offset=".2473" stop-color="#00a5ff"/><stop offset=".2824" stop-color="#3c9fff"/><stop offset=".3145" stop-color="#7999ff"/><stop offset=".345" stop-color="#ba93ff"/><stop offset=".374" stop-color="#ff8cff"/><stop offset=".3878" stop-color="#ff78df"/><stop offset=".4015" stop-color="#ff67c5"/><stop offset=".4183" stop-color="#ff56ab"/><stop offset=".4366" stop-color="#ff4794"/><stop offset=".4779" stop-color="#ff2e6d"/><stop offset=".5298" stop-color="#ff194d"/><stop offset=".5771" stop-color="#ff0c38"/><stop offset=".6321" stop-color="#ff0026"/><stop offset=".7511" stop-color="#ff000d"/><stop offset=".8473" stop-color="#ff0000"/><stop offset=".8687" stop-color="#ff0000"/></linearGradient><linearGradient id="g169" href="#gB"><stop offset=".058" stop-color="#00b8ff"/><stop offset=".2458" stop-color="#00a1ff"/><stop offset=".2794" stop-color="#389bff"/><stop offset=".313" stop-color="#7695ff"/><stop offset=".345" stop-color="#ba8eff"/><stop offset=".374" stop-color="#ff87ff"/><stop offset=".3878" stop-color="#ff73e0"/><stop offset=".4031" stop-color="#ff61c3"/><stop offset=".4183" stop-color="#ff53ac"/><stop offset=".4366" stop-color="#ff4495"/><stop offset=".4565" stop-color="#ff3780"/><stop offset=".4794" stop-color="#ff2b6d"/><stop offset=".5313" stop-color="#ff174d"/><stop offset=".574" stop-color="#ff0b3a"/><stop offset=".6244" stop-color="#ff0029"/><stop offset=".7466" stop-color="#ff000e"/><stop offset=".8489" stop-color="#ff0000"/><stop offset=".8733" stop-color="#ff0000"/></linearGradient><linearGradient id="g170" href="#gB"><stop offset=".058" stop-color="#00b4ff"/><stop offset=".2443" stop-color="#009dff"/><stop offset=".2763" stop-color="#3497ff"/><stop offset=".3099" stop-color="#7191ff"/><stop offset=".3435" stop-color="#b789ff"/><stop offset=".374" stop-color="#fe82ff"/><stop offset=".3756" stop-color="#ff80fc"/><stop offset=".3893" stop-color="#ff6ddd"/><stop offset=".4046" stop-color="#ff5cc2"/><stop offset=".4198" stop-color="#ff4eab"/><stop offset=".4382" stop-color="#ff4094"/><stop offset=".4809" stop-color="#ff286d"/><stop offset=".5328" stop-color="#ff144d"/><stop offset=".5725" stop-color="#ff0a3b"/><stop offset=".6168" stop-color="#ff002c"/><stop offset=".6748" stop-color="#ff001d"/><stop offset=".7802" stop-color="#ff000a"/><stop offset=".8733" stop-color="#ff0000"/></linearGradient><linearGradient id="g171" href="#gB"><stop offset=".0595" stop-color="#00b1ff"/><stop offset=".2443" stop-color="#0198ff"/><stop offset=".2794" stop-color="#3a92ff"/><stop offset=".3115" stop-color="#758cff"/><stop offset=".3389" stop-color="#ad85ff"/><stop offset=".374" stop-color="#fe7dff"/><stop offset=".3756" stop-color="#ff7bfc"/><stop offset=".3893" stop-color="#ff69de"/><stop offset=".4046" stop-color="#ff58c2"/><stop offset=".4198" stop-color="#ff4bac"/><stop offset=".4382" stop-color="#ff3d95"/><stop offset=".4809" stop-color="#ff266e"/><stop offset=".5313" stop-color="#ff134f"/><stop offset=".6107" stop-color="#ff002f"/><stop offset=".6687" stop-color="#ff001f"/><stop offset=".7618" stop-color="#ff000d"/><stop offset=".8672" stop-color="#ff0000"/></linearGradient><linearGradient id="g172" href="#gB"><stop offset=".0611" stop-color="#00adff"/><stop offset=".2427" stop-color="#0094ff"/><stop offset=".2779" stop-color="#398eff"/><stop offset=".3099" stop-color="#7387ff"/><stop offset=".3389" stop-color="#ad81ff"/><stop offset=".374" stop-color="#fe78ff"/><stop offset=".3756" stop-color="#ff76fd"/><stop offset=".3893" stop-color="#ff65df"/><stop offset=".4046" stop-color="#ff55c3"/><stop offset=".4198" stop-color="#ff47ad"/><stop offset=".4382" stop-color="#ff3a96"/><stop offset=".4794" stop-color="#ff2470"/><stop offset=".5282" stop-color="#ff1251"/><stop offset=".6031" stop-color="#ff0032"/><stop offset=".6626" stop-color="#ff0021"/><stop offset=".7511" stop-color="#ff0010"/><stop offset=".858" stop-color="#ff0001"/></linearGradient><linearGradient id="g173" href="#gB"><stop offset=".0611" stop-color="#00aaff"/><stop offset=".2412" stop-color="#0091ff"/><stop offset=".2748" stop-color="#358aff"/><stop offset=".3099" stop-color="#7483ff"/><stop offset=".3405" stop-color="#b17cff"/><stop offset=".3756" stop-color="#ff71fd"/><stop offset=".3893" stop-color="#ff60df"/><stop offset=".4031" stop-color="#ff52c7"/><stop offset=".4183" stop-color="#ff45af"/><stop offset=".4366" stop-color="#ff3899"/><stop offset=".4779" stop-color="#ff2272"/><stop offset=".5267" stop-color="#ff1153"/><stop offset=".5954" stop-color="#ff0036"/><stop offset=".658" stop-color="#ff0023"/><stop offset=".745" stop-color="#ff0011"/><stop offset=".8504" stop-color="#ff0003"/></linearGradient><linearGradient id="g174" href="#gB"><stop offset=".0626" stop-color="#00a6ff"/><stop offset=".2397" stop-color="#008dff"/><stop offset=".2718" stop-color="#3187ff"/><stop offset=".3084" stop-color="#727fff"/><stop offset=".3405" stop-color="#b177ff"/><stop offset=".3756" stop-color="#ff6dfe"/><stop offset=".3893" stop-color="#ff5ce0"/><stop offset=".4031" stop-color="#ff4fc7"/><stop offset=".4183" stop-color="#ff42b0"/><stop offset=".4366" stop-color="#ff3599"/><stop offset=".4763" stop-color="#ff2174"/><stop offset=".5252" stop-color="#ff0f55"/><stop offset=".5893" stop-color="#ff0038"/><stop offset=".6534" stop-color="#ff0025"/><stop offset=".7389" stop-color="#ff0013"/><stop offset=".8412" stop-color="#ff0004"/></linearGradient><linearGradient id="g175" href="#gB"><stop offset=".0626" stop-color="#00a3ff"/><stop offset=".2397" stop-color="#0189ff"/><stop offset=".2763" stop-color="#3a82ff"/><stop offset=".3099" stop-color="#757aff"/><stop offset=".342" stop-color="#b572ff"/><stop offset=".3756" stop-color="#ff68fe"/><stop offset=".3893" stop-color="#ff58e1"/><stop offset=".4031" stop-color="#ff4bc8"/><stop offset=".4183" stop-color="#ff3fb1"/><stop offset=".4366" stop-color="#ff339a"/><stop offset=".4763" stop-color="#ff1f75"/><stop offset=".5237" stop-color="#ff0e56"/><stop offset=".5817" stop-color="#ff003c"/><stop offset=".6504" stop-color="#ff0027"/><stop offset=".7328" stop-color="#ff0015"/><stop offset=".8336" stop-color="#ff0006"/></linearGradient><linearGradient id="g176" href="#gB"><stop offset=".0641" stop-color="#009fff"/><stop offset=".2382" stop-color="#0085ff"/><stop offset=".2748" stop-color="#397eff"/><stop offset=".3099" stop-color="#7676ff"/><stop offset=".3435" stop-color="#b86dff"/><stop offset=".3756" stop-color="#ff64ff"/><stop offset=".3893" stop-color="#ff54e1"/><stop offset=".4031" stop-color="#ff48c9"/><stop offset=".4351" stop-color="#ff319d"/><stop offset=".4748" stop-color="#ff1d77"/><stop offset=".5221" stop-color="#ff0d58"/><stop offset=".574" stop-color="#ff0040"/><stop offset=".6458" stop-color="#ff0029"/><stop offset=".7267" stop-color="#ff0017"/><stop offset=".8244" stop-color="#ff0007"/></linearGradient><linearGradient id="g177" href="#gB"><stop offset=".0656" stop-color="#009cff"/><stop offset=".2366" stop-color="#0082ff"/><stop offset=".2733" stop-color="#387aff"/><stop offset=".3099" stop-color="#7772ff"/><stop offset=".3435" stop-color="#b969ff"/><stop offset=".3756" stop-color="#ff5fff"/><stop offset=".3893" stop-color="#ff51e2"/><stop offset=".4031" stop-color="#ff44c9"/><stop offset=".4351" stop-color="#ff2e9e"/><stop offset=".4733" stop-color="#ff1b79"/><stop offset=".5206" stop-color="#ff0b5a"/><stop offset=".5679" stop-color="#ff0043"/><stop offset=".6412" stop-color="#ff002b"/><stop offset=".7206" stop-color="#ff0018"/><stop offset=".8153" stop-color="#ff0009"/></linearGradient><linearGradient id="g178" href="#gB"><stop offset=".0656" stop-color="#0099ff"/><stop offset=".2366" stop-color="#017eff"/><stop offset=".2748" stop-color="#3b76ff"/><stop offset=".3099" stop-color="#786dff"/><stop offset=".3435" stop-color="#b965ff"/><stop offset=".3756" stop-color="#ff5bff"/><stop offset=".3893" stop-color="#ff4de2"/><stop offset=".4031" stop-color="#ff41ca"/><stop offset=".4351" stop-color="#ff2b9f"/><stop offset=".4733" stop-color="#ff197a"/><stop offset=".5191" stop-color="#ff0a5b"/><stop offset=".5603" stop-color="#ff0047"/><stop offset=".6382" stop-color="#ff002c"/><stop offset=".716" stop-color="#ff001a"/><stop offset=".8076" stop-color="#ff000b"/></linearGradient><linearGradient id="g179" href="#gB"><stop offset=".0672" stop-color="#0096ff"/><stop offset=".2351" stop-color="#007aff"/><stop offset=".2718" stop-color="#3873ff"/><stop offset=".3069" stop-color="#736aff"/><stop offset=".3374" stop-color="#ad62ff"/><stop offset=".3756" stop-color="#fe57ff"/><stop offset=".3771" stop-color="#ff55fc"/><stop offset=".3893" stop-color="#ff49e3"/><stop offset=".4031" stop-color="#ff3dcb"/><stop offset=".4351" stop-color="#ff289f"/><stop offset=".4733" stop-color="#ff177b"/><stop offset=".5176" stop-color="#ff095d"/><stop offset=".5527" stop-color="#ff004b"/><stop offset=".6336" stop-color="#ff002e"/><stop offset=".7084" stop-color="#ff001c"/><stop offset=".7985" stop-color="#ff000d"/></linearGradient><linearGradient id="g180" href="#gB"><stop offset=".0687" stop-color="#0092ff"/><stop offset=".2336" stop-color="#0077ff"/><stop offset=".2702" stop-color="#366fff"/><stop offset=".3069" stop-color="#7466ff"/><stop offset=".3389" stop-color="#b05dff"/><stop offset=".3756" stop-color="#fe52ff"/><stop offset=".3771" stop-color="#ff51fd"/><stop offset=".3893" stop-color="#ff45e4"/><stop offset=".4031" stop-color="#ff3acc"/><stop offset=".4351" stop-color="#ff26a0"/><stop offset=".4718" stop-color="#ff157d"/><stop offset=".516" stop-color="#ff075f"/><stop offset=".5466" stop-color="#ff004f"/><stop offset=".6305" stop-color="#ff0030"/><stop offset=".7038" stop-color="#ff001e"/><stop offset=".7908" stop-color="#ff000e"/></linearGradient><linearGradient id="g181" href="#gB"><stop offset=".0687" stop-color="#008fff"/><stop offset=".2321" stop-color="#0074ff"/><stop offset=".2672" stop-color="#336cff"/><stop offset=".3053" stop-color="#7263ff"/><stop offset=".3389" stop-color="#b059ff"/><stop offset=".3771" stop-color="#ff4dfd"/><stop offset=".3893" stop-color="#ff42e4"/><stop offset=".4031" stop-color="#ff37cc"/><stop offset=".4351" stop-color="#ff23a1"/><stop offset=".4718" stop-color="#ff137e"/><stop offset=".5145" stop-color="#ff0660"/><stop offset=".5389" stop-color="#ff0053"/><stop offset=".5802" stop-color="#ff0041"/><stop offset=".626" stop-color="#ff0032"/><stop offset=".6977" stop-color="#ff0020"/><stop offset=".7817" stop-color="#ff0010"/></linearGradient><linearGradient id="g182" href="#gB"><stop offset=".0702" stop-color="#008cff"/><stop offset=".2321" stop-color="#0170ff"/><stop offset=".2702" stop-color="#3968ff"/><stop offset=".3069" stop-color="#755eff"/><stop offset=".3405" stop-color="#b455ff"/><stop offset=".3771" stop-color="#ff49fe"/><stop offset=".4031" stop-color="#ff33cd"/><stop offset=".4336" stop-color="#ff21a4"/><stop offset=".4687" stop-color="#ff1281"/><stop offset=".5115" stop-color="#ff0563"/><stop offset=".5313" stop-color="#ff0058"/><stop offset=".574" stop-color="#ff0045"/><stop offset=".6214" stop-color="#ff0034"/><stop offset=".6901" stop-color="#ff0022"/><stop offset=".7725" stop-color="#ff0012"/></linearGradient><linearGradient id="g183" href="#gB"><stop offset=".0718" stop-color="#0089ff"/><stop offset=".2305" stop-color="#006dff"/><stop offset=".2702" stop-color="#3a64ff"/><stop offset=".3069" stop-color="#765bff"/><stop offset=".3405" stop-color="#b451ff"/><stop offset=".3771" stop-color="#ff45fe"/><stop offset=".4031" stop-color="#ff30ce"/><stop offset=".4336" stop-color="#ff1fa4"/><stop offset=".4687" stop-color="#ff1082"/><stop offset=".5099" stop-color="#ff0365"/><stop offset=".5237" stop-color="#ff005d"/><stop offset=".5588" stop-color="#ff004c"/><stop offset=".6168" stop-color="#ff0036"/><stop offset=".6855" stop-color="#ff0024"/><stop offset=".7649" stop-color="#ff0014"/></linearGradient><linearGradient id="g184" href="#gB"><stop offset=".0718" stop-color="#0086ff"/><stop offset=".229" stop-color="#006aff"/><stop offset=".2672" stop-color="#3761ff"/><stop offset=".3069" stop-color="#7757ff"/><stop offset=".342" stop-color="#b74dff"/><stop offset=".3771" stop-color="#ff41fe"/><stop offset=".4031" stop-color="#ff2dce"/><stop offset=".4321" stop-color="#ff1da7"/><stop offset=".4672" stop-color="#ff0e84"/><stop offset=".5084" stop-color="#ff0267"/><stop offset=".5557" stop-color="#ff004e"/><stop offset=".6122" stop-color="#ff0038"/><stop offset=".6779" stop-color="#ff0026"/><stop offset=".7557" stop-color="#ff0016"/></linearGradient><linearGradient id="g185" href="#gB"><stop offset=".0733" stop-color="#0083ff"/><stop offset=".229" stop-color="#0167ff"/><stop offset=".2687" stop-color="#3a5dff"/><stop offset=".3069" stop-color="#7853ff"/><stop offset=".3435" stop-color="#ba48ff"/><stop offset=".3771" stop-color="#ff3dff"/><stop offset=".4031" stop-color="#ff2acf"/><stop offset=".4321" stop-color="#ff1aa8"/><stop offset=".4656" stop-color="#ff0d86"/><stop offset=".5053" stop-color="#ff0169"/><stop offset=".5527" stop-color="#ff0050"/><stop offset=".6076" stop-color="#ff003b"/><stop offset=".6718" stop-color="#ff0028"/><stop offset=".7466" stop-color="#ff0019"/></linearGradient><linearGradient id="g186" href="#gB"><stop offset=".0748" stop-color="#007fff"/><stop offset=".2275" stop-color="#0064ff"/><stop offset=".2687" stop-color="#3b5aff"/><stop offset=".3069" stop-color="#7850ff"/><stop offset=".3435" stop-color="#ba45ff"/><stop offset=".3771" stop-color="#ff39ff"/><stop offset=".4015" stop-color="#ff28d2"/><stop offset=".4305" stop-color="#ff18aa"/><stop offset=".4641" stop-color="#ff0b88"/><stop offset=".5038" stop-color="#ff006b"/><stop offset=".5496" stop-color="#ff0052"/><stop offset=".6031" stop-color="#ff003d"/><stop offset=".6656" stop-color="#ff002a"/><stop offset=".7389" stop-color="#ff001b"/></linearGradient><linearGradient id="g187" href="#gB"><stop offset=".0763" stop-color="#007cff"/><stop offset=".226" stop-color="#0061ff"/><stop offset=".2656" stop-color="#3857ff"/><stop offset=".3038" stop-color="#744dff"/><stop offset=".3374" stop-color="#af43ff"/><stop offset=".3771" stop-color="#fe36ff"/><stop offset=".3786" stop-color="#ff35fc"/><stop offset=".4031" stop-color="#ff24d0"/><stop offset=".4321" stop-color="#ff15a9"/><stop offset=".4656" stop-color="#ff0888"/><stop offset=".5038" stop-color="#ff006c"/><stop offset=".5481" stop-color="#ff0054"/><stop offset=".6" stop-color="#ff003f"/><stop offset=".6595" stop-color="#ff002d"/><stop offset=".7298" stop-color="#ff001d"/></linearGradient><linearGradient id="g188" href="#gB"><stop offset=".0763" stop-color="#007aff"/><stop offset=".2244" stop-color="#005eff"/><stop offset=".2626" stop-color="#3455ff"/><stop offset=".3023" stop-color="#724aff"/><stop offset=".3374" stop-color="#af3fff"/><stop offset=".3771" stop-color="#fe32ff"/><stop offset=".3786" stop-color="#ff31fd"/><stop offset=".4031" stop-color="#ff21d1"/><stop offset=".4305" stop-color="#ff13ac"/><stop offset=".4626" stop-color="#ff078b"/><stop offset=".487" stop-color="#ff0078"/><stop offset=".5008" stop-color="#ff006f"/><stop offset=".545" stop-color="#ff0056"/><stop offset=".5954" stop-color="#ff0041"/><stop offset=".6534" stop-color="#ff002f"/><stop offset=".7221" stop-color="#ff001f"/></linearGradient><linearGradient id="g189" href="#gB"><stop offset=".0779" stop-color="#0076ff"/><stop offset=".2244" stop-color="#015bff"/><stop offset=".2656" stop-color="#3a50ff"/><stop offset=".3038" stop-color="#7546ff"/><stop offset=".3389" stop-color="#b33bff"/><stop offset=".3786" stop-color="#ff2dfd"/><stop offset=".4031" stop-color="#ff1ed1"/><stop offset=".4305" stop-color="#ff11ad"/><stop offset=".4534" stop-color="#ff0895"/><stop offset=".4794" stop-color="#ff007f"/><stop offset=".4992" stop-color="#ff0070"/><stop offset=".542" stop-color="#ff0058"/><stop offset=".5908" stop-color="#ff0043"/><stop offset=".6473" stop-color="#ff0031"/><stop offset=".713" stop-color="#ff0021"/></linearGradient><linearGradient id="g190" href="#gB"><stop offset=".0794" stop-color="#0073ff"/><stop offset=".2229" stop-color="#0058ff"/><stop offset=".2641" stop-color="#394eff"/><stop offset=".3038" stop-color="#7643ff"/><stop offset=".3389" stop-color="#b338ff"/><stop offset=".3786" stop-color="#ff2afe"/><stop offset=".4015" stop-color="#ff1cd4"/><stop offset=".429" stop-color="#ff0faf"/><stop offset=".4504" stop-color="#ff0798"/><stop offset=".4733" stop-color="#ff0084"/><stop offset=".4962" stop-color="#ff0073"/><stop offset=".5374" stop-color="#ff005b"/><stop offset=".5847" stop-color="#ff0046"/><stop offset=".6397" stop-color="#ff0034"/><stop offset=".7038" stop-color="#ff0024"/></linearGradient><linearGradient id="g191" href="#gB"><stop offset=".0809" stop-color="#0070ff"/><stop offset=".2214" stop-color="#0055ff"/><stop offset=".2626" stop-color="#384bff"/><stop offset=".3038" stop-color="#773fff"/><stop offset=".3405" stop-color="#b634ff"/><stop offset=".3786" stop-color="#ff26fe"/><stop offset=".4015" stop-color="#ff19d5"/><stop offset=".429" stop-color="#ff0cb0"/><stop offset=".4656" stop-color="#ff008b"/><stop offset=".4947" stop-color="#ff0075"/><stop offset=".5359" stop-color="#ff005d"/><stop offset=".5817" stop-color="#ff0048"/><stop offset=".6351" stop-color="#ff0036"/><stop offset=".6962" stop-color="#ff0026"/></linearGradient><linearGradient id="g192" href="#gB"><stop offset=".0809" stop-color="#006eff"/><stop offset=".2214" stop-color="#0152ff"/><stop offset=".2641" stop-color="#3b47ff"/><stop offset=".3038" stop-color="#773cff"/><stop offset=".3405" stop-color="#b631ff"/><stop offset=".3786" stop-color="#ff23fe"/><stop offset=".4015" stop-color="#ff16d6"/><stop offset=".4275" stop-color="#ff0ab2"/><stop offset=".4595" stop-color="#ff0091"/><stop offset=".4916" stop-color="#ff0078"/><stop offset=".5313" stop-color="#ff0060"/><stop offset=".5756" stop-color="#ff004b"/><stop offset=".6275" stop-color="#ff0039"/><stop offset=".687" stop-color="#ff0029"/></linearGradient><linearGradient id="g193" href="#gB"><stop offset=".0824" stop-color="#006bff"/><stop offset=".2198" stop-color="#014fff"/><stop offset=".2626" stop-color="#3a45ff"/><stop offset=".3038" stop-color="#7839ff"/><stop offset=".342" stop-color="#b92dff"/><stop offset=".3786" stop-color="#ff20ff"/><stop offset=".4015" stop-color="#ff13d6"/><stop offset=".4275" stop-color="#ff08b3"/><stop offset=".4519" stop-color="#ff0099"/><stop offset=".4901" stop-color="#ff007a"/><stop offset=".5282" stop-color="#ff0062"/><stop offset=".5725" stop-color="#ff004d"/><stop offset=".6229" stop-color="#ff003b"/><stop offset=".6794" stop-color="#ff002c"/></linearGradient><linearGradient id="g194" href="#gB"><stop offset=".084" stop-color="#0068ff"/><stop offset=".2183" stop-color="#004dff"/><stop offset=".2626" stop-color="#3b41ff"/><stop offset=".3038" stop-color="#7936ff"/><stop offset=".342" stop-color="#b929ff"/><stop offset=".3786" stop-color="#ff1cff"/><stop offset=".4015" stop-color="#ff10d7"/><stop offset=".426" stop-color="#ff06b5"/><stop offset=".4443" stop-color="#ff00a1"/><stop offset=".487" stop-color="#ff007d"/><stop offset=".5237" stop-color="#ff0066"/><stop offset=".5664" stop-color="#ff0051"/><stop offset=".6153" stop-color="#ff003e"/><stop offset=".6702" stop-color="#ff002e"/></linearGradient><linearGradient id="g195" href="#gB"><stop offset=".0855" stop-color="#0065ff"/><stop offset=".2168" stop-color="#004aff"/><stop offset=".2595" stop-color="#383fff"/><stop offset=".3023" stop-color="#7733ff"/><stop offset=".342" stop-color="#b926ff"/><stop offset=".3786" stop-color="#fe19ff"/><stop offset=".4015" stop-color="#ff0dd7"/><stop offset=".426" stop-color="#ff04b6"/><stop offset=".4366" stop-color="#ff00aa"/><stop offset=".4534" stop-color="#ff0099"/><stop offset=".4855" stop-color="#ff007f"/><stop offset=".5206" stop-color="#ff0068"/><stop offset=".5618" stop-color="#ff0053"/><stop offset=".6076" stop-color="#ff0042"/><stop offset=".6611" stop-color="#ff0032"/></linearGradient><linearGradient id="g196" href="#gB"><stop offset=".087" stop-color="#0062ff"/><stop offset=".2168" stop-color="#0147ff"/><stop offset=".2595" stop-color="#393cff"/><stop offset=".3008" stop-color="#7530ff"/><stop offset=".3374" stop-color="#b225ff"/><stop offset=".3802" stop-color="#ff15fd"/><stop offset=".4015" stop-color="#ff0bd8"/><stop offset=".426" stop-color="#ff01b7"/><stop offset=".4534" stop-color="#ff009a"/><stop offset=".484" stop-color="#ff0080"/><stop offset=".5191" stop-color="#ff006a"/><stop offset=".5588" stop-color="#ff0056"/><stop offset=".6031" stop-color="#ff0044"/><stop offset=".6534" stop-color="#ff0034"/></linearGradient><linearGradient id="g197" href="#gB"><stop offset=".0885" stop-color="#005fff"/><stop offset=".2153" stop-color="#0045ff"/><stop offset=".2595" stop-color="#3a39ff"/><stop offset=".3008" stop-color="#762dff"/><stop offset=".3374" stop-color="#b222ff"/><stop offset=".3802" stop-color="#ff12fd"/><stop offset=".4015" stop-color="#ff08d8"/><stop offset=".4244" stop-color="#ff00b9"/><stop offset=".4504" stop-color="#ff009d"/><stop offset=".4809" stop-color="#ff0083"/><stop offset=".5145" stop-color="#ff006d"/><stop offset=".5527" stop-color="#ff0059"/><stop offset=".5954" stop-color="#ff0047"/><stop offset=".6443" stop-color="#ff0037"/></linearGradient><linearGradient id="g198" href="#gB"><stop offset=".0885" stop-color="#005dff"/><stop offset=".2137" stop-color="#0042ff"/><stop offset=".258" stop-color="#3937ff"/><stop offset=".2992" stop-color="#742bff"/><stop offset=".3374" stop-color="#b21eff"/><stop offset=".3802" stop-color="#ff0ffe"/><stop offset=".4015" stop-color="#ff05d9"/><stop offset=".4244" stop-color="#ff00ba"/><stop offset=".4504" stop-color="#ff009e"/><stop offset=".4794" stop-color="#ff0085"/><stop offset=".513" stop-color="#ff006f"/><stop offset=".5496" stop-color="#ff005b"/><stop offset=".6366" stop-color="#ff003a"/></linearGradient><linearGradient id="g199" href="#gB"><stop offset=".0901" stop-color="#005aff"/><stop offset=".2137" stop-color="#013fff"/><stop offset=".258" stop-color="#3a34ff"/><stop offset=".3008" stop-color="#7727ff"/><stop offset=".3389" stop-color="#b51bff"/><stop offset=".3802" stop-color="#ff0cfe"/><stop offset=".4076" stop-color="#ff00d1"/><stop offset=".4229" stop-color="#ff00bc"/><stop offset=".4489" stop-color="#ff00a0"/><stop offset=".4763" stop-color="#ff0088"/><stop offset=".5084" stop-color="#ff0072"/><stop offset=".5435" stop-color="#ff005f"/><stop offset=".6275" stop-color="#ff003e"/></linearGradient><linearGradient id="g200" href="#gB"><stop offset=".0916" stop-color="#0057ff"/><stop offset=".2122" stop-color="#013dff"/><stop offset=".258" stop-color="#3b31ff"/><stop offset=".3008" stop-color="#7825ff"/><stop offset=".3405" stop-color="#b817ff"/><stop offset=".3802" stop-color="#ff09fe"/><stop offset=".4015" stop-color="#ff00da"/><stop offset=".4214" stop-color="#ff00bf"/><stop offset=".4458" stop-color="#ff00a4"/><stop offset=".4733" stop-color="#ff008c"/><stop offset=".5038" stop-color="#ff0076"/><stop offset=".5374" stop-color="#ff0063"/><stop offset=".6183" stop-color="#ff0041"/></linearGradient><linearGradient id="g201" href="#gB"><stop offset=".0931" stop-color="#0054ff"/><stop offset=".2107" stop-color="#003bff"/><stop offset=".2565" stop-color="#3a2fff"/><stop offset=".3008" stop-color="#7922ff"/><stop offset=".3405" stop-color="#b814ff"/><stop offset=".3802" stop-color="#ff06ff"/><stop offset=".3939" stop-color="#ff00e7"/><stop offset=".4214" stop-color="#ff00c0"/><stop offset=".4458" stop-color="#ff00a5"/><stop offset=".4718" stop-color="#ff008d"/><stop offset=".5008" stop-color="#ff0079"/><stop offset=".5344" stop-color="#ff0065"/><stop offset=".6107" stop-color="#ff0045"/></linearGradient><linearGradient id="g202" href="#gB"><stop offset=".0947" stop-color="#0051ff"/><stop offset=".2092" stop-color="#0038ff"/><stop offset=".255" stop-color="#392cff"/><stop offset=".2992" stop-color="#771fff"/><stop offset=".3405" stop-color="#b812ff"/><stop offset=".3802" stop-color="#ff03ff"/><stop offset=".3985" stop-color="#ff00e0"/><stop offset=".4198" stop-color="#ff00c2"/><stop offset=".4427" stop-color="#ff00a8"/><stop offset=".4687" stop-color="#ff0091"/><stop offset=".4962" stop-color="#ff007c"/><stop offset=".5282" stop-color="#ff0069"/><stop offset=".6015" stop-color="#ff0049"/></linearGradient><linearGradient id="g203" href="#gB"><stop offset=".0962" stop-color="#004fff"/><stop offset=".2092" stop-color="#0136ff"/><stop offset=".255" stop-color="#3a2aff"/><stop offset=".2992" stop-color="#781dff"/><stop offset=".3405" stop-color="#b80fff"/><stop offset=".3802" stop-color="#ff00ff"/><stop offset=".3985" stop-color="#ff00e0"/><stop offset=".4183" stop-color="#ff00c5"/><stop offset=".4412" stop-color="#ff00ab"/><stop offset=".4656" stop-color="#ff0094"/><stop offset=".5221" stop-color="#ff006d"/><stop offset=".5924" stop-color="#ff004d"/></linearGradient><linearGradient id="g204" href="#gB"><stop offset=".0977" stop-color="#004cff"/><stop offset=".2076" stop-color="#0034ff"/><stop offset=".2534" stop-color="#3927ff"/><stop offset=".2977" stop-color="#761aff"/><stop offset=".3359" stop-color="#b10eff"/><stop offset=".3725" stop-color="#f000ff"/><stop offset=".3817" stop-color="#ff00fd"/><stop offset=".3985" stop-color="#ff00e1"/><stop offset=".4183" stop-color="#ff00c5"/><stop offset=".4397" stop-color="#ff00ad"/><stop offset=".4641" stop-color="#ff0096"/><stop offset=".5191" stop-color="#ff006f"/><stop offset=".5847" stop-color="#ff0050"/></linearGradient><linearGradient id="g205" href="#gB"><stop offset=".0992" stop-color="#0049ff"/><stop offset=".2061" stop-color="#0031ff"/><stop offset=".2519" stop-color="#3825ff"/><stop offset=".2962" stop-color="#7418ff"/><stop offset=".3313" stop-color="#aa0cff"/><stop offset=".3649" stop-color="#e200ff"/><stop offset=".3817" stop-color="#ff00fd"/><stop offset=".3985" stop-color="#ff00e1"/><stop offset=".4183" stop-color="#ff00c6"/><stop offset=".4382" stop-color="#ff00af"/><stop offset=".4611" stop-color="#ff0099"/><stop offset=".513" stop-color="#ff0074"/><stop offset=".5756" stop-color="#ff0055"/></linearGradient><linearGradient id="g206" href="#gB"><stop offset=".0992" stop-color="#0047ff"/><stop offset=".2061" stop-color="#012fff"/><stop offset=".2534" stop-color="#3b22ff"/><stop offset=".2977" stop-color="#7715ff"/><stop offset=".3573" stop-color="#d500ff"/><stop offset=".3817" stop-color="#ff00fe"/><stop offset=".3985" stop-color="#ff00e2"/><stop offset=".4168" stop-color="#ff00c8"/><stop offset=".458" stop-color="#ff009d"/><stop offset=".5084" stop-color="#ff0077"/><stop offset=".5679" stop-color="#ff0058"/></linearGradient><linearGradient id="g207" href="#gB"><stop offset=".1008" stop-color="#0044ff"/><stop offset=".2046" stop-color="#012dff"/><stop offset=".2519" stop-color="#3a20ff"/><stop offset=".2977" stop-color="#7812ff"/><stop offset=".3511" stop-color="#cb00ff"/><stop offset=".3802" stop-color="#fd00ff"/><stop offset=".4168" stop-color="#ff00c9"/><stop offset=".455" stop-color="#ff00a0"/><stop offset=".5023" stop-color="#ff007c"/><stop offset=".5588" stop-color="#ff005d"/></linearGradient><linearGradient id="g208" href="#gB"><stop offset=".1023" stop-color="#0042ff"/><stop offset=".2031" stop-color="#002bff"/><stop offset=".2504" stop-color="#391eff"/><stop offset=".2962" stop-color="#7610ff"/><stop offset=".3435" stop-color="#be00ff"/><stop offset=".3802" stop-color="#fd00ff"/><stop offset=".3817" stop-color="#ff00fe"/><stop offset=".3985" stop-color="#ff00e3"/><stop offset=".4153" stop-color="#ff00cb"/><stop offset=".4519" stop-color="#ff00a3"/><stop offset=".4962" stop-color="#ff0080"/><stop offset=".5496" stop-color="#ff0062"/></linearGradient><linearGradient id="g209" href="#gB"><stop offset=".1038" stop-color="#003fff"/><stop offset=".2015" stop-color="#0029ff"/><stop offset=".2489" stop-color="#381cff"/><stop offset=".2962" stop-color="#770eff"/><stop offset=".3359" stop-color="#b200ff"/><stop offset=".3817" stop-color="#ff00ff"/><stop offset=".4122" stop-color="#ff00d0"/><stop offset=".4489" stop-color="#ff00a7"/><stop offset=".4916" stop-color="#ff0084"/><stop offset=".542" stop-color="#ff0067"/></linearGradient><linearGradient id="g210" href="#gB"><stop offset=".1053" stop-color="#003cff"/><stop offset=".2015" stop-color="#0126ff"/><stop offset=".2504" stop-color="#3b19ff"/><stop offset=".2962" stop-color="#770bff"/><stop offset=".3298" stop-color="#a900ff"/><stop offset=".3817" stop-color="#ff00ff"/><stop offset=".4107" stop-color="#ff00d2"/><stop offset=".4458" stop-color="#ff00ab"/><stop offset=".4855" stop-color="#ff0089"/><stop offset=".5328" stop-color="#ff006c"/></linearGradient><linearGradient id="g211" href="#gB"><stop offset=".1069" stop-color="#003aff"/><stop offset=".2" stop-color="#0124ff"/><stop offset=".2489" stop-color="#3a17ff"/><stop offset=".2962" stop-color="#7809ff"/><stop offset=".3221" stop-color="#9e00ff"/><stop offset=".3527" stop-color="#cd00ff"/><stop offset=".3817" stop-color="#ff00ff"/><stop offset=".4107" stop-color="#ff00d3"/><stop offset=".4427" stop-color="#ff00ae"/><stop offset=".4809" stop-color="#ff008d"/><stop offset=".5252" stop-color="#ff0071"/></linearGradient><linearGradient id="g212" href="#gB"><stop offset=".1084" stop-color="#0037ff"/><stop offset=".1985" stop-color="#0022ff"/><stop offset=".2489" stop-color="#3b15ff"/><stop offset=".2962" stop-color="#7906ff"/><stop offset=".3145" stop-color="#9300ff"/><stop offset=".3496" stop-color="#c800ff"/><stop offset=".3817" stop-color="#fe00ff"/><stop offset=".4092" stop-color="#ff00d5"/><stop offset=".4397" stop-color="#ff00b2"/><stop offset=".4748" stop-color="#ff0093"/><stop offset=".516" stop-color="#ff0077"/></linearGradient><linearGradient id="g213" href="#gB"><stop offset=".1099" stop-color="#0035ff"/><stop offset=".1985" stop-color="#0120ff"/><stop offset=".2489" stop-color="#3c12ff"/><stop offset=".2962" stop-color="#7904ff"/><stop offset=".3084" stop-color="#8a00ff"/><stop offset=".3405" stop-color="#ba00ff"/><stop offset=".3817" stop-color="#fe00ff"/><stop offset=".4092" stop-color="#ff00d6"/><stop offset=".4366" stop-color="#ff00b6"/><stop offset=".4702" stop-color="#ff0097"/><stop offset=".5069" stop-color="#ff007d"/></linearGradient><linearGradient id="g214" href="#gB"><stop offset=".1115" stop-color="#0032ff"/><stop offset=".1969" stop-color="#011eff"/><stop offset=".2473" stop-color="#3b10ff"/><stop offset=".2947" stop-color="#7802ff"/><stop offset=".3389" stop-color="#b800ff"/><stop offset=".3817" stop-color="#fe00ff"/><stop offset=".4092" stop-color="#ff00d6"/><stop offset=".4351" stop-color="#ff00b8"/><stop offset=".4656" stop-color="#ff009b"/><stop offset=".4992" stop-color="#ff0082"/></linearGradient><linearGradient id="g215" href="#gB"><stop offset=".113" stop-color="#0030ff"/><stop offset=".1954" stop-color="#001cff"/><stop offset=".2458" stop-color="#3a0eff"/><stop offset=".2947" stop-color="#7800ff"/><stop offset=".3389" stop-color="#b800ff"/><stop offset=".3817" stop-color="#fd00ff"/><stop offset=".4076" stop-color="#ff00d9"/><stop offset=".4321" stop-color="#ff00bc"/><stop offset=".4595" stop-color="#ff00a1"/><stop offset=".4901" stop-color="#ff0089"/></linearGradient><linearGradient id="g216" href="#gB"><stop offset=".1145" stop-color="#002dff"/><stop offset=".1939" stop-color="#001aff"/><stop offset=".2443" stop-color="#390dff"/><stop offset=".2931" stop-color="#7700ff"/><stop offset=".3389" stop-color="#b800ff"/><stop offset=".3817" stop-color="#fd00ff"/><stop offset=".4076" stop-color="#ff00d9"/><stop offset=".429" stop-color="#ff00bf"/><stop offset=".455" stop-color="#ff00a6"/><stop offset=".4824" stop-color="#ff008f"/></linearGradient><linearGradient id="g217" href="#gB"><stop offset=".116" stop-color="#002bff"/><stop offset=".1939" stop-color="#0118ff"/><stop offset=".2366" stop-color="#310dff"/><stop offset=".2779" stop-color="#6300ff"/><stop offset=".2931" stop-color="#7700ff"/><stop offset=".3389" stop-color="#b800ff"/><stop offset=".3832" stop-color="#ff00ff"/><stop offset=".4031" stop-color="#ff00e0"/><stop offset=".4244" stop-color="#ff00c5"/><stop offset=".4473" stop-color="#ff00ad"/><stop offset=".4733" stop-color="#ff0097"/></linearGradient><linearGradient id="g218" href="#gB"><stop offset=".1176" stop-color="#0028ff"/><stop offset=".1924" stop-color="#0116ff"/><stop offset=".2321" stop-color="#2c0cff"/><stop offset=".2702" stop-color="#5a00ff"/><stop offset=".2931" stop-color="#7800ff"/><stop offset=".3389" stop-color="#b900ff"/><stop offset=".3832" stop-color="#ff00ff"/><stop offset=".4" stop-color="#ff00e5"/><stop offset=".4198" stop-color="#ff00cb"/><stop offset=".4641" stop-color="#ff009f"/></linearGradient><linearGradient id="g219" href="#gB"><stop offset=".1191" stop-color="#0026ff"/><stop offset=".1908" stop-color="#0015ff"/><stop offset=".2641" stop-color="#5300ff"/><stop offset=".2931" stop-color="#7800ff"/><stop offset=".3389" stop-color="#b900ff"/><stop offset=".3832" stop-color="#ff00ff"/><stop offset=".4168" stop-color="#ff00cf"/><stop offset=".4565" stop-color="#ff00a6"/></linearGradient><linearGradient id="g220" href="#gB"><stop offset=".1206" stop-color="#0023ff"/><stop offset=".1908" stop-color="#0112ff"/><stop offset=".2565" stop-color="#4b00ff"/><stop offset=".2931" stop-color="#7900ff"/><stop offset=".3389" stop-color="#b900ff"/><stop offset=".3832" stop-color="#fe00ff"/><stop offset=".4137" stop-color="#ff00d4"/><stop offset=".4473" stop-color="#ff00af"/></linearGradient><linearGradient id="g221" href="#gB"><stop offset=".1221" stop-color="#0021ff"/><stop offset=".1893" stop-color="#0111ff"/><stop offset=".2489" stop-color="#4300ff"/><stop offset=".2916" stop-color="#7800ff"/><stop offset=".3389" stop-color="#b900ff"/><stop offset=".3832" stop-color="#fe00ff"/><stop offset=".4107" stop-color="#ff00d8"/><stop offset=".4382" stop-color="#ff00b9"/></linearGradient><linearGradient id="g222" href="#gB"><stop offset=".1252" stop-color="#001eff"/><stop offset=".1878" stop-color="#000fff"/><stop offset=".2427" stop-color="#3c00ff"/><stop offset=".2916" stop-color="#7800ff"/><stop offset=".3389" stop-color="#b900ff"/><stop offset=".3832" stop-color="#fe00ff"/><stop offset=".4076" stop-color="#ff00dc"/><stop offset=".4305" stop-color="#ff00c1"/></linearGradient><linearGradient id="g223" href="#gB"><stop offset=".1267" stop-color="#001cff"/><stop offset=".1863" stop-color="#000dff"/><stop offset=".2351" stop-color="#3400ff"/><stop offset=".2901" stop-color="#7700ff"/><stop offset=".3374" stop-color="#b700ff"/><stop offset=".3832" stop-color="#fd00ff"/><stop offset=".4214" stop-color="#ff00cc"/></linearGradient><linearGradient id="g224" href="#gB"><stop offset=".1282" stop-color="#001aff"/><stop offset=".1863" stop-color="#010bff"/><stop offset=".2275" stop-color="#2d00ff"/><stop offset=".2901" stop-color="#7700ff"/><stop offset=".3374" stop-color="#b700ff"/><stop offset=".3832" stop-color="#fd00ff"/><stop offset=".4137" stop-color="#ff00d5"/></linearGradient><linearGradient id="g225" href="#gB"><stop offset=".1298" stop-color="#0017ff"/><stop offset=".1847" stop-color="#010aff"/><stop offset=".2214" stop-color="#2700ff"/><stop offset=".2901" stop-color="#7800ff"/><stop offset=".3374" stop-color="#b800ff"/><stop offset=".3832" stop-color="#fd00ff"/><stop offset=".4046" stop-color="#ff00e2"/></linearGradient><linearGradient id="g226" href="#gB"><stop offset=".1313" stop-color="#0015ff"/><stop offset=".1832" stop-color="#0008ff"/><stop offset=".2137" stop-color="#2000ff"/><stop offset=".2901" stop-color="#7800ff"/><stop offset=".3389" stop-color="#ba00ff"/><stop offset=".3847" stop-color="#ff00ff"/><stop offset=".3954" stop-color="#ff00ef"/></linearGradient><linearGradient id="g227" href="#gB"><stop offset=".1344" stop-color="#0012ff"/><stop offset=".1817" stop-color="#0007ff"/><stop offset=".1893" stop-color="#0705ff"/><stop offset=".2061" stop-color="#1900ff"/><stop offset=".2473" stop-color="#4600ff"/><stop offset=".287" stop-color="#7500ff"/><stop offset=".3374" stop-color="#b800ff"/><stop offset=".3847" stop-color="#ff00ff"/><stop offset=".3878" stop-color="#ff00fa"/></linearGradient><linearGradient id="g228" href="#gB"><stop offset=".1359" stop-color="#0010ff"/><stop offset=".1802" stop-color="#0005ff"/><stop offset=".1924" stop-color="#0c02ff"/><stop offset=".2427" stop-color="#4100ff"/><stop offset=".2901" stop-color="#7900ff"/><stop offset=".3359" stop-color="#b600ff"/><stop offset=".3786" stop-color="#f500ff"/></linearGradient><linearGradient id="g229" href="#gB"><stop offset=".1374" stop-color="#000eff"/><stop offset=".1786" stop-color="#0003ff"/><stop offset=".1893" stop-color="#0a01ff"/><stop offset=".2382" stop-color="#3d00ff"/><stop offset=".2855" stop-color="#7400ff"/><stop offset=".3298" stop-color="#ae00ff"/><stop offset=".371" stop-color="#e900ff"/></linearGradient><linearGradient id="g230" href="#gB"><stop offset=".1405" stop-color="#000bff"/><stop offset=".1786" stop-color="#0002ff"/><stop offset=".1878" stop-color="#0900ff"/><stop offset=".2351" stop-color="#3a00ff"/><stop offset=".2794" stop-color="#6d00ff"/><stop offset=".3221" stop-color="#a400ff"/><stop offset=".3618" stop-color="#db00ff"/></linearGradient><linearGradient id="g231" href="#gB"><stop offset=".142" stop-color="#0009ff"/><stop offset=".1771" stop-color="#0000ff"/><stop offset=".1832" stop-color="#0600ff"/><stop offset=".229" stop-color="#3500ff"/><stop offset=".2718" stop-color="#6500ff"/><stop offset=".313" stop-color="#9800ff"/><stop offset=".3527" stop-color="#ce00ff"/></linearGradient><linearGradient id="g232" href="#gB"><stop offset=".1435" stop-color="#0007ff"/><stop offset=".1756" stop-color="#0000ff"/><stop offset=".1802" stop-color="#0400ff"/><stop offset=".2244" stop-color="#3100ff"/><stop offset=".2656" stop-color="#5e00ff"/><stop offset=".3069" stop-color="#9000ff"/><stop offset=".345" stop-color="#c300ff"/></linearGradient><linearGradient id="g233" href="#gB"><stop offset=".1466" stop-color="#0004ff"/><stop offset=".174" stop-color="#0000ff"/><stop offset=".1817" stop-color="#0600ff"/><stop offset=".2626" stop-color="#5b00ff"/><stop offset=".3359" stop-color="#b700ff"/></linearGradient><linearGradient id="g234" href="#gB"><stop offset=".1481" stop-color="#0002ff"/><stop offset=".174" stop-color="#0000ff"/><stop offset=".1802" stop-color="#0600ff"/><stop offset=".2565" stop-color="#5500ff"/><stop offset=".3282" stop-color="#ad00ff"/></linearGradient><linearGradient id="g235" href="#gB"><stop offset=".1511" stop-color="#0000ff"/><stop offset=".1725" stop-color="#0000ff"/><stop offset=".1817" stop-color="#0800ff"/><stop offset=".2534" stop-color="#5200ff"/><stop offset=".3191" stop-color="#a100ff"/></linearGradient><linearGradient id="g236" href="#gB"><stop offset=".1542" stop-color="#0000ff"/><stop offset=".171" stop-color="#0000ff"/><stop offset=".1847" stop-color="#0c00ff"/><stop offset=".2489" stop-color="#4e00ff"/><stop offset=".3099" stop-color="#9600ff"/></linearGradient><linearGradient id="g237" href="#gB"><stop offset=".1573" stop-color="#0000ff"/><stop offset=".171" stop-color="#0000ff"/><stop offset=".1908" stop-color="#1300ff"/><stop offset=".2489" stop-color="#4f00ff"/><stop offset=".3023" stop-color="#8d00ff"/></linearGradient><linearGradient id="g238" href="#gB"><stop offset=".1588" stop-color="#0000ff"/><stop offset=".1695" stop-color="#0000ff"/><stop offset=".1924" stop-color="#1500ff"/><stop offset=".2443" stop-color="#4a00ff"/><stop offset=".2931" stop-color="#8200ff"/></linearGradient><linearGradient id="g239" href="#gB"><stop offset=".1618" stop-color="#0000ff"/><stop offset=".1695" stop-color="#0100ff"/><stop offset=".2" stop-color="#1e00ff"/><stop offset=".284" stop-color="#7800ff"/></linearGradient><linearGradient id="g240" href="#gB"><stop offset=".1664" stop-color="#0000ff"/><stop offset=".2183" stop-color="#3100ff"/><stop offset=".2763" stop-color="#6f00ff"/></linearGradient><linearGradient id="g241" href="#gB"><stop offset=".1695" stop-color="#0300ff"/><stop offset=".2198" stop-color="#3300ff"/><stop offset=".2672" stop-color="#6500ff"/></linearGradient><linearGradient id="g242" href="#gB"><stop offset=".174" stop-color="#0800ff"/><stop offset=".2595" stop-color="#5e00ff"/></linearGradient><linearGradient id="g243" href="#gB"><stop offset=".1786" stop-color="#0d00ff"/><stop offset=".2504" stop-color="#5400ff"/></linearGradient><linearGradient id="g244" href="#gB"><stop offset=".1832" stop-color="#1200ff"/><stop offset=".2412" stop-color="#4b00ff"/></linearGradient><linearGradient id="g245" href="#gB"><stop offset=".1878" stop-color="#1800ff"/><stop offset=".2336" stop-color="#4400ff"/></linearGradient><linearGradient id="g246" href="#gB"><stop offset=".1908" stop-color="#1b00ff"/><stop offset=".2244" stop-color="#3c00ff"/></linearGradient><linearGradient id="g247" href="#gB"><stop offset=".1954" stop-color="#2000ff"/><stop offset=".2168" stop-color="#3500ff"/></linearGradient><clipPath id="lc"><path d="M1189.96 573.84 1189.94 573.84 1189.93 573.83 1189.92 573.83 1189.9 573.82 1189.88 573.83 1189.85 573.84 1189.82 573.85 1189.79 573.86 1189.75 573.86 1189.72 573.87 1189.68 573.86 1189.64 573.85 1189.6 573.85 1189.57 573.85 1189.53 573.86 1189.49 573.88 1189.46 573.9 1189.42 573.91 1189.39 573.93 1189.36 573.94 1189.32 573.94 1189.28 573.95 1189.23 573.95 1189.17 573.95 1189.11 573.95 1189.04 573.95 1188.97 573.94 1188.9 573.93 1188.83 573.93 1188.76 573.93 1188.7 573.94 1188.62 573.94 1188.55 573.93 1188.47 573.93 1188.38 573.91 1188.3 573.9 1188.22 573.88 1188.11 573.85 1187.99 573.81 1187.85 573.75 1187.7 573.69 1187.53 573.62 1187.36 573.53 1187.18 573.44 1186.99 573.34 1186.8 573.23 1186.59 573.11 1186.37 572.98 1186.14 572.84 1185.89 572.68 1185.61 572.51 1185.32 572.33 1185.01 572.13 1184.68 571.92 1184.34 571.69 1184 571.45 1183.63 571.19 1183.25 570.91 1182.84 570.62 1182.41 570.32 1181.96 570 1181.48 569.67 1180.97 569.32 1180.42 568.96 1179.84 568.56 1179.22 568.15 1178.56 567.7 1177.87 567.24 1177.14 566.74 1176.37 566.23 1175.56 565.69 1174.72 565.12 1173.84 564.53 1172.93 563.9 1171.97 563.22 1170.96 562.5 1169.91 561.72 1168.81 560.9 1167.67 560.01 1166.5 559.06 1165.29 558.05 1164.04 556.97 1162.74 555.78 1161.37 554.47 1159.92 552.99 1158.37 551.31 1156.71 549.41 1154.93 547.27 1153.04 544.9 1151.06 542.29 1149 539.43 1146.85 536.3 1144.6 532.86 1142.24 529.09 1139.76 524.95 1137.17 520.38 1134.46 515.38 1131.62 509.92 1128.65 503.99 1125.53 497.56 1122.25 490.63 1118.82 483.14 1115.27 475.04 1111.63 466.32 1107.95 456.95 1104.29 446.95 1100.65 436.33 1097.03 425.08 1093.42 413.19 1089.81 400.67 1086.21 387.53 1082.66 373.85 1079.21 359.7 1075.89 345.17 1072.75 330.37 1069.83 315.42 1067.16 300.37 1064.76 285.29 1062.65 270.25 1060.85 255.31 1059.39 240.59 1058.29 226.23 1057.6 212.3 1057.33 198.83 1057.5 185.81 1058.11 173.22 1059.18 161.15 1060.71 149.67 1062.75 138.88 1065.29 128.86 1068.32 119.65 1071.81 111.28 1075.72 103.83 1080.03 97.37 1084.73 91.95 1089.77 87.54 1095.09 84.09 1100.66 81.55 1106.4 79.85 1112.31 78.94 1118.34 78.76 1124.47 79.24 1130.7 80.26 1136.98 81.7 1143.32 83.47 1149.69 85.52 1156.06 87.82 1162.41 90.3 1168.69 92.91 1174.87 95.62 1180.95 98.38 1186.94 101.2 1192.87 104.08 1198.73 107.04 1204.56 110.09 1210.34 113.21 1216.08 116.4 1221.79 119.66 1227.48 122.99 1233.14 126.39 1238.8 129.86 1244.44 133.39 1250.06 136.97 1255.67 140.61 1261.27 144.31 1266.86 148.05 1272.44 151.83 1278.01 155.66 1283.58 159.52 1289.15 163.42 1294.72 167.36 1300.28 171.33 1305.85 175.33 1311.41 179.35 1316.97 183.4 1322.53 187.47 1328.09 191.57 1333.66 195.68 1339.22 199.8 1344.77 203.94 1350.33 208.09 1355.88 212.25 1361.43 216.41 1366.96 220.57 1372.5 224.75 1378.02 228.92 1383.53 233.09 1389.03 237.26 1394.51 241.42 1399.98 245.58 1405.43 249.73 1410.86 253.87 1416.26 257.99 1421.64 262.1 1426.99 266.19 1432.31 270.26 1437.59 274.3 1442.84 278.32 1448.05 282.3 1453.21 286.26 1458.34 290.17 1463.42 294.06 1468.45 297.9 1473.42 301.7 1478.34 305.46 1483.2 309.17 1488 312.82 1492.72 316.43 1497.38 319.99 1501.97 323.49 1506.48 326.95 1510.91 330.34 1515.25 333.67 1519.48 336.91 1523.58 340.05 1527.55 343.09 1531.4 346.03 1535.13 348.88 1538.77 351.67 1542.33 354.39 1545.82 357.05 1549.23 359.66 1552.54 362.19 1555.74 364.63 1558.83 366.98 1561.78 369.23 1564.61 371.39 1567.33 373.46 1569.95 375.45 1572.46 377.36 1574.88 379.21 1577.21 380.98 1579.43 382.69 1581.56 384.32 1583.6 385.88 1585.55 387.37 1587.41 388.8 1589.18 390.15 1590.87 391.45 1592.49 392.69 1594.03 393.87 1595.51 395 1596.93 396.07 1598.28 397.1 1599.57 398.09 1600.81 399.03 1601.99 399.93 1603.12 400.79 1604.21 401.63 1605.26 402.43 1606.28 403.21 1607.27 403.97 1608.22 404.7 1609.14 405.4 1610.02 406.07 1610.86 406.72 1611.67 407.34 1612.45 407.94 1613.19 408.51 1613.91 409.05 1614.59 409.58 1615.25 410.08 1615.87 410.56 1616.46 411.01 1617.02 411.43 1617.54 411.83 1618.03 412.2 1618.48 412.55 1618.91 412.88 1619.32 413.19 1619.71 413.49 1620.09 413.78 1620.44 414.05 1620.78 414.31 1621.1 414.55 1621.39 414.78 1621.68 415 1621.94 415.2 1622.19 415.39 1622.42 415.56 1622.62 415.72 1622.81 415.87 1622.98 416 1623.14 416.12 1623.29 416.23 1623.44 416.35 1623.58 416.46 1623.72 416.57 1623.86 416.67 1623.99 416.77 1624.11 416.87 1624.23 416.96 1624.34 417.04 1624.45 417.12 1624.56 417.21 1624.66 417.29 1624.77 417.37 1624.88 417.46 1624.99 417.54 1625.1 417.62 1625.2 417.7 1625.31 417.78 1625.41 417.86 1625.5 417.93 1625.59 418 1625.66 418.06 1625.72 418.1 1625.77 418.14 1625.82 418.17 1625.86 418.2 1625.89 418.23 1625.93 418.26 1625.96 418.28 1625.99 418.31 1626.01 418.32 1626.04 418.34 1626.06 418.36 1626.08 418.37 1626.09 418.38 1626.09 418.38Z"/></clipPath></defs>
<g clip-path="url(#lc)"><rect x="1104" y="78" width="27" height="2" fill="url(#g0)"/><rect x="1098" y="80" width="42" height="2" fill="url(#g1)"/><rect x="1094" y="82" width="52" height="2" fill="url(#g2)"/><rect x="1091" y="84" width="62" height="2" fill="url(#g3)"/><rect x="1088" y="86" width="70" height="2" fill="url(#g4)"/><rect x="1085" y="88" width="78" height="2" fill="url(#g5)"/><rect x="1083" y="90" width="85" height="2" fill="url(#g6)"/><rect x="1081" y="92" width="92" height="2" fill="url(#g7)"/><rect x="1080" y="94" width="97" height="2" fill="url(#g8)"/><rect x="1078" y="96" width="104" height="2" fill="url(#g9)"/><rect x="1077" y="98" width="109" height="2" fill="url(#g10)"/><rect x="1075" y="100" width="115" height="2" fill="url(#g11)"/><rect x="1074" y="102" width="120" height="2" fill="url(#g12)"/><rect x="1073" y="104" width="125" height="2" fill="url(#g13)"/><rect x="1072" y="106" width="130" height="2" fill="url(#g14)"/><rect x="1071" y="108" width="135" height="2" fill="url(#g15)"/><rect x="1070" y="110" width="140" height="2" fill="url(#g16)"/><rect x="1069" y="112" width="144" height="2" fill="url(#g17)"/><rect x="1068" y="114" width="149" height="2" fill="url(#g18)"/><rect x="1068" y="116" width="152" height="2" fill="url(#g19)"/><rect x="1067" y="118" width="157" height="2" fill="url(#g20)"/><rect x="1066" y="120" width="161" height="2" fill="url(#g21)"/><rect x="1065" y="122" width="166" height="2" fill="url(#g22)"/><rect x="1065" y="124" width="169" height="2" fill="url(#g23)"/><rect x="1064" y="126" width="173" height="2" fill="url(#g24)"/><rect x="1064" y="128" width="177" height="2" fill="url(#g25)"/><rect x="1063" y="130" width="181" height="2" fill="url(#g26)"/><rect x="1062" y="132" width="185" height="2" fill="url(#g27)"/><rect x="1062" y="134" width="188" height="2" fill="url(#g28)"/><rect x="1061" y="136" width="192" height="2" fill="url(#g29)"/><rect x="1061" y="138" width="195" height="2" fill="url(#g30)"/><rect x="1061" y="140" width="198" height="2" fill="url(#g31)"/><rect x="1060" y="142" width="202" height="2" fill="url(#g32)"/><rect x="1060" y="144" width="205" height="2" fill="url(#g33)"/><rect x="1060" y="146" width="208" height="2" fill="url(#g34)"/><rect x="1059" y="148" width="212" height="2" fill="url(#g35)"/><rect x="1059" y="150" width="215" height="2" fill="url(#g36)"/><rect x="1059" y="152" width="218" height="2" fill="url(#g37)"/><rect x="1058" y="154" width="222" height="2" fill="url(#g38)"/><rect x="1058" y="156" width="225" height="2" fill="url(#g39)"/><rect x="1058" y="158" width="228" height="2" fill="url(#g40)"/><rect x="1058" y="160" width="231" height="2" fill="url(#g41)"/><rect x="1057" y="162" width="234" height="2" fill="url(#g42)"/><rect x="1057" y="164" width="237" height="2" fill="url(#g43)"/><rect x="1057" y="166" width="240" height="2" fill="url(#g44)"/><rect x="1057" y="168" width="243" height="2" fill="url(#g45)"/><rect x="1057" y="170" width="246" height="2" fill="url(#g46)"/><rect x="1057" y="172" width="248" height="2" fill="url(#g47)"/><rect x="1056" y="174" width="252" height="2" fill="url(#g48)"/><rect x="1056" y="176" width="255" height="2" fill="url(#g49)"/><rect x="1056" y="178" width="258" height="2" fill="url(#g50)"/><rect x="1056" y="180" width="261" height="2" fill="url(#g51)"/><rect x="1056" y="182" width="263" height="2" fill="url(#g52)"/><rect x="1056" y="184" width="266" height="2" fill="url(#g53)"/><rect x="1056" y="186" width="269" height="2" fill="url(#g54)"/><rect x="1056" y="188" width="271" height="2" fill="url(#g55)"/><rect x="1056" y="190" width="274" height="2" fill="url(#g56)"/><rect x="1056" y="192" width="277" height="2" fill="url(#g57)"/><rect x="1056" y="194" width="280" height="2" fill="url(#g58)"/><rect x="1056" y="196" width="282" height="2" fill="url(#g59)"/><rect x="1056" y="198" width="285" height="2" fill="url(#g60)"/><rect x="1056" y="200" width="288" height="2" fill="url(#g61)"/><rect x="1056" y="202" width="290" height="2" fill="url(#g62)"/><rect x="1056" y="204" width="293" height="2" fill="url(#g63)"/><rect x="1056" y="206" width="296" height="2" fill="url(#g64)"/><rect x="1056" y="208" width="298" height="2" fill="url(#g65)"/><rect x="1056" y="210" width="301" height="2" fill="url(#g66)"/><rect x="1056" y="212" width="304" height="2" fill="url(#g67)"/><rect x="1056" y="214" width="306" height="2" fill="url(#g68)"/><rect x="1056" y="216" width="309" height="2" fill="url(#g69)"/><rect x="1056" y="218" width="312" height="2" fill="url(#g70)"/><rect x="1056" y="220" width="314" height="2" fill="url(#g71)"/><rect x="1057" y="222" width="316" height="2" fill="url(#g72)"/><rect x="1057" y="224" width="319" height="2" fill="url(#g73)"/><rect x="1057" y="226" width="321" height="2" fill="url(#g74)"/><rect x="1057" y="228" width="324" height="2" fill="url(#g75)"/><rect x="1057" y="230" width="327" height="2" fill="url(#g76)"/><rect x="1057" y="232" width="329" height="2" fill="url(#g77)"/><rect x="1057" y="234" width="332" height="2" fill="url(#g78)"/><rect x="1058" y="236" width="334" height="2" fill="url(#g79)"/><rect x="1058" y="238" width="336" height="2" fill="url(#g80)"/><rect x="1058" y="240" width="339" height="2" fill="url(#g81)"/><rect x="1058" y="242" width="341" height="2" fill="url(#g82)"/><rect x="1058" y="244" width="344" height="2" fill="url(#g83)"/><rect x="1058" y="246" width="347" height="2" fill="url(#g84)"/><rect x="1059" y="248" width="348" height="2" fill="url(#g85)"/><rect x="1059" y="250" width="351" height="2" fill="url(#g86)"/><rect x="1059" y="252" width="354" height="2" fill="url(#g87)"/><rect x="1059" y="254" width="356" height="2" fill="url(#g88)"/><rect x="1059" y="256" width="359" height="2" fill="url(#g89)"/><rect x="1060" y="258" width="360" height="2" fill="url(#g90)"/><rect x="1060" y="260" width="363" height="2" fill="url(#g91)"/><rect x="1060" y="262" width="366" height="2" fill="url(#g92)"/><rect x="1060" y="264" width="368" height="2" fill="url(#g93)"/><rect x="1061" y="266" width="370" height="2" fill="url(#g94)"/><rect x="1061" y="268" width="372" height="2" fill="url(#g95)"/><rect x="1061" y="270" width="375" height="2" fill="url(#g96)"/><rect x="1061" y="272" width="378" height="2" fill="url(#g97)"/><rect x="1062" y="274" width="379" height="2" fill="url(#g98)"/><rect x="1062" y="276" width="382" height="2" fill="url(#g99)"/><rect x="1062" y="278" width="385" height="2" fill="url(#g100)"/><rect x="1063" y="280" width="386" height="2" fill="url(#g101)"/><rect x="1063" y="282" width="389" height="2" fill="url(#g102)"/><rect x="1063" y="284" width="391" height="2" fill="url(#g103)"/><rect x="1063" y="286" width="394" height="2" fill="url(#g104)"/><rect x="1064" y="288" width="396" height="2" fill="url(#g105)"/><rect x="1064" y="290" width="398" height="2" fill="url(#g106)"/><rect x="1064" y="292" width="401" height="2" fill="url(#g107)"/><rect x="1065" y="294" width="402" height="2" fill="url(#g108)"/><rect x="1065" y="296" width="405" height="2" fill="url(#g109)"/><rect x="1065" y="298" width="408" height="2" fill="url(#g110)"/><rect x="1066" y="300" width="409" height="2" fill="url(#g111)"/><rect x="1066" y="302" width="412" height="2" fill="url(#g112)"/><rect x="1066" y="304" width="415" height="2" fill="url(#g113)"/><rect x="1067" y="306" width="416" height="2" fill="url(#g114)"/><rect x="1067" y="308" width="419" height="2" fill="url(#g115)"/><rect x="1067" y="310" width="421" height="2" fill="url(#g116)"/><rect x="1068" y="312" width="423" height="2" fill="url(#g117)"/><rect x="1068" y="314" width="426" height="2" fill="url(#g118)"/><rect x="1068" y="316" width="428" height="2" fill="url(#g119)"/><rect x="1069" y="318" width="430" height="2" fill="url(#g120)"/><rect x="1069" y="320" width="433" height="2" fill="url(#g121)"/><rect x="1070" y="322" width="434" height="2" fill="url(#g122)"/><rect x="1070" y="324" width="437" height="2" fill="url(#g123)"/><rect x="1070" y="326" width="439" height="2" fill="url(#g124)"/><rect x="1071" y="328" width="441" height="2" fill="url(#g125)"/><rect x="1071" y="330" width="444" height="2" fill="url(#g126)"/><rect x="1072" y="332" width="445" height="2" fill="url(#g127)"/><rect x="1072" y="334" width="448" height="2" fill="url(#g128)"/><rect x="1072" y="336" width="450" height="2" fill="url(#g129)"/><rect x="1073" y="338" width="452" height="2" fill="url(#g130)"/><rect x="1073" y="340" width="455" height="2" fill="url(#g131)"/><rect x="1074" y="342" width="456" height="2" fill="url(#g132)"/><rect x="1074" y="344" width="459" height="2" fill="url(#g133)"/><rect x="1075" y="346" width="460" height="2" fill="url(#g134)"/><rect x="1075" y="348" width="463" height="2" fill="url(#g135)"/><rect x="1075" y="350" width="466" height="2" fill="url(#g136)"/><rect x="1076" y="352" width="467" height="2" fill="url(#g137)"/><rect x="1076" y="354" width="470" height="2" fill="url(#g138)"/><rect x="1077" y="356" width="472" height="2" fill="url(#g139)"/><rect x="1077" y="358" width="474" height="2" fill="url(#g140)"/><rect x="1078" y="360" width="476" height="2" fill="url(#g141)"/><rect x="1078" y="362" width="478" height="2" fill="url(#g142)"/><rect x="1079" y="364" width="480" height="2" fill="url(#g143)"/><rect x="1079" y="366" width="483" height="2" fill="url(#g144)"/><rect x="1080" y="368" width="484" height="2" fill="url(#g145)"/><rect x="1080" y="370" width="487" height="2" fill="url(#g146)"/><rect x="1081" y="372" width="489" height="2" fill="url(#g147)"/><rect x="1081" y="374" width="491" height="2" fill="url(#g148)"/><rect x="1082" y="376" width="493" height="2" fill="url(#g149)"/><rect x="1082" y="378" width="495" height="2" fill="url(#g150)"/><rect x="1083" y="380" width="497" height="2" fill="url(#g151)"/><rect x="1083" y="382" width="500" height="2" fill="url(#g152)"/><rect x="1084" y="384" width="501" height="2" fill="url(#g153)"/><rect x="1084" y="386" width="504" height="2" fill="url(#g154)"/><rect x="1085" y="388" width="505" height="2" fill="url(#g155)"/><rect x="1085" y="390" width="508" height="2" fill="url(#g156)"/><rect x="1086" y="392" width="510" height="2" fill="url(#g157)"/><rect x="1086" y="394" width="512" height="2" fill="url(#g158)"/><rect x="1087" y="396" width="514" height="2" fill="url(#g159)"/><rect x="1088" y="398" width="516" height="2" fill="url(#g160)"/><rect x="1088" y="400" width="518" height="2" fill="url(#g161)"/><rect x="1089" y="402" width="520" height="2" fill="url(#g162)"/><rect x="1089" y="404" width="522" height="2" fill="url(#g163)"/><rect x="1090" y="406" width="524" height="2" fill="url(#g164)"/><rect x="1090" y="408" width="527" height="2" fill="url(#g165)"/><rect x="1091" y="410" width="528" height="2" fill="url(#g166)"/><rect x="1092" y="412" width="530" height="2" fill="url(#g167)"/><rect x="1092" y="414" width="532" height="2" fill="url(#g168)"/><rect x="1093" y="416" width="534" height="2" fill="url(#g169)"/><rect x="1093" y="418" width="534" height="2" fill="url(#g170)"/><rect x="1094" y="420" width="529" height="2" fill="url(#g171)"/><rect x="1095" y="422" width="522" height="2" fill="url(#g172)"/><rect x="1095" y="424" width="517" height="2" fill="url(#g173)"/><rect x="1096" y="426" width="510" height="2" fill="url(#g174)"/><rect x="1096" y="428" width="505" height="2" fill="url(#g175)"/><rect x="1097" y="430" width="498" height="2" fill="url(#g176)"/><rect x="1098" y="432" width="491" height="2" fill="url(#g177)"/><rect x="1098" y="434" width="486" height="2" fill="url(#g178)"/><rect x="1099" y="436" width="479" height="2" fill="url(#g179)"/><rect x="1100" y="438" width="473" height="2" fill="url(#g180)"/><rect x="1100" y="440" width="467" height="2" fill="url(#g181)"/><rect x="1101" y="442" width="460" height="2" fill="url(#g182)"/><rect x="1102" y="444" width="454" height="2" fill="url(#g183)"/><rect x="1102" y="446" width="448" height="2" fill="url(#g184)"/><rect x="1103" y="448" width="441" height="2" fill="url(#g185)"/><rect x="1104" y="450" width="435" height="2" fill="url(#g186)"/><rect x="1105" y="452" width="428" height="2" fill="url(#g187)"/><rect x="1105" y="454" width="423" height="2" fill="url(#g188)"/><rect x="1106" y="456" width="416" height="2" fill="url(#g189)"/><rect x="1107" y="458" width="409" height="2" fill="url(#g190)"/><rect x="1108" y="460" width="403" height="2" fill="url(#g191)"/><rect x="1108" y="462" width="397" height="2" fill="url(#g192)"/><rect x="1109" y="464" width="391" height="2" fill="url(#g193)"/><rect x="1110" y="466" width="384" height="2" fill="url(#g194)"/><rect x="1111" y="468" width="377" height="2" fill="url(#g195)"/><rect x="1112" y="470" width="371" height="2" fill="url(#g196)"/><rect x="1113" y="472" width="364" height="2" fill="url(#g197)"/><rect x="1113" y="474" width="359" height="2" fill="url(#g198)"/><rect x="1114" y="476" width="352" height="2" fill="url(#g199)"/><rect x="1115" y="478" width="345" height="2" fill="url(#g200)"/><rect x="1116" y="480" width="339" height="2" fill="url(#g201)"/><rect x="1117" y="482" width="332" height="2" fill="url(#g202)"/><rect x="1118" y="484" width="325" height="2" fill="url(#g203)"/><rect x="1119" y="486" width="319" height="2" fill="url(#g204)"/><rect x="1120" y="488" width="312" height="2" fill="url(#g205)"/><rect x="1120" y="490" width="307" height="2" fill="url(#g206)"/><rect x="1121" y="492" width="300" height="2" fill="url(#g207)"/><rect x="1122" y="494" width="293" height="2" fill="url(#g208)"/><rect x="1123" y="496" width="287" height="2" fill="url(#g209)"/><rect x="1124" y="498" width="280" height="2" fill="url(#g210)"/><rect x="1125" y="500" width="274" height="2" fill="url(#g211)"/><rect x="1126" y="502" width="267" height="2" fill="url(#g212)"/><rect x="1127" y="504" width="260" height="2" fill="url(#g213)"/><rect x="1128" y="506" width="254" height="2" fill="url(#g214)"/><rect x="1129" y="508" width="247" height="2" fill="url(#g215)"/><rect x="1130" y="510" width="241" height="2" fill="url(#g216)"/><rect x="1131" y="512" width="234" height="2" fill="url(#g217)"/><rect x="1132" y="514" width="227" height="2" fill="url(#g218)"/><rect x="1133" y="516" width="221" height="2" fill="url(#g219)"/><rect x="1134" y="518" width="214" height="2" fill="url(#g220)"/><rect x="1135" y="520" width="207" height="2" fill="url(#g221)"/><rect x="1137" y="522" width="200" height="2" fill="url(#g222)"/><rect x="1138" y="524" width="193" height="2" fill="url(#g223)"/><rect x="1139" y="526" width="187" height="2" fill="url(#g224)"/><rect x="1140" y="528" width="180" height="2" fill="url(#g225)"/><rect x="1141" y="530" width="173" height="2" fill="url(#g226)"/><rect x="1143" y="532" width="166" height="2" fill="url(#g227)"/><rect x="1144" y="534" width="159" height="2" fill="url(#g228)"/><rect x="1145" y="536" width="153" height="2" fill="url(#g229)"/><rect x="1147" y="538" width="145" height="2" fill="url(#g230)"/><rect x="1148" y="540" width="138" height="2" fill="url(#g231)"/><rect x="1149" y="542" width="132" height="2" fill="url(#g232)"/><rect x="1151" y="544" width="124" height="2" fill="url(#g233)"/><rect x="1152" y="546" width="118" height="2" fill="url(#g234)"/><rect x="1154" y="548" width="110" height="2" fill="url(#g235)"/><rect x="1156" y="550" width="102" height="2" fill="url(#g236)"/><rect x="1158" y="552" width="95" height="2" fill="url(#g237)"/><rect x="1159" y="554" width="88" height="2" fill="url(#g238)"/><rect x="1161" y="556" width="80" height="2" fill="url(#g239)"/><rect x="1164" y="558" width="72" height="2" fill="url(#g240)"/><rect x="1166" y="560" width="64" height="2" fill="url(#g241)"/><rect x="1169" y="562" width="56" height="2" fill="url(#g242)"/><rect x="1172" y="564" width="47" height="2" fill="url(#g243)"/><rect x="1175" y="566" width="38" height="2" fill="url(#g244)"/><rect x="1178" y="568" width="30" height="2" fill="url(#g245)"/><rect x="1180" y="570" width="22" height="2" fill="url(#g246)"/><rect x="1183" y="572" width="14" height="2" fill="url(#g247)"/>
<path d="M1189.96 573.84 1189.94 573.84 1189.93 573.83 1189.92 573.83 1189.9 573.82 1189.88 573.83 1189.85 573.84 1189.82 573.85 1189.79 573.86 1189.75 573.86 1189.72 573.87 1189.68 573.86 1189.64 573.85 1189.6 573.85 1189.57 573.85 1189.53 573.86 1189.49 573.88 1189.46 573.9 1189.42 573.91 1189.39 573.93 1189.36 573.94 1189.32 573.94 1189.28 573.95 1189.23 573.95 1189.17 573.95 1189.11 573.95 1189.04 573.95 1188.97 573.94 1188.9 573.93 1188.83 573.93 1188.76 573.93 1188.7 573.94 1188.62 573.94 1188.55 573.93 1188.47 573.93 1188.38 573.91 1188.3 573.9 1188.22 573.88 1188.11 573.85 1187.99 573.81 1187.85 573.75 1187.7 573.69 1187.53 573.62 1187.36 573.53 1187.18 573.44 1186.99 573.34 1186.8 573.23 1186.59 573.11 1186.37 572.98 1186.14 572.84 1185.89 572.68 1185.61 572.51 1185.32 572.33 1185.01 572.13 1184.68 571.92 1184.34 571.69 1184 571.45 1183.63 571.19 1183.25 570.91 1182.84 570.62 1182.41 570.32 1181.96 570 1181.48 569.67 1180.97 569.32 1180.42 568.96 1179.84 568.56 1179.22 568.15 1178.56 567.7 1177.87 567.24 1177.14 566.74 1176.37 566.23 1175.56 565.69 1174.72 565.12 1173.84 564.53 1172.93 563.9 1171.97 563.22 1170.96 562.5 1169.91 561.72 1168.81 560.9 1167.67 560.01 1166.5 559.06 1165.29 558.05 1164.04 556.97 1162.74 555.78 1161.37 554.47 1159.92 552.99 1158.37 551.31 1156.71 549.41 1154.93 547.27 1153.04 544.9 1151.06 542.29 1149 539.43 1146.85 536.3 1144.6 532.86 1142.24 529.09 1139.76 524.95 1137.17 520.38 1134.46 515.38 1131.62 509.92 1128.65 503.99 1125.53 497.56 1122.25 490.63 1118.82 483.14 1115.27 475.04 1111.63 466.32 1107.95 456.95 1104.29 446.95 1100.65 436.33 1097.03 425.08 1093.42 413.19 1089.81 400.67 1086.21 387.53 1082.66 373.85 1079.21 359.7 1075.89 345.17 1072.75 330.37 1069.83 315.42 1067.16 300.37 1064.76 285.29 1062.65 270.25 1060.85 255.31 1059.39 240.59 1058.29 226.23 1057.6 212.3 1057.33 198.83 1057.5 185.81 1058.11 173.22 1059.18 161.15 1060.71 149.67 1062.75 138.88 1065.29 128.86 1068.32 119.65 1071.81 111.28 1075.72 103.83 1080.03 97.37 1084.73 91.95 1089.77 87.54 1095.09 84.09 1100.66 81.55 1106.4 79.85 1112.31 78.94 1118.34 78.76 1124.47 79.24 1130.7 80.26 1136.98 81.7 1143.32 83.47 1149.69 85.52 1156.06 87.82 1162.41 90.3 1168.69 92.91 1174.87 95.62 1180.95 98.38 1186.94 101.2 1192.87 104.08 1198.73 107.04 1204.56 110.09 1210.34 113.21 1216.08 116.4 1221.79 119.66 1227.48 122.99 1233.14 126.39 1238.8 129.86 1244.44 133.39 1250.06 136.97 1255.67 140.61 1261.27 144.31 1266.86 148.05 1272.44 151.83 1278.01 155.66 1283.58 159.52 1289.15 163.42 1294.72 167.36 1300.28 171.33 1305.85 175.33 1311.41 179.35 1316.97 183.4 1322.53 187.47 1328.09 191.57 1333.66 195.68 1339.22 199.8 1344.77 203.94 1350.33 208.09 1355.88 212.25 1361.43 216.41 1366.96 220.57 1372.5 224.75 1378.02 228.92 1383.53 233.09 1389.03 237.26 1394.51 241.42 1399.98 245.58 1405.43 249.73 1410.86 253.87 1416.26 257.99 1421.64 262.1 1426.99 266.19 1432.31 270.26 1437.59 274.3 1442.84 278.32 1448.05 282.3 1453.21 286.26 1458.34 290.17 1463.42 294.06 1468.45 297.9 1473.42 301.7 1478.34 305.46 1483.2 309.17 1488 312.82 1492.72 316.43 1497.38 319.99 1501.97 323.49 1506.48 326.95 1510.91 330.34 1515.25 333.67 1519.48 336.91 1523.58 340.05 1527.55 343.09 1531.4 346.03 1535.13 348.88 1538.77 351.67 1542.33 354.39 1545.82 357.05 1549.23 359.66 1552.54 362.19 1555.74 364.63 1558.83 366.98 1561.78 369.23 1564.61 371.39 1567.33 373.46 1569.95 375.45 1572.46 377.36 1574.88 379.21 1577.21 380.98 1579.43 382.69 1581.56 384.32 1583.6 385.88 1585.55 387.37 1587.41 388.8 1589.18 390.15 1590.87 391.45 1592.49 392.69 1594.03 393.87 1595.51 395 1596.93 396.07 1598.28 397.1 1599.57 398.09 1600.81 399.03 1601.99 399.93 1603.12 400.79 1604.21 401.63 1605.26 402.43 1606.28 403.21 1607.27 403.97 1608.22 404.7 1609.14 405.4 1610.02 406.07 1610.86 406.72 1611.67 407.34 1612.45 407.94 1613.19 408.51 1613.91 409.05 1614.59 409.58 1615.25 410.08 1615.87 410.56 1616.46 411.01 1617.02 411.43 1617.54 411.83 1618.03 412.2 1618.48 412.55 1618.91 412.88 1619.32 413.19 1619.71 413.49 1620.09 413.78 1620.44 414.05 1620.78 414.31 1621.1 414.55 1621.39 414.78 1621.68 415 1621.94 415.2 1622.19 415.39 1622.42 415.56 1622.62 415.72 1622.81 415.87 1622.98 416 1623.14 416.12 1623.29 416.23 1623.44 416.35 1623.58 416.46 1623.72 416.57 1623.86 416.67 1623.99 416.77 1624.11 416.87 1624.23 416.96 1624.34 417.04 1624.45 417.12 1624.56 417.21 1624.66 417.29 1624.77 417.37 1624.88 417.46 1624.99 417.54 1625.1 417.62 1625.2 417.7 1625.31 417.78 1625.41 417.86 1625.5 417.93 1625.59 418 1625.66 418.06 1625.72 418.1 1625.77 418.14 1625.82 418.17 1625.86 418.2 1625.89 418.23 1625.93 418.26 1625.96 418.28 1625.99 418.31 1626.01 418.32 1626.04 418.34 1626.06 418.36 1626.08 418.37 1626.09 418.38 1626.09 418.38Z M1583.54 385.73 1260.67 164.8 1171.2 540.97Z" fill="#000" fill-opacity=".4" fill-rule="evenodd"/>
</g>
<path d="M1055 576.1 V76 H1708.6 V576.1" fill="none" stroke="#8e8e8e" stroke-width="1.7"/>
<rect x="1054" y="575.1" width="655.4" height="2" fill="#a4a4a4"/>
<rect x="1054.1" y="75.6" width="1.8" height="500.5" fill="#a4a4a4"/>
<rect x="1053.9" y="576.7" width="1.8" height="6" fill="#e0e0e0"/>
<text x="1054.8" y="597.6" font-size="15.5" fill="#d6d6d6" text-anchor="middle">0</text>
<rect x="1048.8" y="575.15" width="5.4" height="1.9" fill="#e0e0e0"/>
<text x="1049.2" y="581.2" font-size="15.5" fill="#d6d6d6" text-anchor="end">0</text>
<rect x="1131.6" y="576.7" width="1.8" height="6" fill="#e0e0e0"/>
<text x="1132.5" y="597.6" font-size="15.5" fill="#d6d6d6" text-anchor="middle">0,1</text>
<rect x="1048.8" y="515.75" width="5.4" height="1.9" fill="#e0e0e0"/>
<text x="1049.2" y="521.8" font-size="15.5" fill="#d6d6d6" text-anchor="end">0,1</text>
<rect x="1209.3" y="576.7" width="1.8" height="6" fill="#e0e0e0"/>
<text x="1210.2" y="597.6" font-size="15.5" fill="#d6d6d6" text-anchor="middle">0,2</text>
<rect x="1048.8" y="456.35" width="5.4" height="1.9" fill="#e0e0e0"/>
<text x="1049.2" y="462.4" font-size="15.5" fill="#d6d6d6" text-anchor="end">0,2</text>
<rect x="1287" y="576.7" width="1.8" height="6" fill="#e0e0e0"/>
<text x="1287.9" y="597.6" font-size="15.5" fill="#d6d6d6" text-anchor="middle">0,3</text>
<rect x="1048.8" y="396.95" width="5.4" height="1.9" fill="#e0e0e0"/>
<text x="1049.2" y="403" font-size="15.5" fill="#d6d6d6" text-anchor="end">0,3</text>
<rect x="1364.7" y="576.7" width="1.8" height="6" fill="#e0e0e0"/>
<text x="1365.6" y="597.6" font-size="15.5" fill="#d6d6d6" text-anchor="middle">0,4</text>
<rect x="1048.8" y="337.55" width="5.4" height="1.9" fill="#e0e0e0"/>
<text x="1049.2" y="343.6" font-size="15.5" fill="#d6d6d6" text-anchor="end">0,4</text>
<rect x="1442.4" y="576.7" width="1.8" height="6" fill="#e0e0e0"/>
<text x="1443.3" y="597.6" font-size="15.5" fill="#d6d6d6" text-anchor="middle">0,5</text>
<rect x="1048.8" y="278.15" width="5.4" height="1.9" fill="#e0e0e0"/>
<text x="1049.2" y="284.2" font-size="15.5" fill="#d6d6d6" text-anchor="end">0,5</text>
<rect x="1520.1" y="576.7" width="1.8" height="6" fill="#e0e0e0"/>
<text x="1521" y="597.6" font-size="15.5" fill="#d6d6d6" text-anchor="middle">0,6</text>
<rect x="1048.8" y="218.75" width="5.4" height="1.9" fill="#e0e0e0"/>
<text x="1049.2" y="224.8" font-size="15.5" fill="#d6d6d6" text-anchor="end">0,6</text>
<rect x="1597.8" y="576.7" width="1.8" height="6" fill="#e0e0e0"/>
<text x="1598.7" y="597.6" font-size="15.5" fill="#d6d6d6" text-anchor="middle">0,7</text>
<rect x="1048.8" y="159.35" width="5.4" height="1.9" fill="#e0e0e0"/>
<text x="1049.2" y="165.4" font-size="15.5" fill="#d6d6d6" text-anchor="end">0,7</text>
<rect x="1675.5" y="576.7" width="1.8" height="6" fill="#e0e0e0"/>
<text x="1676.4" y="597.6" font-size="15.5" fill="#d6d6d6" text-anchor="middle">0,8</text>
<rect x="1048.8" y="99.95" width="5.4" height="1.9" fill="#e0e0e0"/>
<text x="1049.2" y="106" font-size="15.5" fill="#d6d6d6" text-anchor="end">0,8</text>
<rect x="1508.6" y="79.8" width="196.8" height="154" fill="#343434"/>
<rect x="1510.6" y="82.6" width="191.8" height="148.6" fill="#9c9c9c"/>
<defs><linearGradient id="hB" gradientUnits="userSpaceOnUse" x1="1512" y1="0" x2="1701" y2="0"/><linearGradient id="h0" href="#hB"><stop offset="0" stop-color="#b7ff00"/><stop offset=".7937" stop-color="#ffff00"/><stop offset="1" stop-color="#ffec00"/></linearGradient><linearGradient id="h1" href="#hB"><stop offset="0" stop-color="#b8ff00"/><stop offset=".7884" stop-color="#ffff00"/><stop offset="1" stop-color="#ffec00"/></linearGradient><linearGradient id="h2" href="#hB"><stop offset="0" stop-color="#b8ff00"/><stop offset=".7778" stop-color="#ffff00"/><stop offset="1" stop-color="#ffeb00"/></linearGradient><linearGradient id="h3" href="#hB"><stop offset="0" stop-color="#b9ff00"/><stop offset=".7672" stop-color="#ffff00"/><stop offset="1" stop-color="#ffea00"/></linearGradient><linearGradient id="h4" href="#hB"><stop offset="0" stop-color="#b9ff00"/><stop offset=".7619" stop-color="#ffff00"/><stop offset="1" stop-color="#ffea00"/></linearGradient><linearGradient id="h5" href="#hB"><stop offset="0" stop-color="#baff00"/><stop offset=".7513" stop-color="#ffff00"/><stop offset="1" stop-color="#ffe900"/></linearGradient><linearGradient id="h6" href="#hB"><stop offset="0" stop-color="#bbff00"/><stop offset=".746" stop-color="#ffff00"/><stop offset="1" stop-color="#ffe800"/></linearGradient><linearGradient id="h7" href="#hB"><stop offset="0" stop-color="#bbff00"/><stop offset=".7354" stop-color="#ffff00"/><stop offset="1" stop-color="#ffe700"/></linearGradient><linearGradient id="h8" href="#hB"><stop offset="0" stop-color="#bcff00"/><stop offset=".7302" stop-color="#ffff00"/><stop offset="1" stop-color="#ffe700"/></linearGradient><linearGradient id="h9" href="#hB"><stop offset="0" stop-color="#bdff00"/><stop offset=".7196" stop-color="#ffff00"/><stop offset="1" stop-color="#ffe600"/></linearGradient><linearGradient id="h10" href="#hB"><stop offset="0" stop-color="#bdff00"/><stop offset=".709" stop-color="#ffff00"/><stop offset="1" stop-color="#ffe500"/></linearGradient><linearGradient id="h11" href="#hB"><stop offset="0" stop-color="#beff00"/><stop offset=".7037" stop-color="#ffff00"/><stop offset="1" stop-color="#ffe400"/></linearGradient><linearGradient id="h12" href="#hB"><stop offset="0" stop-color="#bfff00"/><stop offset=".6931" stop-color="#ffff00"/><stop offset="1" stop-color="#ffe400"/></linearGradient><linearGradient id="h13" href="#hB"><stop offset="0" stop-color="#bfff00"/><stop offset=".6878" stop-color="#ffff00"/><stop offset="1" stop-color="#ffe300"/></linearGradient><linearGradient id="h14" href="#hB"><stop offset="0" stop-color="#c0ff00"/><stop offset=".6772" stop-color="#ffff00"/><stop offset="1" stop-color="#ffe200"/></linearGradient><linearGradient id="h15" href="#hB"><stop offset="0" stop-color="#c1ff00"/><stop offset=".672" stop-color="#ffff00"/><stop offset="1" stop-color="#ffe200"/></linearGradient><linearGradient id="h16" href="#hB"><stop offset="0" stop-color="#c1ff00"/><stop offset=".6614" stop-color="#ffff00"/><stop offset="1" stop-color="#ffe100"/></linearGradient><linearGradient id="h17" href="#hB"><stop offset="0" stop-color="#c2ff00"/><stop offset=".6561" stop-color="#ffff00"/><stop offset="1" stop-color="#ffe000"/></linearGradient><linearGradient id="h18" href="#hB"><stop offset="0" stop-color="#c3ff00"/><stop offset=".6455" stop-color="#ffff00"/><stop offset="1" stop-color="#ffdf00"/></linearGradient><linearGradient id="h19" href="#hB"><stop offset="0" stop-color="#c3ff00"/><stop offset=".6349" stop-color="#ffff00"/><stop offset="1" stop-color="#ffdf00"/></linearGradient><linearGradient id="h20" href="#hB"><stop offset="0" stop-color="#c4ff00"/><stop offset=".6296" stop-color="#ffff00"/><stop offset="1" stop-color="#ffde00"/></linearGradient><linearGradient id="h21" href="#hB"><stop offset="0" stop-color="#c5ff00"/><stop offset=".619" stop-color="#ffff00"/><stop offset="1" stop-color="#ffdd00"/></linearGradient><linearGradient id="h22" href="#hB"><stop offset="0" stop-color="#c5ff00"/><stop offset=".6138" stop-color="#ffff00"/><stop offset="1" stop-color="#ffdd00"/></linearGradient><linearGradient id="h23" href="#hB"><stop offset="0" stop-color="#c6ff00"/><stop offset=".6032" stop-color="#ffff00"/><stop offset="1" stop-color="#ffdc00"/></linearGradient><linearGradient id="h24" href="#hB"><stop offset="0" stop-color="#c7ff00"/><stop offset=".5979" stop-color="#ffff00"/><stop offset="1" stop-color="#ffdb00"/></linearGradient><linearGradient id="h25" href="#hB"><stop offset="0" stop-color="#c7ff00"/><stop offset=".5873" stop-color="#ffff00"/><stop offset="1" stop-color="#ffdb00"/></linearGradient><linearGradient id="h26" href="#hB"><stop offset="0" stop-color="#c8ff00"/><stop offset=".5767" stop-color="#ffff00"/><stop offset="1" stop-color="#ffda00"/></linearGradient><linearGradient id="h27" href="#hB"><stop offset="0" stop-color="#c9ff00"/><stop offset=".5714" stop-color="#ffff00"/><stop offset="1" stop-color="#ffd900"/></linearGradient><linearGradient id="h28" href="#hB"><stop offset="0" stop-color="#c9ff00"/><stop offset=".5608" stop-color="#ffff00"/><stop offset="1" stop-color="#ffd800"/></linearGradient><linearGradient id="h29" href="#hB"><stop offset="0" stop-color="#caff00"/><stop offset=".5556" stop-color="#ffff00"/><stop offset="1" stop-color="#ffd800"/></linearGradient><linearGradient id="h30" href="#hB"><stop offset="0" stop-color="#cbff00"/><stop offset=".545" stop-color="#ffff00"/><stop offset="1" stop-color="#ffd700"/></linearGradient><linearGradient id="h31" href="#hB"><stop offset="0" stop-color="#cbff00"/><stop offset=".5397" stop-color="#ffff00"/><stop offset="1" stop-color="#ffd600"/></linearGradient><linearGradient id="h32" href="#hB"><stop offset="0" stop-color="#ccff00"/><stop offset=".5291" stop-color="#ffff00"/><stop offset="1" stop-color="#ffd600"/></linearGradient><linearGradient id="h33" href="#hB"><stop offset="0" stop-color="#cdff00"/><stop offset=".5185" stop-color="#ffff00"/><stop offset="1" stop-color="#ffd500"/></linearGradient><linearGradient id="h34" href="#hB"><stop offset="0" stop-color="#cdff00"/><stop offset=".5132" stop-color="#ffff00"/><stop offset="1" stop-color="#ffd400"/></linearGradient><linearGradient id="h35" href="#hB"><stop offset="0" stop-color="#ceff00"/><stop offset=".5026" stop-color="#ffff00"/><stop offset="1" stop-color="#ffd400"/></linearGradient><linearGradient id="h36" href="#hB"><stop offset="0" stop-color="#cfff00"/><stop offset=".4974" stop-color="#ffff00"/><stop offset="1" stop-color="#ffd300"/></linearGradient><linearGradient id="h37" href="#hB"><stop offset="0" stop-color="#d0ff00"/><stop offset=".4868" stop-color="#ffff00"/><stop offset="1" stop-color="#ffd200"/></linearGradient><linearGradient id="h38" href="#hB"><stop offset="0" stop-color="#d0ff00"/><stop offset=".4815" stop-color="#ffff00"/><stop offset="1" stop-color="#ffd200"/></linearGradient><linearGradient id="h39" href="#hB"><stop offset="0" stop-color="#d1ff00"/><stop offset=".4709" stop-color="#ffff00"/><stop offset="1" stop-color="#ffd100"/></linearGradient><linearGradient id="h40" href="#hB"><stop offset="0" stop-color="#d2ff00"/><stop offset=".4603" stop-color="#ffff00"/><stop offset="1" stop-color="#ffd000"/></linearGradient><linearGradient id="h41" href="#hB"><stop offset="0" stop-color="#d2ff00"/><stop offset=".455" stop-color="#ffff00"/><stop offset="1" stop-color="#ffd000"/></linearGradient><linearGradient id="h42" href="#hB"><stop offset="0" stop-color="#d3ff00"/><stop offset=".4444" stop-color="#ffff00"/><stop offset="1" stop-color="#ffcf00"/></linearGradient><linearGradient id="h43" href="#hB"><stop offset="0" stop-color="#d4ff00"/><stop offset=".4392" stop-color="#ffff00"/><stop offset="1" stop-color="#ffce00"/></linearGradient><linearGradient id="h44" href="#hB"><stop offset="0" stop-color="#d5ff00"/><stop offset=".4286" stop-color="#ffff00"/><stop offset=".7037" stop-color="#ffe500"/><stop offset="1" stop-color="#ffce00"/></linearGradient><linearGradient id="h45" href="#hB"><stop offset="0" stop-color="#d5ff00"/><stop offset=".4233" stop-color="#ffff00"/><stop offset=".6984" stop-color="#ffe500"/><stop offset="1" stop-color="#ffcd00"/></linearGradient><linearGradient id="h46" href="#hB"><stop offset="0" stop-color="#d6ff00"/><stop offset=".4127" stop-color="#ffff00"/><stop offset=".6931" stop-color="#ffe500"/><stop offset="1" stop-color="#ffcc00"/></linearGradient><linearGradient id="h47" href="#hB"><stop offset="0" stop-color="#d7ff00"/><stop offset=".4021" stop-color="#ffff00"/><stop offset=".6931" stop-color="#ffe400"/><stop offset="1" stop-color="#ffcb00"/></linearGradient><linearGradient id="h48" href="#hB"><stop offset="0" stop-color="#d8ff00"/><stop offset=".3968" stop-color="#ffff00"/><stop offset=".6878" stop-color="#ffe300"/><stop offset="1" stop-color="#ffcb00"/></linearGradient><linearGradient id="h49" href="#hB"><stop offset="0" stop-color="#d8ff00"/><stop offset=".3862" stop-color="#ffff00"/><stop offset=".6825" stop-color="#ffe300"/><stop offset="1" stop-color="#ffca00"/></linearGradient><linearGradient id="h50" href="#hB"><stop offset="0" stop-color="#d9ff00"/><stop offset=".381" stop-color="#ffff00"/><stop offset=".6772" stop-color="#ffe300"/><stop offset="1" stop-color="#ffca00"/></linearGradient><linearGradient id="h51" href="#hB"><stop offset="0" stop-color="#daff00"/><stop offset=".3704" stop-color="#ffff00"/><stop offset=".672" stop-color="#ffe300"/><stop offset="1" stop-color="#ffc900"/></linearGradient><linearGradient id="h52" href="#hB"><stop offset="0" stop-color="#dbff00"/><stop offset=".3651" stop-color="#ffff00"/><stop offset=".6667" stop-color="#ffe200"/><stop offset="1" stop-color="#ffc800"/></linearGradient><linearGradient id="h53" href="#hB"><stop offset="0" stop-color="#dbff00"/><stop offset=".3545" stop-color="#ffff00"/><stop offset=".6614" stop-color="#ffe200"/><stop offset="1" stop-color="#ffc800"/></linearGradient><linearGradient id="h54" href="#hB"><stop offset="0" stop-color="#dcff00"/><stop offset=".3439" stop-color="#ffff00"/><stop offset=".6614" stop-color="#ffe100"/><stop offset="1" stop-color="#ffc700"/></linearGradient><linearGradient id="h55" href="#hB"><stop offset="0" stop-color="#ddff00"/><stop offset=".3386" stop-color="#ffff00"/><stop offset=".6508" stop-color="#ffe100"/><stop offset="1" stop-color="#ffc600"/></linearGradient><linearGradient id="h56" href="#hB"><stop offset="0" stop-color="#deff00"/><stop offset=".328" stop-color="#ffff00"/><stop offset=".6508" stop-color="#ffe100"/><stop offset="1" stop-color="#ffc600"/></linearGradient><linearGradient id="h57" href="#hB"><stop offset="0" stop-color="#deff00"/><stop offset=".3228" stop-color="#ffff00"/><stop offset=".6455" stop-color="#ffe000"/><stop offset="1" stop-color="#ffc500"/></linearGradient><linearGradient id="h58" href="#hB"><stop offset="0" stop-color="#dfff00"/><stop offset=".3122" stop-color="#ffff00"/><stop offset=".6402" stop-color="#ffe000"/><stop offset="1" stop-color="#ffc400"/></linearGradient><linearGradient id="h59" href="#hB"><stop offset="0" stop-color="#e0ff00"/><stop offset=".3069" stop-color="#ffff00"/><stop offset=".6349" stop-color="#ffe000"/><stop offset="1" stop-color="#ffc400"/></linearGradient><linearGradient id="h60" href="#hB"><stop offset="0" stop-color="#e1ff00"/><stop offset=".2963" stop-color="#ffff00"/><stop offset=".6296" stop-color="#ffdf00"/><stop offset="1" stop-color="#ffc300"/></linearGradient><linearGradient id="h61" href="#hB"><stop offset="0" stop-color="#e2ff00"/><stop offset=".291" stop-color="#ffff00"/><stop offset=".6296" stop-color="#ffdf00"/><stop offset="1" stop-color="#ffc200"/></linearGradient><linearGradient id="h62" href="#hB"><stop offset="0" stop-color="#e2ff00"/><stop offset=".2804" stop-color="#ffff00"/><stop offset=".619" stop-color="#ffdf00"/><stop offset="1" stop-color="#ffc200"/></linearGradient><linearGradient id="h63" href="#hB"><stop offset="0" stop-color="#e3ff00"/><stop offset=".2698" stop-color="#ffff00"/><stop offset=".619" stop-color="#ffde00"/><stop offset="1" stop-color="#ffc100"/></linearGradient><linearGradient id="h64" href="#hB"><stop offset="0" stop-color="#e4ff00"/><stop offset=".2646" stop-color="#ffff00"/><stop offset=".6138" stop-color="#ffde00"/><stop offset="1" stop-color="#ffc000"/></linearGradient><linearGradient id="h65" href="#hB"><stop offset="0" stop-color="#e5ff00"/><stop offset=".254" stop-color="#ffff00"/><stop offset=".6085" stop-color="#ffdd00"/><stop offset="1" stop-color="#ffc000"/></linearGradient><linearGradient id="h66" href="#hB"><stop offset="0" stop-color="#e6ff00"/><stop offset=".2487" stop-color="#ffff00"/><stop offset=".6032" stop-color="#ffdd00"/><stop offset="1" stop-color="#ffbf00"/></linearGradient><linearGradient id="h67" href="#hB"><stop offset="0" stop-color="#e6ff00"/><stop offset=".2381" stop-color="#ffff00"/><stop offset=".5979" stop-color="#ffdd00"/><stop offset="1" stop-color="#ffbe00"/></linearGradient><linearGradient id="h68" href="#hB"><stop offset="0" stop-color="#e7ff00"/><stop offset=".2328" stop-color="#ffff00"/><stop offset=".5926" stop-color="#ffdd00"/><stop offset="1" stop-color="#ffbe00"/></linearGradient><linearGradient id="h69" href="#hB"><stop offset="0" stop-color="#e8ff00"/><stop offset=".2222" stop-color="#ffff00"/><stop offset=".5873" stop-color="#ffdc00"/><stop offset="1" stop-color="#ffbd00"/></linearGradient><linearGradient id="h70" href="#hB"><stop offset="0" stop-color="#e9ff00"/><stop offset=".2116" stop-color="#ffff00"/><stop offset=".582" stop-color="#ffdc00"/><stop offset="1" stop-color="#ffbc00"/></linearGradient><linearGradient id="h71" href="#hB"><stop offset="0" stop-color="#eaff00"/><stop offset=".2063" stop-color="#ffff00"/><stop offset=".582" stop-color="#ffdb00"/><stop offset="1" stop-color="#ffbc00"/></linearGradient><linearGradient id="h72" href="#hB"><stop offset="0" stop-color="#ebff00"/><stop offset=".1958" stop-color="#ffff00"/><stop offset=".5767" stop-color="#ffdb00"/><stop offset="1" stop-color="#ffbb00"/></linearGradient><clipPath id="ic"><rect x="1512" y="84" width="189" height="146"/></clipPath></defs>
<g clip-path="url(#ic)"><rect x="1512" y="84" width="189" height="2" fill="url(#h0)"/><rect x="1512" y="86" width="189" height="2" fill="url(#h1)"/><rect x="1512" y="88" width="189" height="2" fill="url(#h2)"/><rect x="1512" y="90" width="189" height="2" fill="url(#h3)"/><rect x="1512" y="92" width="189" height="2" fill="url(#h4)"/><rect x="1512" y="94" width="189" height="2" fill="url(#h5)"/><rect x="1512" y="96" width="189" height="2" fill="url(#h6)"/><rect x="1512" y="98" width="189" height="2" fill="url(#h7)"/><rect x="1512" y="100" width="189" height="2" fill="url(#h8)"/><rect x="1512" y="102" width="189" height="2" fill="url(#h9)"/><rect x="1512" y="104" width="189" height="2" fill="url(#h10)"/><rect x="1512" y="106" width="189" height="2" fill="url(#h11)"/><rect x="1512" y="108" width="189" height="2" fill="url(#h12)"/><rect x="1512" y="110" width="189" height="2" fill="url(#h13)"/><rect x="1512" y="112" width="189" height="2" fill="url(#h14)"/><rect x="1512" y="114" width="189" height="2" fill="url(#h15)"/><rect x="1512" y="116" width="189" height="2" fill="url(#h16)"/><rect x="1512" y="118" width="189" height="2" fill="url(#h17)"/><rect x="1512" y="120" width="189" height="2" fill="url(#h18)"/><rect x="1512" y="122" width="189" height="2" fill="url(#h19)"/><rect x="1512" y="124" width="189" height="2" fill="url(#h20)"/><rect x="1512" y="126" width="189" height="2" fill="url(#h21)"/><rect x="1512" y="128" width="189" height="2" fill="url(#h22)"/><rect x="1512" y="130" width="189" height="2" fill="url(#h23)"/><rect x="1512" y="132" width="189" height="2" fill="url(#h24)"/><rect x="1512" y="134" width="189" height="2" fill="url(#h25)"/><rect x="1512" y="136" width="189" height="2" fill="url(#h26)"/><rect x="1512" y="138" width="189" height="2" fill="url(#h27)"/><rect x="1512" y="140" width="189" height="2" fill="url(#h28)"/><rect x="1512" y="142" width="189" height="2" fill="url(#h29)"/><rect x="1512" y="144" width="189" height="2" fill="url(#h30)"/><rect x="1512" y="146" width="189" height="2" fill="url(#h31)"/><rect x="1512" y="148" width="189" height="2" fill="url(#h32)"/><rect x="1512" y="150" width="189" height="2" fill="url(#h33)"/><rect x="1512" y="152" width="189" height="2" fill="url(#h34)"/><rect x="1512" y="154" width="189" height="2" fill="url(#h35)"/><rect x="1512" y="156" width="189" height="2" fill="url(#h36)"/><rect x="1512" y="158" width="189" height="2" fill="url(#h37)"/><rect x="1512" y="160" width="189" height="2" fill="url(#h38)"/><rect x="1512" y="162" width="189" height="2" fill="url(#h39)"/><rect x="1512" y="164" width="189" height="2" fill="url(#h40)"/><rect x="1512" y="166" width="189" height="2" fill="url(#h41)"/><rect x="1512" y="168" width="189" height="2" fill="url(#h42)"/><rect x="1512" y="170" width="189" height="2" fill="url(#h43)"/><rect x="1512" y="172" width="189" height="2" fill="url(#h44)"/><rect x="1512" y="174" width="189" height="2" fill="url(#h45)"/><rect x="1512" y="176" width="189" height="2" fill="url(#h46)"/><rect x="1512" y="178" width="189" height="2" fill="url(#h47)"/><rect x="1512" y="180" width="189" height="2" fill="url(#h48)"/><rect x="1512" y="182" width="189" height="2" fill="url(#h49)"/><rect x="1512" y="184" width="189" height="2" fill="url(#h50)"/><rect x="1512" y="186" width="189" height="2" fill="url(#h51)"/><rect x="1512" y="188" width="189" height="2" fill="url(#h52)"/><rect x="1512" y="190" width="189" height="2" fill="url(#h53)"/><rect x="1512" y="192" width="189" height="2" fill="url(#h54)"/><rect x="1512" y="194" width="189" height="2" fill="url(#h55)"/><rect x="1512" y="196" width="189" height="2" fill="url(#h56)"/><rect x="1512" y="198" width="189" height="2" fill="url(#h57)"/><rect x="1512" y="200" width="189" height="2" fill="url(#h58)"/><rect x="1512" y="202" width="189" height="2" fill="url(#h59)"/><rect x="1512" y="204" width="189" height="2" fill="url(#h60)"/><rect x="1512" y="206" width="189" height="2" fill="url(#h61)"/><rect x="1512" y="208" width="189" height="2" fill="url(#h62)"/><rect x="1512" y="210" width="189" height="2" fill="url(#h63)"/><rect x="1512" y="212" width="189" height="2" fill="url(#h64)"/><rect x="1512" y="214" width="189" height="2" fill="url(#h65)"/><rect x="1512" y="216" width="189" height="2" fill="url(#h66)"/><rect x="1512" y="218" width="189" height="2" fill="url(#h67)"/><rect x="1512" y="220" width="189" height="2" fill="url(#h68)"/><rect x="1512" y="222" width="189" height="2" fill="url(#h69)"/><rect x="1512" y="224" width="189" height="2" fill="url(#h70)"/><rect x="1512" y="226" width="189" height="2" fill="url(#h71)"/><rect x="1512" y="228" width="189" height="2" fill="url(#h72)"/>
<path d="M1507 88.86 L1706 225.03 L1706 79 L1507 79Z" fill="#000" fill-opacity=".4"/>
<path d="M1548 37.8 L1706 158.67 L1706 37.8Z" fill="#242424"/>
<rect x="1598.5" y="149.1" width="15" height="15" fill="none" stroke="#fff" stroke-width="1.3"/>
<circle cx="1626" cy="162" r="4.4" fill="#ffff00" stroke="#000" stroke-width="1.2"/>
</g>
<rect x="1424" y="536" width="281" height="28" fill="#343434"/>
<text x="1455.7" y="558.5" font-size="22.3" fill="#f0f0f0" textLength="218.6" lengthAdjust="spacingAndGlyphs">RGB Triplet: 255, 255, 0</text>
<g fill="none" stroke="#fff" stroke-width="1.5">
<rect x="1290.75" y="371.75" width="14.5" height="14.5"/>
<rect x="1358.75" y="353.75" width="14.5" height="14.5"/>
<rect x="1342.75" y="356.75" width="14.5" height="14.5"/>
<rect x="1240.75" y="408.75" width="14.5" height="14.5"/>
<rect x="1309.75" y="314.75" width="14.5" height="14.5"/>
<rect x="1254.75" y="415.75" width="14.5" height="14.5"/>
<rect x="1251.75" y="356.75" width="14.5" height="14.5"/>
<rect x="1444.75" y="326.75" width="14.5" height="14.5"/>
<rect x="1214.75" y="452.75" width="14.5" height="14.5"/>
<rect x="1402.75" y="380.75" width="14.5" height="14.5"/>
<rect x="1270.75" y="434.75" width="14.5" height="14.5"/>
<rect x="1339.75" y="271.75" width="14.5" height="14.5"/>
<rect x="1413.75" y="304.75" width="14.5" height="14.5"/>
<rect x="1197.75" y="483.75" width="14.5" height="14.5"/>
<rect x="1285.75" y="277.75" width="14.5" height="14.5"/>
<rect x="1465.75" y="376.75" width="14.5" height="14.5"/>
<rect x="1395.75" y="285.75" width="14.5" height="14.5"/>
<rect x="1336.75" y="421.75" width="14.5" height="14.5"/>
<rect x="1200.75" y="410.75" width="14.5" height="14.5"/>
<rect x="1576.75" y="376.75" width="14.5" height="14.5"/>
<rect x="1252.75" y="156.75" width="14.5" height="14.5"/>
<rect x="1164.75" y="532.75" width="14.5" height="14.5"/>
<rect x="1201.75" y="369.75" width="14.5" height="14.5"/>
<rect x="1308.75" y="478.75" width="14.5" height="14.5"/>
<rect x="1386.75" y="248.75" width="14.5" height="14.5"/>
</g>
<rect x="1290.9" y="371.9" width="14" height="14" fill="none" stroke="#000" stroke-width="2"/>
<g stroke="#000" stroke-width="1.2">
<circle cx="1325.9" cy="357.8" r="4.5" fill="#000"/>
<circle cx="1297.9" cy="379.7" r="4.4" fill="#9a9a9a"/>
<circle cx="1385" cy="359" r="4.4" fill="#6e4b41"/>
<circle cx="1359.4" cy="361.9" r="4.4" fill="#b99687"/>
<circle cx="1237.3" cy="421.9" r="4.4" fill="#5f789b"/>
<circle cx="1319" cy="311.4" r="4.4" fill="#5f6946"/>
<circle cx="1257" cy="427.9" r="4.4" fill="#827daa"/>
<circle cx="1246.9" cy="360.5" r="4.4" fill="#8cb4a5"/>
<circle cx="1472" cy="335" r="4.4" fill="#cd8246"/>
<circle cx="1208" cy="470" r="4.4" fill="#4b5aa0"/>
<circle cx="1431" cy="388.6" r="4.4" fill="#b9555f"/>
<circle cx="1274" cy="449.9" r="4.4" fill="#553c64"/>
<circle cx="1350.9" cy="271" r="4.4" fill="#a5b95a"/>
<circle cx="1437" cy="311.5" r="4.4" fill="#d7a546"/>
<circle cx="1190" cy="503.9" r="4.4" fill="#414696"/>
<circle cx="1288.1" cy="268.8" r="4.4" fill="#69915a"/>
<circle cx="1499.9" cy="385.8" r="4.4" fill="#af3c41"/>
<circle cx="1413.9" cy="292" r="4.4" fill="#e4c855"/>
<circle cx="1357" cy="431.8" r="4.4" fill="#b45591"/>
<circle cx="1192.9" cy="421.9" r="4.4" fill="#37829b"/>
<circle cx="1583.9" cy="385.8" r="4.4" fill="#ff0000"/>
<circle cx="1243.1" cy="150" r="4.4" fill="#00ff00"/>
<circle cx="1160" cy="543.8" r="4.4" fill="#0000ff"/>
<circle cx="1195.4" cy="375.8" r="4.4" fill="#00ffff"/>
<circle cx="1323" cy="482.4" r="4.4" fill="#ff00ff"/>
<circle cx="1399" cy="257.1" r="4.4" fill="#ffff00"/>
</g>
</g>
</svg></body></html>
